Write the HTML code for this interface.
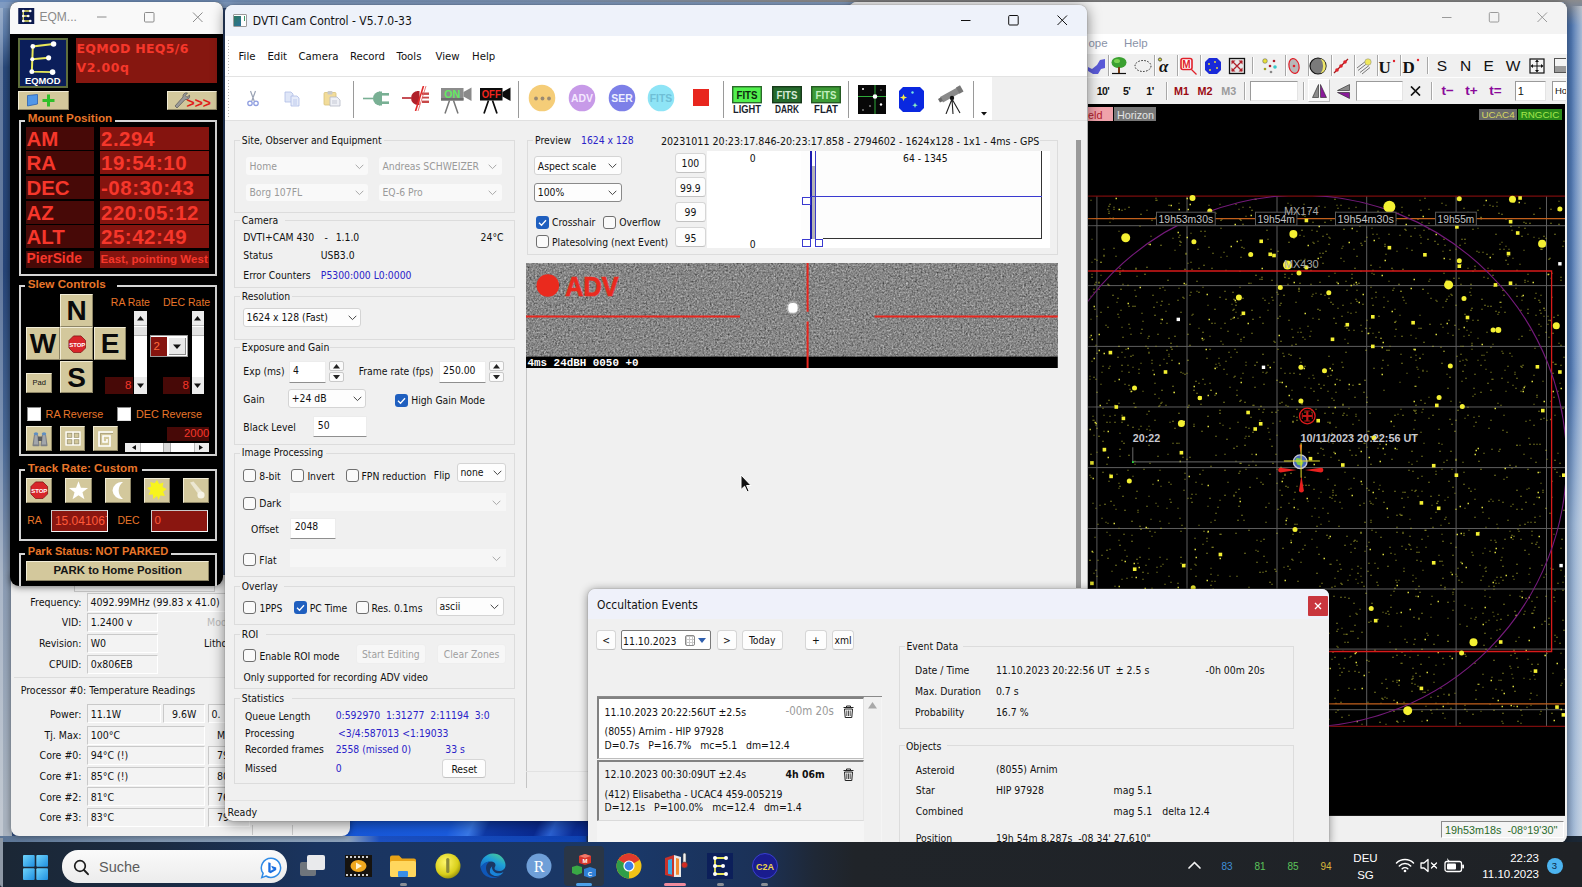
<!DOCTYPE html>
<html lang="de"><head><meta charset="utf-8"><title>Desktop</title>
<style>
html,body{margin:0;padding:0;background:#1b2735}
body{width:1582px;height:887px;overflow:hidden;position:relative;font-family:"Liberation Sans","DejaVu Sans",sans-serif}
#scr{position:absolute;left:0;top:0;width:1582px;height:887px;overflow:hidden}
#scr div,#scr svg{position:absolute}
.th{left:0;top:0;width:1582px;height:887px;font-family:"DejaVu Sans Condensed","Liberation Sans",sans-serif}
</style></head><body><div id="scr">
<div style="left:0;top:0;width:1582px;height:887px;background:#33507f"></div>
<div style="left:0px;top:0px;width:12px;height:845px;background:linear-gradient(180deg,#7d99bd 0%,#5a7aa8 4%,#2a4a7c 8%,#27467a 32%,#4a6a98 52%,#8a9bb3 68%,#a9b3bf 96%)"></div>
<div style="left:0px;top:0px;width:2.5px;height:845px;background:rgba(255,255,255,.28)"></div>
<div style="left:0px;top:0px;width:1582px;height:8px;background:linear-gradient(90deg,#7f9bc2 0%,#86a0c4 50%,#8fa3bd 100%)"></div>
<div style="left:0px;top:0px;width:1582px;height:1.6px;background:linear-gradient(90deg,#6d8ebd 0%,#7e95b3 35%,#8d8d8e 50%,#8a8a8a 100%)"></div>
<div style="left:1564px;top:0px;width:18px;height:845px;background:linear-gradient(180deg,#8c8c8e 0%,#4f78b4 3%,#547db8 45%,#8eabd0 62%,#9db6d6 100%)"></div>
<div style="left:1571px;top:6px;width:11px;height:839px;background:linear-gradient(90deg,rgba(255,255,255,0),rgba(226,230,234,.6))"></div>
<div style="left:340px;top:815px;width:260px;height:30px;background:linear-gradient(115deg,#1657d8 0%,#1a5ce0 42%,#3a7aea 50%,#0f3aa8 56%,#0a2a92 74%,#2b62d4 80%,#0c2f9a 88%,#0b2c94 100%)"></div>
<div style="left:0px;top:836px;width:1582px;height:6px;background:linear-gradient(90deg,#5b7596 0%,#8096b0 10%,#8ea3bb 22%,#1b4fc0 24%,#0f43b4 37%,#1b2735 37.2%)"></div>

<!-- Core Temp + EQMOD -->

<div class="th">
<div style="left:10.5px;top:575px;width:339.5px;height:260.5px;background:#f0f0f0;border-radius:0 0 8px 8px;box-shadow:0 0 6px rgba(0,0,0,.45)"></div>
<div style="left:74px;top:585px;width:141px;height:7px;background:#f3f3f3;border:1px solid #c9c9c9;box-sizing:border-box"></div>
<div style="right:1500.5px;top:595px;font-size:10.5px;line-height:14px;color:#111;white-space:nowrap;">Frequency:</div>
<div style="left:86.7px;top:592.7px;width:139.3px;height:19px;background:#f3f3f3;box-sizing:border-box;border:1px solid #c9c9c9;border-right-color:#fff;border-bottom-color:#fff"></div>
<div style="left:90.5px;top:595px;font-size:10.5px;line-height:14px;color:#111;white-space:nowrap;">4092.99MHz (99.83 x 41.0)</div>
<div style="right:1500.5px;top:615.4px;font-size:10.5px;line-height:14px;color:#111;white-space:nowrap;">VID:</div>
<div style="left:86.7px;top:613.1px;width:70.9px;height:19px;background:#f3f3f3;box-sizing:border-box;border:1px solid #c9c9c9;border-right-color:#fff;border-bottom-color:#fff"></div>
<div style="left:90.7px;top:615.4px;font-size:10.5px;line-height:14px;color:#111;white-space:nowrap;">1.2400 v</div>
<div style="right:1500.5px;top:636.1px;font-size:10.5px;line-height:14px;color:#111;white-space:nowrap;">Revision:</div>
<div style="left:86.7px;top:633.8px;width:70.9px;height:19px;background:#f3f3f3;box-sizing:border-box;border:1px solid #c9c9c9;border-right-color:#fff;border-bottom-color:#fff"></div>
<div style="left:90.7px;top:636.1px;font-size:10.5px;line-height:14px;color:#111;white-space:nowrap;">W0</div>
<div style="right:1500.5px;top:656.8px;font-size:10.5px;line-height:14px;color:#111;white-space:nowrap;">CPUID:</div>
<div style="left:86.7px;top:654.5px;width:70.9px;height:19px;background:#f3f3f3;box-sizing:border-box;border:1px solid #c9c9c9;border-right-color:#fff;border-bottom-color:#fff"></div>
<div style="left:90.7px;top:656.8px;font-size:10.5px;line-height:14px;color:#111;white-space:nowrap;">0x806EB</div>
<div style="left:207px;top:615.4px;font-size:10.5px;line-height:14px;color:#b8b8b8;white-space:nowrap;">Mod</div>
<div style="left:204px;top:636.1px;font-size:10.5px;line-height:14px;color:#111;white-space:nowrap;">Litho</div>
<div style="left:14px;top:677px;width:336px;height:1px;background:#dcdcdc"></div>
<div style="left:20.7px;top:683px;font-size:10.5px;line-height:14px;color:#111;white-space:nowrap;">Processor #0: Temperature Readings</div>
<div style="right:1500.5px;top:706.7px;font-size:10.5px;line-height:14px;color:#111;white-space:nowrap;">Power:</div>
<div style="left:86.7px;top:704.4px;width:74.6px;height:19px;background:#f3f3f3;box-sizing:border-box;border:1px solid #c9c9c9;border-right-color:#fff;border-bottom-color:#fff"></div>
<div style="left:90.7px;top:706.7px;font-size:10.5px;line-height:14px;color:#111;white-space:nowrap;">11.1W</div>
<div style="left:163.4px;top:704.4px;width:42px;height:19px;background:#f3f3f3;box-sizing:border-box;border:1px solid #c9c9c9;border-right-color:#fff;border-bottom-color:#fff"></div>
<div style="left:172px;top:706.7px;font-size:10.5px;line-height:14px;color:#111;white-space:nowrap;">9.6W</div>
<div style="left:207.5px;top:704.4px;width:42.5px;height:19px;background:#f3f3f3;box-sizing:border-box;border:1px solid #c9c9c9;border-right-color:#fff;border-bottom-color:#fff"></div>
<div style="left:211.5px;top:706.7px;font-size:10.5px;line-height:14px;color:#111;white-space:nowrap;">0.</div>
<div style="right:1500.5px;top:728px;font-size:10.5px;line-height:14px;color:#111;white-space:nowrap;">Tj. Max:</div>
<div style="left:86.7px;top:725.7px;width:118.7px;height:19px;background:#f3f3f3;box-sizing:border-box;border:1px solid #c9c9c9;border-right-color:#fff;border-bottom-color:#fff"></div>
<div style="left:90.7px;top:728px;font-size:10.5px;line-height:14px;color:#111;white-space:nowrap;">100°C</div>
<div style="left:217px;top:728px;font-size:10.5px;line-height:14px;color:#111;white-space:nowrap;">M</div>
<div style="right:1500.5px;top:748.4px;font-size:10.5px;line-height:14px;color:#111;white-space:nowrap;">Core #0:</div>
<div style="left:86.7px;top:746.1px;width:118.7px;height:19px;background:#f3f3f3;box-sizing:border-box;border:1px solid #c9c9c9;border-right-color:#fff;border-bottom-color:#fff"></div>
<div style="left:90.7px;top:748.4px;font-size:10.5px;line-height:14px;color:#111;white-space:nowrap;">94°C (!)</div>
<div style="left:207.5px;top:746.1px;width:42.5px;height:19px;background:#f3f3f3;box-sizing:border-box;border:1px solid #c9c9c9;border-right-color:#fff;border-bottom-color:#fff"></div>
<div style="left:217px;top:748.4px;font-size:10.5px;line-height:14px;color:#111;white-space:nowrap;">79</div>
<div style="right:1500.5px;top:769.1px;font-size:10.5px;line-height:14px;color:#111;white-space:nowrap;">Core #1:</div>
<div style="left:86.7px;top:766.8px;width:118.7px;height:19px;background:#f3f3f3;box-sizing:border-box;border:1px solid #c9c9c9;border-right-color:#fff;border-bottom-color:#fff"></div>
<div style="left:90.7px;top:769.1px;font-size:10.5px;line-height:14px;color:#111;white-space:nowrap;">85°C (!)</div>
<div style="left:207.5px;top:766.8px;width:42.5px;height:19px;background:#f3f3f3;box-sizing:border-box;border:1px solid #c9c9c9;border-right-color:#fff;border-bottom-color:#fff"></div>
<div style="left:217px;top:769.1px;font-size:10.5px;line-height:14px;color:#111;white-space:nowrap;">80</div>
<div style="right:1500.5px;top:789.5px;font-size:10.5px;line-height:14px;color:#111;white-space:nowrap;">Core #2:</div>
<div style="left:86.7px;top:787.2px;width:118.7px;height:19px;background:#f3f3f3;box-sizing:border-box;border:1px solid #c9c9c9;border-right-color:#fff;border-bottom-color:#fff"></div>
<div style="left:90.7px;top:789.5px;font-size:10.5px;line-height:14px;color:#111;white-space:nowrap;">81°C</div>
<div style="left:207.5px;top:787.2px;width:42.5px;height:19px;background:#f3f3f3;box-sizing:border-box;border:1px solid #c9c9c9;border-right-color:#fff;border-bottom-color:#fff"></div>
<div style="left:217px;top:789.5px;font-size:10.5px;line-height:14px;color:#111;white-space:nowrap;">76</div>
<div style="right:1500.5px;top:809.9px;font-size:10.5px;line-height:14px;color:#111;white-space:nowrap;">Core #3:</div>
<div style="left:86.7px;top:807.6px;width:118.7px;height:19px;background:#f3f3f3;box-sizing:border-box;border:1px solid #c9c9c9;border-right-color:#fff;border-bottom-color:#fff"></div>
<div style="left:90.7px;top:809.9px;font-size:10.5px;line-height:14px;color:#111;white-space:nowrap;">83°C</div>
<div style="left:207.5px;top:807.6px;width:42.5px;height:19px;background:#f3f3f3;box-sizing:border-box;border:1px solid #c9c9c9;border-right-color:#fff;border-bottom-color:#fff"></div>
<div style="left:217px;top:809.9px;font-size:10.5px;line-height:14px;color:#111;white-space:nowrap;">79</div>
<div style="left:252px;top:825px;width:41px;height:10px;border-left:1px solid #c9c9c9;border-right:1px solid #c9c9c9;box-sizing:border-box"></div>
</div>
<div style="left:10px;top:2px;width:212.5px;height:584px;background:#000;border-radius:8px 8px 9px 9px;box-shadow:0 1px 7px rgba(0,0,0,.55)"></div>
<div style="left:10px;top:2px;width:212.5px;height:32px;background:#f9f9f9;border-radius:8px 8px 0 0"></div>
<svg style="left:18.3px;top:8.4px" width="16.5" height="16" viewBox="0 0 16 16"><rect width="16" height="16" fill="#0c1a4e"/><path d="M12 3H5v10h7M5 8h5" fill="none" stroke="#e6e45e" stroke-width="1.3"/><g fill="#fff"><circle cx="5" cy="3" r="1.3"/><circle cx="12" cy="3" r="1.3"/><circle cx="5" cy="13" r="1.3"/><circle cx="12" cy="13" r="1.3"/><circle cx="10" cy="8" r="1.3"/><circle cx="5" cy="8" r="1.3"/></g></svg>
<div style="left:39.5px;top:9.2px;font-size:12px;line-height:16px;color:#8a8a8a;white-space:nowrap;">EQM...</div>
<svg style="left:96px;top:11px" width="110" height="13" viewBox="0 0 110 13"><g fill="none" stroke="#8c8c8c" stroke-width="1"><path d="M1 6h9.5"/><rect x="48.5" y="1.5" width="9.5" height="9.5" rx="1"/><path d="M97 1.5l9.5 9.5M106.5 1.5l-9.5 9.5"/></g></svg>
<div style="left:18.3px;top:38px;width:49.4px;height:49.5px;background:#0b1e5a;box-sizing:border-box;border:2px solid #5f6e3c"></div>
<svg style="left:18.3px;top:38px" width="49.4" height="49.5" viewBox="0 0 50 50"><path d="M36 6L15 8.5 14 34l21 .5M14.5 21.5l16.5-1.5" fill="none" stroke="#e9e85a" stroke-width="2"/><g fill="#fff"><circle cx="36" cy="6" r="2.8"/><circle cx="15" cy="8.5" r="2.4"/><circle cx="31" cy="20" r="2.6"/><circle cx="14.5" cy="21.5" r="2.1"/><circle cx="14" cy="34" r="2.5"/><circle cx="35" cy="34.5" r="2.8"/></g><text x="25" y="46.5" font-size="9.5" font-weight="bold" fill="#fff" text-anchor="middle" font-family="Liberation Sans,sans-serif">EQMOD</text></svg>
<div style="left:75.8px;top:38.4px;width:141.6px;height:45px;background:#861710"></div>
<div style="left:76.5px;top:41px;font-size:12.5px;line-height:16px;color:#f6372b;white-space:nowrap;font-weight:bold;letter-spacing:0.3px;font-family:'DejaVu Sans','Liberation Sans',sans-serif">EQMOD HEQ5/6</div>
<div style="left:76.5px;top:60px;font-size:12.5px;line-height:16px;color:#f6372b;white-space:nowrap;font-weight:bold;letter-spacing:0.6px;font-family:'DejaVu Sans','Liberation Sans',sans-serif">V2.00q</div>
<div style="left:18.3px;top:91px;width:50.5px;height:18.6px;background:#d3c89c;box-sizing:border-box;border-top:1.5px solid #f1ecd6;border-left:1.5px solid #f1ecd6;border-right:1.5px solid #8d8566;border-bottom:1.5px solid #8d8566;"></div>
<svg style="left:26px;top:93px" width="34" height="15" viewBox="0 0 34 15"><path d="M1.5 2.5l10-1v9.5l-10 2z" fill="#4f97e8" stroke="#2a5fb0" stroke-width="0.8"/><path d="M22.5 1.5v12M16.5 7.5h12" stroke="#2fc02a" stroke-width="3"/></svg>
<div style="left:167px;top:91px;width:50.4px;height:18.6px;background:#d3c89c;box-sizing:border-box;border-top:1.5px solid #f1ecd6;border-left:1.5px solid #f1ecd6;border-right:1.5px solid #8d8566;border-bottom:1.5px solid #8d8566;"></div>
<svg style="left:172px;top:92px" width="44" height="17" viewBox="0 0 44 17"><path d="M3 14L11 5a3.5 3.5 0 0 1 4.5-4l-2.2 2.5 1.7 1.8 2.5-2.2a3.5 3.5 0 0 1-4.3 4.4L5 16z" fill="#9a9a9a" stroke="#555" stroke-width="0.7"/><text x="14.5" y="16" font-size="14" font-weight="bold" fill="#e0201a" font-family="Liberation Sans,sans-serif">&gt;&gt;&gt;</text></svg>
<div style="left:19.3px;top:119.7px;width:197.6px;height:156px;border:2px solid #d6d6d6;box-sizing:border-box"></div>
<div style="left:25.3px;top:115.7px;width:90px;height:9px;background:#000"></div>
<div style="left:27.8px;top:110.2px;font-size:11.7px;line-height:15px;color:#e8762a;white-space:nowrap;font-weight:bold">Mount Position</div>
<div style="left:26.1px;top:126.8px;width:67.5px;height:23px;background:#470907"></div>
<div style="left:100.3px;top:126.8px;width:109.1px;height:23px;background:#85140f"></div>
<div style="left:26.6px;top:126.6px;font-size:20.5px;line-height:24px;color:#f6372b;white-space:nowrap;font-weight:bold;letter-spacing:-0.1px">AM</div>
<div style="left:101px;top:126.6px;font-size:20.5px;line-height:24px;color:#f6372b;white-space:nowrap;font-weight:bold;letter-spacing:0.5px">2.294</div>
<div style="left:26.1px;top:151.4px;width:67.5px;height:23px;background:#470907"></div>
<div style="left:100.3px;top:151.4px;width:109.1px;height:23px;background:#85140f"></div>
<div style="left:26.6px;top:151.2px;font-size:20.5px;line-height:24px;color:#f6372b;white-space:nowrap;font-weight:bold;letter-spacing:-0.1px">RA</div>
<div style="left:101px;top:151.2px;font-size:20.5px;line-height:24px;color:#f6372b;white-space:nowrap;font-weight:bold;letter-spacing:0.5px">19:54:10</div>
<div style="left:26.1px;top:176.1px;width:67.5px;height:23px;background:#470907"></div>
<div style="left:100.3px;top:176.1px;width:109.1px;height:23px;background:#85140f"></div>
<div style="left:26.6px;top:175.9px;font-size:20.5px;line-height:24px;color:#f6372b;white-space:nowrap;font-weight:bold;letter-spacing:-0.1px">DEC</div>
<div style="left:101px;top:175.9px;font-size:20.5px;line-height:24px;color:#f6372b;white-space:nowrap;font-weight:bold;letter-spacing:0.5px">-08:30:43</div>
<div style="left:26.1px;top:200.8px;width:67.5px;height:23px;background:#470907"></div>
<div style="left:100.3px;top:200.8px;width:109.1px;height:23px;background:#85140f"></div>
<div style="left:26.6px;top:200.6px;font-size:20.5px;line-height:24px;color:#f6372b;white-space:nowrap;font-weight:bold;letter-spacing:-0.1px">AZ</div>
<div style="left:101px;top:200.6px;font-size:20.5px;line-height:24px;color:#f6372b;white-space:nowrap;font-weight:bold;letter-spacing:0.5px">220:05:12</div>
<div style="left:26.1px;top:225.4px;width:67.5px;height:23px;background:#470907"></div>
<div style="left:100.3px;top:225.4px;width:109.1px;height:23px;background:#85140f"></div>
<div style="left:26.6px;top:225.2px;font-size:20.5px;line-height:24px;color:#f6372b;white-space:nowrap;font-weight:bold;letter-spacing:-0.1px">ALT</div>
<div style="left:101px;top:225.2px;font-size:20.5px;line-height:24px;color:#f6372b;white-space:nowrap;font-weight:bold;letter-spacing:0.5px">25:42:49</div>
<div style="left:26.1px;top:250.6px;width:67.5px;height:17.2px;background:#470907"></div>
<div style="left:100.3px;top:250.6px;width:109.1px;height:17.2px;background:#85140f"></div>
<div style="left:26.6px;top:250.3px;font-size:13.8px;line-height:18px;color:#f6372b;white-space:nowrap;font-weight:bold">PierSide</div>
<div style="left:100.5px;top:251px;font-size:11.6px;line-height:15px;color:#f6372b;white-space:nowrap;font-weight:bold">East, pointing West</div>
<div style="left:19.3px;top:285.4px;width:197.6px;height:170.6px;border:2px solid #d6d6d6;box-sizing:border-box"></div>
<div style="left:25.3px;top:281.4px;width:92px;height:9px;background:#000"></div>
<div style="left:27.8px;top:275.9px;font-size:11.7px;line-height:15px;color:#e8762a;white-space:nowrap;font-weight:bold">Slew Controls</div>
<div style="left:60px;top:294px;width:33.2px;height:32.8px;background:#d3c89c;box-sizing:border-box;border-top:1.5px solid #f1ecd6;border-left:1.5px solid #f1ecd6;border-right:1.5px solid #8d8566;border-bottom:1.5px solid #8d8566;font-size:28px;font-weight:bold;color:#0a0a0a;text-align:center;line-height:31px">N</div>
<div style="left:26.1px;top:327.4px;width:33.9px;height:32.6px;background:#d3c89c;box-sizing:border-box;border-top:1.5px solid #f1ecd6;border-left:1.5px solid #f1ecd6;border-right:1.5px solid #8d8566;border-bottom:1.5px solid #8d8566;font-size:28px;font-weight:bold;color:#0a0a0a;text-align:center;line-height:31px">W</div>
<div style="left:60.4px;top:327.4px;width:32.6px;height:32.6px;background:#d3c89c;box-sizing:border-box;border-top:1.5px solid #f1ecd6;border-left:1.5px solid #f1ecd6;border-right:1.5px solid #8d8566;border-bottom:1.5px solid #8d8566;"></div>
<div style="left:93.6px;top:327.4px;width:32.8px;height:32.6px;background:#d3c89c;box-sizing:border-box;border-top:1.5px solid #f1ecd6;border-left:1.5px solid #f1ecd6;border-right:1.5px solid #8d8566;border-bottom:1.5px solid #8d8566;font-size:28px;font-weight:bold;color:#0a0a0a;text-align:center;line-height:31px">E</div>
<div style="left:60.4px;top:361px;width:32.6px;height:31.6px;background:#d3c89c;box-sizing:border-box;border-top:1.5px solid #f1ecd6;border-left:1.5px solid #f1ecd6;border-right:1.5px solid #8d8566;border-bottom:1.5px solid #8d8566;font-size:28px;font-weight:bold;color:#0a0a0a;text-align:center;line-height:31px">S</div>
<svg style="left:67.5px;top:334.5px" width="18.5" height="18.5" viewBox="0 0 20 20"><path d="M6 1h8l5 5v8l-5 5H6l-5-5V6z" fill="#d8262a" stroke="#7a0f10" stroke-width="0.8"/><text x="10" y="12.6" font-size="6.5" font-weight="bold" fill="#fff" text-anchor="middle" font-family="Liberation Sans,sans-serif">STOP</text></svg>
<div style="left:26.1px;top:373.3px;width:26.4px;height:20.1px;background:#d3c89c;box-sizing:border-box;border-top:1.5px solid #f1ecd6;border-left:1.5px solid #f1ecd6;border-right:1.5px solid #8d8566;border-bottom:1.5px solid #8d8566;font-size:7.5px;color:#111;text-align:center;line-height:18px">Pad</div>
<div style="left:110.8px;top:294.5px;font-size:10.5px;line-height:14px;color:#e8762a;white-space:nowrap;">RA Rate</div>
<div style="left:162.9px;top:294.5px;font-size:10.5px;line-height:14px;color:#e8762a;white-space:nowrap;">DEC Rate</div>
<div style="left:133.9px;top:310.7px;width:12.9px;height:82.9px;background:#fff"></div>
<div style="left:133.9px;top:310.7px;width:12.9px;height:15.3px;background:#ececec;border-bottom:1px solid #bbb;box-sizing:border-box"></div>
<div style="left:133.9px;top:326.5px;width:12.9px;height:9.5px;background:#e2e2e2;border-bottom:1px solid #b5b5b5;box-sizing:border-box"></div>
<div style="left:133.9px;top:377px;width:12.9px;height:16.6px;background:#ececec"></div>
<svg style="left:136.85000000000002px;top:316px" width="7" height="5"><path d="M0 4.5L3.5 0 7 4.5z" fill="#111"/></svg>
<svg style="left:136.85000000000002px;top:382.5px" width="7" height="5"><path d="M0 0.5L3.5 5 7 0.5z" fill="#111"/></svg>
<div style="left:191.8px;top:310.7px;width:12.2px;height:82.9px;background:#fff"></div>
<div style="left:191.8px;top:310.7px;width:12.2px;height:15.3px;background:#ececec;border-bottom:1px solid #bbb;box-sizing:border-box"></div>
<div style="left:191.8px;top:326.5px;width:12.2px;height:9.5px;background:#e2e2e2;border-bottom:1px solid #b5b5b5;box-sizing:border-box"></div>
<div style="left:191.8px;top:377px;width:12.2px;height:16.6px;background:#ececec"></div>
<svg style="left:194.4px;top:316px" width="7" height="5"><path d="M0 4.5L3.5 0 7 4.5z" fill="#111"/></svg>
<svg style="left:194.4px;top:382.5px" width="7" height="5"><path d="M0 0.5L3.5 5 7 0.5z" fill="#111"/></svg>
<div style="left:149.6px;top:335.4px;width:38.5px;height:22px;background:#fff;box-sizing:border-box;border:1.5px solid #9a9a9a"></div>
<div style="left:151.4px;top:337px;width:16.1px;height:18.8px;background:#85140f"></div>
<div style="left:153.5px;top:339.1px;font-size:11.5px;line-height:15px;color:#ff6a3a;white-space:nowrap;">2</div>
<div style="left:168.5px;top:337.5px;width:17px;height:17.9px;background:#e8e8e8;border-right:1px solid #8a8a8a;border-bottom:1px solid #8a8a8a;box-sizing:border-box"></div>
<svg style="left:173px;top:344px" width="8" height="5"><path d="M0 0.5L4 5 8 0.5z" fill="#111"/></svg>
<div style="left:105.4px;top:376.5px;width:27.9px;height:17.4px;background:#470907"></div>
<div style="right:1450.5px;top:378px;font-size:11.5px;line-height:15px;color:#f6372b;white-space:nowrap;">8</div>
<div style="left:163.3px;top:376.5px;width:26.8px;height:17.4px;background:#470907"></div>
<div style="right:1393px;top:378px;font-size:11.5px;line-height:15px;color:#f6372b;white-space:nowrap;">8</div>
<div style="left:26.8px;top:407.1px;width:13.9px;height:13.5px;background:#fff;box-sizing:border-box;border:1.5px solid #8a8a8a;border-right-color:#e0e0e0;border-bottom-color:#e0e0e0"></div>
<div style="left:45.6px;top:406.6px;font-size:10.8px;line-height:14px;color:#e8762a;white-space:nowrap;">RA Reverse</div>
<div style="left:117.4px;top:407.1px;width:13.7px;height:13.5px;background:#fff;box-sizing:border-box;border:1.5px solid #8a8a8a;border-right-color:#e0e0e0;border-bottom-color:#e0e0e0"></div>
<div style="left:136px;top:406.6px;font-size:10.8px;line-height:14px;color:#e8762a;white-space:nowrap;">DEC Reverse</div>
<div style="left:26.1px;top:426px;width:26.4px;height:25px;background:#d3c89c;box-sizing:border-box;border-top:1.5px solid #f1ecd6;border-left:1.5px solid #f1ecd6;border-right:1.5px solid #8d8566;border-bottom:1.5px solid #8d8566;"></div>
<div style="left:59.6px;top:426px;width:25.7px;height:25px;background:#d3c89c;box-sizing:border-box;border-top:1.5px solid #f1ecd6;border-left:1.5px solid #f1ecd6;border-right:1.5px solid #8d8566;border-bottom:1.5px solid #8d8566;"></div>
<div style="left:92.6px;top:426px;width:25.7px;height:25px;background:#d3c89c;box-sizing:border-box;border-top:1.5px solid #f1ecd6;border-left:1.5px solid #f1ecd6;border-right:1.5px solid #8d8566;border-bottom:1.5px solid #8d8566;"></div>
<svg style="left:30.5px;top:429.5px" width="18" height="18" viewBox="0 0 18 18"><path d="M3 4.5h4l1.5 10.5a1 1 0 0 1-1 1.2H2.5a1 1 0 0 1-1-1.2z" fill="#7d7f84"/><path d="M11 4.5h4l1.5 10.5a1 1 0 0 1-1 1.2h-5a1 1 0 0 1-1-1.2z" fill="#7d7f84"/><path d="M4 4.5h2.2l1 10H2.8z" fill="#a3a6ab"/><path d="M12 4.5h2.2l1 10h-4.400z" fill="#a3a6ab"/><rect x="7" y="6.5" width="4" height="4.5" fill="#5a5c60"/><ellipse cx="5" cy="3.8" rx="2.2" ry="1.5" fill="#5f8ec2"/><ellipse cx="13" cy="3.8" rx="2.2" ry="1.5" fill="#5f8ec2"/></svg>
<svg style="left:64.5px;top:431px" width="16" height="15" viewBox="0 0 16 15"><g fill="none" stroke="#fff" stroke-width="1.3"><rect x="1" y="1" width="14" height="13"/><path d="M8 1v13M1 7.5h14"/></g><g fill="none" stroke="#9a9478" stroke-width="0.6"><rect x="2.3" y="2.3" width="4.5" height="4"/><rect x="9.3" y="2.3" width="4.5" height="4"/><rect x="2.3" y="8.8" width="4.5" height="4"/><rect x="9.3" y="8.8" width="4.5" height="4"/></g></svg>
<svg style="left:97.5px;top:430.5px" width="16" height="16" viewBox="0 0 16 16"><path d="M15 1H1v14h11V5H5v6h4V8" fill="none" stroke="#fff" stroke-width="1.6"/><path d="M15 2.5H2.5v11" fill="none" stroke="#8d8566" stroke-width="0.5"/></svg>
<div style="left:166.7px;top:427.1px;width:42.7px;height:14.3px;background:#470907"></div>
<div style="right:1372.8px;top:425.9px;font-size:11.3px;line-height:15px;color:#f6372b;white-space:nowrap;">2000</div>
<div style="left:125.4px;top:442.5px;width:83.5px;height:9.6px;background:#fff"></div>
<div style="left:125.4px;top:442.5px;width:15.6px;height:9.6px;background:#ececec;border-right:1px solid #bbb;box-sizing:border-box"></div>
<div style="left:193.5px;top:442.5px;width:15.4px;height:9.6px;background:#ececec;border-left:1px solid #bbb;box-sizing:border-box"></div>
<div style="left:163px;top:442.5px;width:7.5px;height:9.6px;background:#d9d9d9;border-left:1px solid #aaa;border-right:1px solid #aaa;box-sizing:border-box"></div>
<svg style="left:131.5px;top:445px" width="4" height="5"><path d="M4 0L0 2.5 4 5z" fill="#111"/></svg>
<svg style="left:198.5px;top:445px" width="4" height="5"><path d="M0 0L4 2.5 0 5z" fill="#111"/></svg>
<div style="left:19.3px;top:469.4px;width:197.6px;height:71.3px;border:2px solid #d6d6d6;box-sizing:border-box"></div>
<div style="left:25.3px;top:465.4px;width:117px;height:9px;background:#000"></div>
<div style="left:27.8px;top:459.9px;font-size:11.7px;line-height:15px;color:#e8762a;white-space:nowrap;font-weight:bold">Track Rate: Custom</div>
<div style="left:26.1px;top:477.5px;width:26.4px;height:25.1px;background:#d3c89c;box-sizing:border-box;border-top:1.5px solid #f1ecd6;border-left:1.5px solid #f1ecd6;border-right:1.5px solid #8d8566;border-bottom:1.5px solid #8d8566;"></div>
<div style="left:65.4px;top:477.5px;width:26.3px;height:25.1px;background:#d3c89c;box-sizing:border-box;border-top:1.5px solid #f1ecd6;border-left:1.5px solid #f1ecd6;border-right:1.5px solid #8d8566;border-bottom:1.5px solid #8d8566;"></div>
<div style="left:105px;top:477.5px;width:26.1px;height:25.1px;background:#d3c89c;box-sizing:border-box;border-top:1.5px solid #f1ecd6;border-left:1.5px solid #f1ecd6;border-right:1.5px solid #8d8566;border-bottom:1.5px solid #8d8566;"></div>
<div style="left:144px;top:477.5px;width:26.3px;height:25.1px;background:#d3c89c;box-sizing:border-box;border-top:1.5px solid #f1ecd6;border-left:1.5px solid #f1ecd6;border-right:1.5px solid #8d8566;border-bottom:1.5px solid #8d8566;"></div>
<div style="left:183.2px;top:477.5px;width:26.2px;height:25.1px;background:#d3c89c;box-sizing:border-box;border-top:1.5px solid #f1ecd6;border-left:1.5px solid #f1ecd6;border-right:1.5px solid #8d8566;border-bottom:1.5px solid #8d8566;"></div>
<svg style="left:30px;top:480.5px" width="18.5" height="18.5" viewBox="0 0 20 20"><path d="M6 1h8l5 5v8l-5 5H6l-5-5V6z" fill="#d8262a" stroke="#7a0f10" stroke-width="0.8"/><text x="10" y="12.6" font-size="6.5" font-weight="bold" fill="#fff" text-anchor="middle" font-family="Liberation Sans,sans-serif">STOP</text></svg>
<svg style="left:68px;top:479.5px" width="21" height="21" viewBox="0 0 18 18"><path d="M9 1l2.1 5.7 6.1.2-4.8 3.7 1.7 5.9L9 13.1l-5.1 3.4 1.7-5.9L.800 6.9l6.1-.2z" fill="#fff"/></svg>
<svg style="left:110px;top:480.5px" width="16" height="19" viewBox="0 0 16 19"><path d="M13 1a10.5 10.5 0 0 0 0 17A9.3 9.3 0 0 1 2.5 9.5 9.3 9.3 0 0 1 13 1z" fill="#fff"/></svg>
<svg style="left:147px;top:480px" width="20" height="20" viewBox="0 0 20 20"><path d="M10 0l2.2 4 4.3-1.5-1 4.4L19.7 9l-3.6 2.8 1.8 4.2-4.5-.5L11.5 20 10 16l-3.8 3 -.4-4.6-4.5.4 2.2-4L0 8l4.2-1.6-1-4.4 4.4 1.2z" fill="#f7f41e"/></svg>
<svg style="left:187px;top:480.5px" width="19" height="19" viewBox="0 0 19 19"><path d="M3 1.5l3.5-1L15 10.5l-3.5 3z" fill="#ece7d2"/><circle cx="14" cy="14" r="3.6" fill="#f6f3e6"/></svg>
<div style="left:27.2px;top:512.7px;font-size:10.5px;line-height:14px;color:#e8762a;white-space:nowrap;">RA</div>
<div style="left:117.4px;top:512.7px;font-size:10.5px;line-height:14px;color:#e8762a;white-space:nowrap;">DEC</div>
<div style="left:51.4px;top:510.3px;width:56.8px;height:21.8px;background:#8a1610;box-sizing:border-box;border:1.5px solid #c9c9c9;border-right-color:#f4f4f4;border-bottom-color:#f4f4f4;overflow:hidden"><span style="position:absolute;left:2.5px;top:1.5px;font-size:12px;line-height:16px;color:#ff5a3a;white-space:nowrap">15.041067</span></div>
<div style="left:150.6px;top:510.3px;width:57.2px;height:21.8px;background:#8a1610;box-sizing:border-box;border:1.5px solid #c9c9c9;border-right-color:#f4f4f4;border-bottom-color:#f4f4f4"></div>
<div style="left:154.5px;top:512.7px;font-size:11.5px;line-height:15px;color:#ff5a3a;white-space:nowrap;">0</div>
<div style="left:19.3px;top:552.5px;width:197.6px;height:37.5px;border:2px solid #d6d6d6;border-bottom:none;box-sizing:border-box;height:33px"></div>
<div style="left:25.3px;top:548.5px;width:146px;height:9px;background:#000"></div>
<div style="left:27.8px;top:543.5px;font-size:11.1px;line-height:14px;color:#e8762a;white-space:nowrap;font-weight:bold">Park Status: NOT PARKED</div>
<div style="left:26.1px;top:561px;width:183.3px;height:19.8px;background:#d3c89c;box-sizing:border-box;border-top:1.5px solid #f1ecd6;border-left:1.5px solid #f1ecd6;border-right:1.5px solid #8d8566;border-bottom:1.5px solid #8d8566;font-size:11.4px;font-weight:bold;color:#151515;text-align:center;line-height:17px">PARK to Home Position</div>

<!-- C2A planetarium -->

<div style="left:849px;top:2px;width:717.6px;height:841px;background:#f0f0f0;border-radius:8px;box-shadow:0 1px 8px rgba(0,0,0,.5)"></div>
<div style="left:849px;top:2px;width:717.6px;height:31.5px;background:#f3f3f3;border-radius:8px 8px 0 0"></div>
<svg style="left:1441px;top:11px" width="110" height="13" viewBox="0 0 110 13"><g fill="none" stroke="#9a9a9a" stroke-width="1"><path d="M1 6.5h9.5"/><rect x="48.3" y="1.5" width="9.5" height="9.5" rx="1"/><path d="M96.5 1.5l9.5 9.5M106 1.5l-9.5 9.5"/></g></svg>
<div style="left:849px;top:33.5px;width:717.6px;height:20.5px;background:#fff"></div>
<div style="left:1088.4px;top:36.1px;font-size:11.5px;line-height:15px;color:#8a93a8;white-space:nowrap;">ope</div>
<div style="left:1124px;top:36.1px;font-size:11.5px;line-height:15px;color:#8a93a8;white-space:nowrap;">Help</div>
<div style="left:849px;top:54px;width:717.6px;height:50.3px;background:#f0f0f0"></div>
<div style="left:849px;top:77px;width:717.6px;height:1px;background:#fdfdfd"></div>
<div style="left:1108px;top:55px;width:1px;height:21px;background:#a8a8a8"></div>
<div style="left:1109px;top:55px;width:1px;height:21px;background:#fff"></div>
<div style="left:1154px;top:55px;width:1px;height:21px;background:#a8a8a8"></div>
<div style="left:1155px;top:55px;width:1px;height:21px;background:#fff"></div>
<div style="left:1177px;top:55px;width:1px;height:21px;background:#a8a8a8"></div>
<div style="left:1178px;top:55px;width:1px;height:21px;background:#fff"></div>
<div style="left:1200px;top:55px;width:1px;height:21px;background:#a8a8a8"></div>
<div style="left:1201px;top:55px;width:1px;height:21px;background:#fff"></div>
<div style="left:1285px;top:55px;width:1px;height:21px;background:#a8a8a8"></div>
<div style="left:1286px;top:55px;width:1px;height:21px;background:#fff"></div>
<div style="left:1308px;top:55px;width:1px;height:21px;background:#a8a8a8"></div>
<div style="left:1309px;top:55px;width:1px;height:21px;background:#fff"></div>
<div style="left:1331px;top:55px;width:1px;height:21px;background:#a8a8a8"></div>
<div style="left:1332px;top:55px;width:1px;height:21px;background:#fff"></div>
<div style="left:1354px;top:55px;width:1px;height:21px;background:#a8a8a8"></div>
<div style="left:1355px;top:55px;width:1px;height:21px;background:#fff"></div>
<div style="left:1377px;top:55px;width:1px;height:21px;background:#a8a8a8"></div>
<div style="left:1378px;top:55px;width:1px;height:21px;background:#fff"></div>
<div style="left:1400px;top:55px;width:1px;height:21px;background:#a8a8a8"></div>
<div style="left:1401px;top:55px;width:1px;height:21px;background:#fff"></div>
<div style="left:1252px;top:57px;width:1px;height:17px;background:#a8a8a8"></div>
<div style="left:1253px;top:57px;width:1px;height:17px;background:#fff"></div>
<div style="left:1426.5px;top:57px;width:1px;height:17px;background:#a8a8a8"></div>
<div style="left:1427.5px;top:57px;width:1px;height:17px;background:#fff"></div>
<svg style="left:1086px;top:55.5px" width="20" height="20" viewBox="0 0 20 20"><path d="M2 11l4 2 5-4 3-5 5-1v9l-4 1-3 5-5 0-5-3z" fill="#5a5ad8"/></svg>
<svg style="left:1109px;top:55.5px" width="20" height="20" viewBox="0 0 20 20"><ellipse cx="10" cy="6.5" rx="7.5" ry="5.5" fill="#3aa030"/><ellipse cx="8" cy="5" rx="3" ry="2" fill="#7ad050"/><path d="M10 11v6" stroke="#7a3a10" stroke-width="2"/><path d="M3 17.5h14" stroke="#111" stroke-width="1.2"/></svg>
<svg style="left:1132.6px;top:55.5px" width="20" height="20" viewBox="0 0 20 20"><ellipse cx="10" cy="10" rx="8" ry="5.5" fill="none" stroke="#222" stroke-width="1" stroke-dasharray="1.5 1.5"/></svg>
<svg style="left:1156px;top:55.5px" width="20" height="20" viewBox="0 0 20 20"><text x="3" y="16" font-size="17" font-style="italic" font-weight="bold" fill="#111" font-family="Liberation Serif,serif">α</text><circle cx="4" cy="3.5" r="1.6" fill="#d8d83a" stroke="#222" stroke-width="0.7"/></svg>
<svg style="left:1179px;top:55.5px" width="20" height="20" viewBox="0 0 20 20"><rect x="2" y="2.5" width="11" height="11" rx="2" fill="#fff" stroke="#e0202a" stroke-width="1.6"/><text x="7.5" y="12" font-size="10" font-weight="bold" fill="#e0202a" text-anchor="middle" font-family="Liberation Sans,sans-serif">M</text><path d="M12.5 13.5l5 5" stroke="#e0202a" stroke-width="1.3"/></svg>
<svg style="left:1203px;top:55.5px" width="20" height="20" viewBox="0 0 20 20"><path d="M6 2h8l4 4v8l-4 4H6l-4-4V6z" fill="#1a2ad8"/><g fill="#e8d83a"><circle cx="6" cy="8" r="1"/><circle cx="12" cy="6" r="1"/><circle cx="14" cy="12" r="1"/><circle cx="7" cy="14" r="1"/></g></svg>
<svg style="left:1227.6px;top:56.5px" width="18" height="18" viewBox="0 0 18 18"><rect x="1.5" y="1.5" width="15" height="15" fill="#e8e8e8" stroke="#111" stroke-width="1.3"/><path d="M4 4l10 10M14 4L4 14" stroke="#b0202a" stroke-width="1.3"/><path d="M3.5 3.5h4l-4 4zM14.5 3.5h-4l4 4zM3.5 14.5h4l-4-4zM14.5 14.5h-4l4-4z" fill="#b0202a"/></svg>
<svg style="left:1260px;top:55.5px" width="20" height="20" viewBox="0 0 20 20"><circle cx="5" cy="5" r="2.3" fill="#e8e03a" stroke="#555" stroke-width="0.5"/><circle cx="14" cy="5" r="1.3" fill="#b0202a"/><circle cx="10" cy="10" r="1.3" fill="#b0202a"/><circle cx="15" cy="11" r="1.8" fill="#3ac8c8"/><circle cx="5" cy="13" r="1.3" fill="#a0a020"/><circle cx="11" cy="16" r="1.3" fill="#888"/></svg>
<svg style="left:1284px;top:55.5px" width="20" height="20" viewBox="0 0 20 20"><ellipse cx="10" cy="10" rx="5" ry="7.5" fill="#b8b8b8" stroke="#e0202a" stroke-width="1.2" transform="rotate(-12 10 10)"/><circle cx="10" cy="10" r="1.3" fill="#e0202a"/></svg>
<svg style="left:1307.5px;top:55.5px" width="20" height="20" viewBox="0 0 20 20"><circle cx="10" cy="10" r="8" fill="#7a7a7a" stroke="#111" stroke-width="1.2"/><path d="M12.5 2.5a8 8 0 0 1 0 15a12 12 0 0 0 0-15z" fill="#f0e86a"/></svg>
<svg style="left:1330.5px;top:55.5px" width="20" height="20" viewBox="0 0 20 20"><path d="M3 17L17 3" stroke="#a01818" stroke-width="1.2"/><circle cx="6" cy="14" r="1.8" fill="#e0202a"/><circle cx="10" cy="10" r="1.8" fill="#e0202a"/><circle cx="14" cy="6" r="1.8" fill="#e0202a"/></svg>
<svg style="left:1354px;top:55.5px" width="20" height="20" viewBox="0 0 20 20"><path d="M3 12l9-7M4 14.5l9-7M6 16.5l9-7M8 18l8-6.5" stroke="#777" stroke-width="1"/><circle cx="14" cy="6" r="3.2" fill="#f0e85a" stroke="#888" stroke-width="0.5"/></svg>
<svg style="left:1377px;top:55.5px" width="20" height="20" viewBox="0 0 20 20"><text x="1.5" y="16.5" font-size="17" font-weight="bold" fill="#111" font-family="Liberation Serif,serif">U</text><circle cx="17" cy="5" r="1.2" fill="#e0202a"/></svg>
<svg style="left:1401px;top:55.5px" width="20" height="20" viewBox="0 0 20 20"><text x="1.5" y="16.5" font-size="17" font-weight="bold" fill="#111" font-family="Liberation Serif,serif">D</text><circle cx="17" cy="4" r="1.2" fill="#e0202a"/></svg>
<div style="left:1292px;width:300px;text-align:center;top:56px;font-size:15.5px;line-height:20px;color:#111;white-space:nowrap;">S</div>
<div style="left:1315.6px;width:300px;text-align:center;top:56px;font-size:15.5px;line-height:20px;color:#111;white-space:nowrap;">N</div>
<div style="left:1338.6px;width:300px;text-align:center;top:56px;font-size:15.5px;line-height:20px;color:#111;white-space:nowrap;">E</div>
<div style="left:1363px;width:300px;text-align:center;top:56px;font-size:15.5px;line-height:20px;color:#111;white-space:nowrap;">W</div>
<svg style="left:1528.7px;top:57.5px" width="16" height="16" viewBox="0 0 16 16"><rect x="1" y="1" width="14" height="14" fill="#f4f4f4" stroke="#111" stroke-width="1.2"/><path d="M8 2.5v11M2.5 8h11" stroke="#111" stroke-width="1"/><path d="M8 1.5l2 2.5H6zM8 14.5l2-2.5H6zM1.5 8l2.5-2v4zM14.5 8l-2.5-2v4z" fill="#111"/></svg>
<div style="left:1553.5px;top:58px;width:12.5px;height:15px;box-sizing:border-box;border:1px solid #555;border-right:none;background:linear-gradient(180deg,#f4f4f4 0 55%,#9a9a9a 55% 100%)"></div>
<div style="left:953px;width:300px;text-align:center;top:84px;font-size:10.5px;line-height:14px;color:#111;white-space:nowrap;font-weight:bold;letter-spacing:-0.5px">10'</div>
<div style="left:976.7px;width:300px;text-align:center;top:84px;font-size:10.5px;line-height:14px;color:#111;white-space:nowrap;font-weight:bold;letter-spacing:-0.5px">5'</div>
<div style="left:1000px;width:300px;text-align:center;top:84px;font-size:10.5px;line-height:14px;color:#111;white-space:nowrap;font-weight:bold;letter-spacing:-0.5px">1'</div>
<div style="left:1165.5px;top:82px;width:1px;height:18px;background:#a8a8a8"></div>
<div style="left:1166.5px;top:82px;width:1px;height:18px;background:#fff"></div>
<div style="left:1031.5px;width:300px;text-align:center;top:84px;font-size:10.8px;line-height:14px;color:#9a0a12;white-space:nowrap;font-weight:bold">M1</div>
<div style="left:1055px;width:300px;text-align:center;top:84px;font-size:10.8px;line-height:14px;color:#9a0a12;white-space:nowrap;font-weight:bold">M2</div>
<div style="left:1078.8px;width:300px;text-align:center;top:84px;font-size:10.8px;line-height:14px;color:#9a9a9a;white-space:nowrap;font-weight:bold">M3</div>
<div style="left:1244px;top:82px;width:1px;height:18px;background:#a8a8a8"></div>
<div style="left:1245px;top:82px;width:1px;height:18px;background:#fff"></div>
<div style="left:1250px;top:81px;width:48px;height:19.5px;background:#fff;box-sizing:border-box;border:1.5px solid #9a9a9a;border-right-color:#e4e4e4;border-bottom-color:#e4e4e4"></div>
<div style="left:1303px;top:82px;width:1px;height:18px;background:#a8a8a8"></div>
<div style="left:1304px;top:82px;width:1px;height:18px;background:#fff"></div>
<div style="left:1308px;top:79px;width:22px;height:23px;background:#f8f8f8;border:1px solid #fff;border-right-color:#bbb;border-bottom-color:#bbb;box-sizing:border-box"></div>
<svg style="left:1312px;top:84px" width="15" height="14" viewBox="0 0 15 14"><path d="M6.5 0.5v13H0.5z" fill="#8a8a8a" stroke="#222" stroke-width="0.6"/><path d="M8.5 0.5v13h6z" fill="#8a1a9a" stroke="#222" stroke-width="0.6"/></svg>
<svg style="left:1336.5px;top:83.5px" width="13" height="15" viewBox="0 0 13 15"><path d="M12.5 0.5v6H0.5z" fill="#8a8a8a" stroke="#222" stroke-width="0.6"/><path d="M12.5 14.5v-6H0.5z" fill="#8a1a9a" stroke="#222" stroke-width="0.6"/></svg>
<div style="left:1355.7px;top:81px;width:47.3px;height:19.5px;background:#fff;box-sizing:border-box;border:1.5px solid #9a9a9a;border-right-color:#e4e4e4;border-bottom-color:#e4e4e4"></div>
<svg style="left:1410px;top:86px" width="11" height="10" viewBox="0 0 11 10"><path d="M1 0.5l9 9M10 0.5l-9 9" stroke="#111" stroke-width="1.7"/></svg>
<div style="left:1430.5px;top:82px;width:1px;height:18px;background:#a8a8a8"></div>
<div style="left:1431.5px;top:82px;width:1px;height:18px;background:#fff"></div>
<div style="left:1297.7px;width:300px;text-align:center;top:81.5px;font-size:13.5px;line-height:18px;color:#8a0a9a;white-space:nowrap;font-weight:bold">t−</div>
<div style="left:1321.4px;width:300px;text-align:center;top:81.5px;font-size:13.5px;line-height:18px;color:#8a0a9a;white-space:nowrap;font-weight:bold">t+</div>
<div style="left:1345.4px;width:300px;text-align:center;top:81.5px;font-size:13.5px;line-height:18px;color:#8a0a9a;white-space:nowrap;font-weight:bold">t=</div>
<div style="left:1514.7px;top:81px;width:31.3px;height:19.5px;background:#fff;box-sizing:border-box;border:1.5px solid #9a9a9a;border-right-color:#e4e4e4;border-bottom-color:#e4e4e4"></div>
<div style="left:1517.7px;top:84px;font-size:11px;line-height:14px;color:#111;white-space:nowrap;">1</div>
<div style="left:1552px;top:81px;width:14px;height:19.5px;background:#fff;box-sizing:border-box;border:1.5px solid #9a9a9a;border-right:none;border-bottom-color:#e4e4e4;overflow:hidden;font-size:9.5px;line-height:17px;padding-left:2px;color:#111">Ho</div>
<svg style="left:1087.5px;top:104.3px" width="477.5" height="711.9" viewBox="1087.5 104.3 477.5 711.9"><rect x="1087.5" y="104.3" width="477.5" height="711.9" fill="#000"/><path d="M1096.4 196.4V726.6 M1186.5 196.4V726.6 M1276.5 196.4V726.6 M1366.2 196.4V726.6 M1455.6 196.4V726.6 M1546 196.4V726.6 M1087.5 226H1565 M1087.5 285.9H1565 M1087.5 346.7H1565 M1087.5 407.3H1565 M1087.5 467.9H1565 M1087.5 528.8H1565 M1087.5 589.3H1565 M1087.5 649.4H1565 M1087.5 710H1565" stroke="#5e5e5e" stroke-width="1" fill="none"/><path d="M1287 203h1v1h-1zM1148 426h1v1h-1zM1554 415h1v1h-1zM1250 708h1v1h-1zM1174 250h1v1h-1zM1426 633h1v1h-1zM1177 508h1v1h-1zM1160 319h1v1h-1zM1561 683h1v1h-1zM1118 528h1v1h-1zM1421 491h1v1h-1zM1344 472h1v1h-1zM1134 464h1v1h-1zM1101 372h1v1h-1zM1417 369h1v1h-1zM1514 372h1v1h-1zM1291 390h1v1h-1zM1105 591h1v1h-1zM1215 213h1v1h-1zM1375 297h1v1h-1zM1124 357h1v1h-1zM1290 205h1v1h-1zM1136 276h1v1h-1zM1132 476h1v1h-1zM1341 508h1v1h-1zM1257 628h1v1h-1zM1148 496h1v1h-1zM1235 312h1v1h-1zM1166 508h1v1h-1zM1531 535h1v1h-1zM1454 493h1v1h-1zM1416 547h1v1h-1zM1523 678h1v1h-1zM1233 496h1v1h-1zM1468 530h1v1h-1zM1184 528h1v1h-1zM1466 330h1v1h-1zM1150 519h1v1h-1zM1396 582h1v1h-1zM1550 568h1v1h-1zM1215 364h1v1h-1zM1198 525h1v1h-1zM1273 362h1v1h-1zM1253 405h1v1h-1zM1467 268h1v1h-1zM1330 457h1v1h-1zM1111 571h1v1h-1zM1089 376h1v1h-1zM1238 209h1v1h-1zM1408 462h1v1h-1zM1534 679h1v1h-1zM1268 503h1v1h-1zM1444 589h1v1h-1zM1182 373h1v1h-1zM1100 275h1v1h-1zM1210 568h1v1h-1zM1393 288h1v1h-1zM1543 577h1v1h-1zM1441 534h1v1h-1zM1464 508h1v1h-1zM1380 436h1v1h-1zM1564 679h1v1h-1zM1151 536h1v1h-1zM1483 355h1v1h-1zM1396 251h1v1h-1zM1402 532h1v1h-1zM1533 404h1v1h-1zM1378 238h1v1h-1zM1203 339h1v1h-1zM1095 508h1v1h-1zM1427 690h1v1h-1zM1400 626h1v1h-1zM1536 497h1v1h-1zM1214 368h1v1h-1zM1216 367h1v1h-1zM1418 377h1v1h-1zM1292 560h1v1h-1zM1100 384h1v1h-1zM1157 506h1v1h-1zM1184 657h1v1h-1zM1090 319h1v1h-1zM1425 706h1v1h-1zM1135 269h1v1h-1zM1399 382h1v1h-1zM1142 712h1v1h-1zM1452 594h1v1h-1zM1401 212h1v1h-1zM1562 582h1v1h-1zM1132 367h1v1h-1zM1184 564h1v1h-1zM1519 445h1v1h-1zM1528 574h1v1h-1zM1293 683h1v1h-1zM1219 204h1v1h-1zM1421 721h1v1h-1zM1505 246h1v1h-1zM1358 420h1v1h-1zM1116 302h1v1h-1zM1400 409h1v1h-1zM1244 438h1v1h-1zM1092 420h1v1h-1zM1134 407h1v1h-1zM1121 371h1v1h-1zM1342 246h1v1h-1zM1472 224h1v1h-1zM1499 244h1v1h-1zM1447 641h1v1h-1zM1129 597h1v1h-1zM1124 209h1v1h-1zM1187 263h1v1h-1zM1470 332h1v1h-1zM1493 331h1v1h-1zM1394 336h1v1h-1zM1226 374h1v1h-1zM1207 506h1v1h-1zM1335 212h1v1h-1zM1488 586h1v1h-1zM1533 237h1v1h-1zM1441 469h1v1h-1zM1422 354h1v1h-1zM1482 553h1v1h-1zM1384 697h1v1h-1zM1109 535h1v1h-1zM1379 485h1v1h-1zM1493 616h1v1h-1zM1118 540h1v1h-1zM1430 617h1v1h-1zM1431 713h1v1h-1zM1351 224h1v1h-1zM1209 336h1v1h-1zM1524 611h1v1h-1zM1181 674h1v1h-1zM1317 241h1v1h-1zM1148 548h1v1h-1zM1464 418h1v1h-1zM1115 509h1v1h-1zM1448 296h1v1h-1zM1442 251h1v1h-1zM1159 405h1v1h-1zM1539 714h1v1h-1zM1543 316h1v1h-1zM1496 206h1v1h-1zM1494 540h1v1h-1zM1271 639h1v1h-1zM1547 324h1v1h-1zM1554 601h1v1h-1zM1195 494h1v1h-1zM1480 711h1v1h-1zM1236 390h1v1h-1zM1521 300h1v1h-1zM1109 222h1v1h-1zM1293 464h1v1h-1zM1357 583h1v1h-1zM1155 198h1v1h-1zM1176 346h1v1h-1zM1276 469h1v1h-1zM1229 576h1v1h-1zM1093 435h1v1h-1zM1505 391h1v1h-1zM1355 613h1v1h-1zM1299 328h1v1h-1zM1245 362h1v1h-1zM1312 242h1v1h-1zM1198 328h1v1h-1zM1124 550h1v1h-1zM1438 555h1v1h-1zM1348 408h1v1h-1zM1500 307h1v1h-1zM1144 601h1v1h-1zM1118 317h1v1h-1zM1140 674h1v1h-1zM1109 549h1v1h-1zM1217 575h1v1h-1zM1142 391h1v1h-1zM1099 505h1v1h-1zM1178 443h1v1h-1zM1501 351h1v1h-1zM1490 499h1v1h-1zM1239 683h1v1h-1zM1546 653h1v1h-1zM1539 516h1v1h-1zM1211 712h1v1h-1zM1295 698h1v1h-1zM1110 646h1v1h-1zM1421 222h1v1h-1zM1131 535h1v1h-1zM1210 522h1v1h-1zM1474 619h1v1h-1zM1311 410h1v1h-1zM1415 360h1v1h-1zM1266 372h1v1h-1zM1125 349h1v1h-1zM1279 421h1v1h-1zM1511 356h1v1h-1zM1460 346h1v1h-1zM1484 596h1v1h-1zM1152 649h1v1h-1zM1540 483h1v1h-1zM1453 601h1v1h-1zM1119 456h1v1h-1zM1226 256h1v1h-1zM1245 216h1v1h-1zM1121 327h1v1h-1zM1527 234h1v1h-1zM1436 503h1v1h-1zM1546 459h1v1h-1zM1422 371h1v1h-1zM1484 590h1v1h-1zM1360 576h1v1h-1zM1557 453h1v1h-1zM1412 575h1v1h-1zM1263 717h1v1h-1zM1492 612h1v1h-1zM1458 329h1v1h-1zM1310 331h1v1h-1zM1126 608h1v1h-1zM1324 437h1v1h-1zM1328 442h1v1h-1zM1473 426h1v1h-1zM1221 219h1v1h-1zM1184 479h1v1h-1zM1360 568h1v1h-1zM1332 364h1v1h-1zM1328 719h1v1h-1zM1190 233h1v1h-1zM1323 632h1v1h-1zM1316 547h1v1h-1zM1521 715h1v1h-1zM1182 673h1v1h-1zM1121 579h1v1h-1zM1447 333h1v1h-1zM1379 225h1v1h-1zM1466 360h1v1h-1zM1463 336h1v1h-1zM1202 470h1v1h-1zM1129 328h1v1h-1zM1282 478h1v1h-1zM1276 435h1v1h-1zM1301 696h1v1h-1zM1142 597h1v1h-1zM1513 579h1v1h-1zM1467 212h1v1h-1zM1442 327h1v1h-1zM1246 664h1v1h-1zM1347 435h1v1h-1zM1134 290h1v1h-1zM1091 262h1v1h-1zM1421 412h1v1h-1zM1250 283h1v1h-1zM1117 602h1v1h-1zM1311 539h1v1h-1zM1435 665h1v1h-1zM1403 568h1v1h-1zM1158 438h1v1h-1zM1397 414h1v1h-1zM1290 540h1v1h-1zM1109 422h1v1h-1zM1222 344h1v1h-1zM1486 352h1v1h-1zM1279 490h1v1h-1zM1389 711h1v1h-1zM1510 668h1v1h-1zM1118 488h1v1h-1zM1426 371h1v1h-1zM1529 330h1v1h-1zM1109 366h1v1h-1zM1186 373h1v1h-1zM1484 568h1v1h-1zM1118 721h1v1h-1zM1489 704h1v1h-1zM1400 663h1v1h-1zM1372 504h1v1h-1zM1207 305h1v1h-1zM1423 443h1v1h-1zM1256 540h1v1h-1zM1251 621h1v1h-1zM1547 316h1v1h-1zM1344 339h1v1h-1zM1455 574h1v1h-1zM1456 576h1v1h-1zM1470 288h1v1h-1zM1358 448h1v1h-1zM1359 384h1v1h-1zM1395 321h1v1h-1zM1554 641h1v1h-1zM1315 293h1v1h-1zM1218 363h1v1h-1zM1214 669h1v1h-1zM1140 363h1v1h-1zM1225 270h1v1h-1zM1155 503h1v1h-1zM1492 344h1v1h-1zM1276 680h1v1h-1zM1548 337h1v1h-1zM1334 273h1v1h-1zM1431 505h1v1h-1zM1162 564h1v1h-1zM1312 375h1v1h-1zM1216 708h1v1h-1zM1516 445h1v1h-1zM1415 338h1v1h-1zM1105 522h1v1h-1zM1474 489h1v1h-1zM1237 318h1v1h-1zM1231 304h1v1h-1zM1137 512h1v1h-1zM1332 443h1v1h-1zM1428 229h1v1h-1zM1419 235h1v1h-1zM1494 580h1v1h-1zM1396 721h1v1h-1zM1398 580h1v1h-1zM1328 237h1v1h-1zM1422 570h1v1h-1zM1276 596h1v1h-1zM1239 287h1v1h-1zM1293 699h1v1h-1zM1351 569h1v1h-1zM1114 614h1v1h-1zM1187 680h1v1h-1zM1291 621h1v1h-1zM1345 634h1v1h-1zM1422 692h1v1h-1zM1526 489h1v1h-1zM1191 315h1v1h-1zM1090 635h1v1h-1zM1389 642h1v1h-1zM1419 358h1v1h-1zM1146 414h1v1h-1zM1343 634h1v1h-1zM1445 205h1v1h-1zM1498 583h1v1h-1zM1519 264h1v1h-1zM1222 425h1v1h-1zM1443 694h1v1h-1zM1477 228h1v1h-1zM1558 201h1v1h-1zM1161 402h1v1h-1zM1416 461h1v1h-1zM1252 663h1v1h-1zM1165 311h1v1h-1zM1107 523h1v1h-1zM1336 646h1v1h-1zM1501 557h1v1h-1zM1242 207h1v1h-1zM1530 671h1v1h-1zM1477 360h1v1h-1zM1442 565h1v1h-1zM1318 498h1v1h-1zM1410 435h1v1h-1zM1536 695h1v1h-1zM1528 651h1v1h-1zM1210 390h1v1h-1zM1440 525h1v1h-1zM1488 620h1v1h-1zM1443 664h1v1h-1zM1485 622h1v1h-1zM1373 213h1v1h-1zM1511 674h1v1h-1zM1553 534h1v1h-1zM1465 359h1v1h-1zM1168 576h1v1h-1zM1368 672h1v1h-1zM1447 703h1v1h-1zM1195 611h1v1h-1zM1454 693h1v1h-1zM1300 463h1v1h-1zM1108 211h1v1h-1zM1098 283h1v1h-1zM1155 346h1v1h-1zM1399 315h1v1h-1zM1348 389h1v1h-1zM1167 454h1v1h-1zM1394 322h1v1h-1zM1429 279h1v1h-1zM1219 365h1v1h-1zM1114 405h1v1h-1zM1095 345h1v1h-1zM1407 497h1v1h-1zM1484 360h1v1h-1zM1544 655h1v1h-1zM1163 359h1v1h-1zM1283 567h1v1h-1zM1367 702h1v1h-1zM1304 339h1v1h-1zM1351 220h1v1h-1zM1512 678h1v1h-1zM1493 286h1v1h-1zM1419 315h1v1h-1zM1477 338h1v1h-1zM1194 564h1v1h-1zM1372 333h1v1h-1zM1255 550h1v1h-1zM1415 578h1v1h-1zM1474 269h1v1h-1zM1523 250h1v1h-1zM1233 690h1v1h-1zM1090 296h1v1h-1zM1542 381h1v1h-1zM1552 673h1v1h-1zM1533 610h1v1h-1zM1169 268h1v1h-1zM1168 523h1v1h-1zM1459 624h1v1h-1zM1545 574h1v1h-1zM1291 329h1v1h-1zM1383 297h1v1h-1zM1451 469h1v1h-1zM1146 210h1v1h-1zM1405 303h1v1h-1zM1096 452h1v1h-1zM1103 415h1v1h-1zM1153 648h1v1h-1zM1471 349h1v1h-1zM1301 404h1v1h-1zM1311 516h1v1h-1zM1493 589h1v1h-1zM1409 519h1v1h-1zM1290 620h1v1h-1zM1343 261h1v1h-1zM1206 541h1v1h-1zM1199 589h1v1h-1zM1116 474h1v1h-1zM1252 377h1v1h-1zM1427 536h1v1h-1zM1482 687h1v1h-1zM1265 373h1v1h-1zM1349 575h1v1h-1zM1498 680h1v1h-1zM1246 697h1v1h-1zM1422 289h1v1h-1zM1501 242h1v1h-1zM1262 592h1v1h-1zM1220 257h1v1h-1zM1382 612h1v1h-1zM1112 667h1v1h-1zM1277 410h1v1h-1zM1364 551h1v1h-1zM1527 659h1v1h-1zM1103 256h1v1h-1zM1392 270h1v1h-1zM1369 501h1v1h-1zM1341 628h1v1h-1zM1396 680h1v1h-1zM1509 531h1v1h-1zM1470 618h1v1h-1zM1551 497h1v1h-1zM1296 486h1v1h-1zM1156 572h1v1h-1zM1388 281h1v1h-1zM1428 397h1v1h-1zM1436 709h1v1h-1zM1169 422h1v1h-1zM1444 718h1v1h-1zM1307 501h1v1h-1zM1519 198h1v1h-1zM1379 267h1v1h-1zM1422 370h1v1h-1zM1308 378h1v1h-1zM1394 309h1v1h-1zM1351 216h1v1h-1zM1563 241h1v1h-1zM1168 354h1v1h-1zM1309 682h1v1h-1zM1417 496h1v1h-1zM1415 355h1v1h-1zM1091 239h1v1h-1zM1201 605h1v1h-1zM1359 609h1v1h-1zM1512 539h1v1h-1zM1131 577h1v1h-1zM1441 444h1v1h-1zM1306 707h1v1h-1zM1389 346h1v1h-1zM1496 630h1v1h-1zM1249 590h1v1h-1zM1538 335h1v1h-1zM1540 326h1v1h-1zM1240 341h1v1h-1zM1544 310h1v1h-1zM1400 291h1v1h-1zM1435 471h1v1h-1zM1559 383h1v1h-1zM1224 640h1v1h-1zM1443 351h1v1h-1zM1560 653h1v1h-1zM1311 230h1v1h-1zM1245 365h1v1h-1zM1350 488h1v1h-1zM1156 200h1v1h-1zM1279 673h1v1h-1zM1444 500h1v1h-1zM1135 407h1v1h-1zM1091 606h1v1h-1zM1304 259h1v1h-1zM1321 680h1v1h-1zM1220 328h1v1h-1zM1543 308h1v1h-1zM1320 524h1v1h-1zM1485 527h1v1h-1zM1202 287h1v1h-1zM1303 236h1v1h-1zM1360 271h1v1h-1zM1242 693h1v1h-1zM1446 374h1v1h-1zM1525 651h1v1h-1zM1262 298h1v1h-1zM1148 353h1v1h-1zM1245 436h1v1h-1zM1336 205h1v1h-1zM1196 291h1v1h-1zM1233 377h1v1h-1zM1095 425h1v1h-1zM1108 628h1v1h-1zM1466 711h1v1h-1zM1396 613h1v1h-1zM1101 635h1v1h-1zM1385 208h1v1h-1zM1484 548h1v1h-1zM1268 432h1v1h-1zM1172 238h1v1h-1zM1455 249h1v1h-1zM1274 658h1v1h-1zM1371 273h1v1h-1zM1366 447h1v1h-1zM1347 312h1v1h-1zM1318 517h1v1h-1zM1116 666h1v1h-1zM1158 398h1v1h-1zM1538 238h1v1h-1zM1119 433h1v1h-1zM1141 712h1v1h-1zM1406 373h1v1h-1zM1363 443h1v1h-1zM1211 547h1v1h-1zM1435 300h1v1h-1zM1479 565h1v1h-1zM1150 236h1v1h-1zM1328 521h1v1h-1zM1137 693h1v1h-1zM1515 288h1v1h-1zM1355 579h1v1h-1zM1148 559h1v1h-1zM1267 310h1v1h-1zM1159 470h1v1h-1zM1232 592h1v1h-1zM1139 226h1v1h-1zM1440 688h1v1h-1zM1371 228h1v1h-1zM1442 307h1v1h-1zM1355 414h1v1h-1zM1090 592h1v1h-1zM1118 231h1v1h-1zM1106 532h1v1h-1zM1483 205h1v1h-1zM1320 492h1v1h-1zM1350 303h1v1h-1zM1329 564h1v1h-1zM1252 461h1v1h-1zM1487 268h1v1h-1zM1164 290h1v1h-1zM1380 703h1v1h-1zM1178 288h1v1h-1zM1462 360h1v1h-1zM1533 675h1v1h-1zM1376 234h1v1h-1zM1385 724h1v1h-1zM1485 369h1v1h-1zM1524 203h1v1h-1zM1312 318h1v1h-1zM1193 424h1v1h-1zM1361 724h1v1h-1zM1211 581h1v1h-1zM1349 657h1v1h-1zM1256 720h1v1h-1zM1492 379h1v1h-1zM1161 609h1v1h-1zM1178 203h1v1h-1zM1550 278h1v1h-1zM1504 370h1v1h-1zM1142 690h1v1h-1zM1447 618h1v1h-1zM1089 379h1v1h-1zM1094 537h1v1h-1zM1511 468h1v1h-1zM1103 431h1v1h-1zM1197 221h1v1h-1zM1122 590h1v1h-1zM1512 258h1v1h-1zM1304 387h1v1h-1zM1530 705h1v1h-1zM1353 249h1v1h-1zM1496 524h1v1h-1zM1394 554h1v1h-1zM1297 332h1v1h-1zM1160 486h1v1h-1zM1181 628h1v1h-1zM1496 202h1v1h-1zM1410 335h1v1h-1zM1090 708h1v1h-1z" fill="#98982a"/><path d="M1481 355h1v1h-1zM1356 290h1v1h-1zM1328 276h1v1h-1zM1554 590h1v1h-1zM1286 665h1v1h-1zM1472 320h1v1h-1zM1335 703h1v1h-1zM1345 281h1v1h-1zM1464 605h1v1h-1zM1243 520h1v1h-1zM1127 285h1v1h-1zM1090 200h1v1h-1zM1282 615h1v1h-1zM1276 292h1v1h-1zM1121 441h1v1h-1zM1227 482h1v1h-1zM1334 501h1v1h-1zM1415 410h1v1h-1zM1253 683h1v1h-1zM1277 294h1v1h-1zM1461 219h1v1h-1zM1143 469h1v1h-1zM1187 498h1v1h-1zM1350 544h1v1h-1zM1460 284h1v1h-1zM1401 207h1v1h-1zM1115 256h1v1h-1zM1134 461h1v1h-1zM1203 722h1v1h-1zM1164 584h1v1h-1zM1147 338h1v1h-1zM1356 541h1v1h-1zM1263 409h1v1h-1zM1170 582h1v1h-1zM1334 578h1v1h-1zM1102 408h1v1h-1zM1355 207h1v1h-1zM1234 349h1v1h-1zM1474 499h1v1h-1zM1524 282h1v1h-1zM1285 405h1v1h-1zM1446 280h1v1h-1zM1387 365h1v1h-1zM1154 602h1v1h-1zM1303 204h1v1h-1zM1482 512h1v1h-1zM1415 596h1v1h-1zM1368 542h1v1h-1zM1146 429h1v1h-1zM1156 302h1v1h-1zM1466 321h1v1h-1zM1100 701h1v1h-1zM1099 623h1v1h-1zM1122 284h1v1h-1zM1516 270h1v1h-1zM1335 392h1v1h-1zM1470 295h1v1h-1zM1302 262h1v1h-1zM1291 345h1v1h-1zM1214 395h1v1h-1zM1319 253h1v1h-1zM1125 697h1v1h-1zM1482 252h1v1h-1zM1489 205h1v1h-1zM1299 235h1v1h-1zM1337 647h1v1h-1zM1095 379h1v1h-1zM1185 253h1v1h-1zM1100 262h1v1h-1zM1289 373h1v1h-1zM1520 391h1v1h-1zM1335 427h1v1h-1zM1102 366h1v1h-1zM1126 611h1v1h-1zM1461 381h1v1h-1zM1137 650h1v1h-1zM1204 384h1v1h-1zM1413 429h1v1h-1zM1387 301h1v1h-1zM1240 378h1v1h-1zM1366 320h1v1h-1zM1310 270h1v1h-1zM1147 573h1v1h-1zM1272 423h1v1h-1zM1558 343h1v1h-1zM1215 455h1v1h-1zM1262 572h1v1h-1zM1302 215h1v1h-1zM1370 621h1v1h-1zM1154 420h1v1h-1zM1167 670h1v1h-1zM1529 582h1v1h-1zM1285 704h1v1h-1zM1237 334h1v1h-1zM1093 573h1v1h-1zM1464 243h1v1h-1zM1410 651h1v1h-1zM1330 564h1v1h-1zM1404 639h1v1h-1zM1235 302h1v1h-1zM1431 596h1v1h-1zM1223 252h1v1h-1zM1419 200h1v1h-1zM1349 616h1v1h-1zM1502 723h1v1h-1zM1202 340h1v1h-1zM1490 347h1v1h-1zM1089 560h1v1h-1zM1270 676h1v1h-1zM1525 421h1v1h-1zM1433 682h1v1h-1zM1220 341h1v1h-1zM1130 334h1v1h-1zM1370 287h1v1h-1zM1532 613h1v1h-1zM1409 657h1v1h-1zM1230 357h1v1h-1zM1529 679h1v1h-1zM1252 661h1v1h-1zM1151 360h1v1h-1zM1348 671h1v1h-1zM1092 416h1v1h-1zM1237 422h1v1h-1zM1406 248h1v1h-1zM1462 462h1v1h-1zM1551 273h1v1h-1zM1536 542h1v1h-1zM1351 274h1v1h-1zM1557 210h1v1h-1zM1235 461h1v1h-1zM1483 277h1v1h-1zM1370 520h1v1h-1zM1371 298h1v1h-1zM1481 309h1v1h-1zM1541 624h1v1h-1zM1324 207h1v1h-1zM1428 223h1v1h-1zM1499 629h1v1h-1zM1154 532h1v1h-1zM1261 241h1v1h-1zM1355 416h1v1h-1zM1140 426h1v1h-1zM1151 588h1v1h-1zM1529 699h1v1h-1zM1302 485h1v1h-1zM1546 420h1v1h-1zM1529 420h1v1h-1zM1229 387h1v1h-1zM1520 723h1v1h-1zM1138 373h1v1h-1zM1472 396h1v1h-1zM1184 473h1v1h-1zM1129 389h1v1h-1zM1540 295h1v1h-1zM1155 200h1v1h-1zM1190 223h1v1h-1zM1159 521h1v1h-1zM1185 254h1v1h-1zM1339 668h1v1h-1zM1503 415h1v1h-1zM1337 308h1v1h-1zM1531 601h1v1h-1zM1219 704h1v1h-1zM1455 509h1v1h-1zM1124 384h1v1h-1zM1491 677h1v1h-1zM1308 452h1v1h-1zM1142 321h1v1h-1zM1145 565h1v1h-1zM1497 614h1v1h-1zM1126 578h1v1h-1zM1563 357h1v1h-1zM1119 268h1v1h-1zM1118 483h1v1h-1zM1427 293h1v1h-1zM1518 339h1v1h-1zM1284 373h1v1h-1zM1411 490h1v1h-1zM1546 708h1v1h-1zM1463 472h1v1h-1zM1488 518h1v1h-1zM1436 301h1v1h-1zM1201 484h1v1h-1zM1451 223h1v1h-1zM1520 539h1v1h-1zM1290 655h1v1h-1zM1224 454h1v1h-1zM1137 563h1v1h-1zM1366 546h1v1h-1zM1356 231h1v1h-1zM1420 237h1v1h-1zM1214 581h1v1h-1zM1103 255h1v1h-1zM1401 546h1v1h-1zM1490 372h1v1h-1zM1338 664h1v1h-1zM1416 367h1v1h-1zM1138 429h1v1h-1zM1126 556h1v1h-1zM1183 490h1v1h-1zM1490 540h1v1h-1zM1136 646h1v1h-1zM1492 501h1v1h-1zM1336 560h1v1h-1zM1559 476h1v1h-1zM1168 304h1v1h-1zM1297 590h1v1h-1zM1545 596h1v1h-1zM1172 443h1v1h-1zM1145 641h1v1h-1zM1106 464h1v1h-1zM1200 404h1v1h-1zM1145 346h1v1h-1zM1444 284h1v1h-1zM1242 373h1v1h-1zM1519 525h1v1h-1zM1541 565h1v1h-1zM1330 220h1v1h-1zM1360 325h1v1h-1zM1288 503h1v1h-1zM1192 314h1v1h-1zM1190 262h1v1h-1zM1160 566h1v1h-1zM1168 356h1v1h-1zM1097 524h1v1h-1zM1510 506h1v1h-1zM1200 591h1v1h-1zM1111 711h1v1h-1zM1220 228h1v1h-1zM1092 503h1v1h-1zM1500 405h1v1h-1zM1311 412h1v1h-1zM1371 530h1v1h-1zM1359 226h1v1h-1zM1446 214h1v1h-1zM1502 548h1v1h-1zM1401 663h1v1h-1zM1415 589h1v1h-1zM1232 318h1v1h-1zM1390 595h1v1h-1zM1148 352h1v1h-1zM1219 534h1v1h-1zM1428 281h1v1h-1zM1121 415h1v1h-1zM1413 349h1v1h-1zM1195 482h1v1h-1zM1402 492h1v1h-1zM1503 249h1v1h-1zM1512 385h1v1h-1zM1511 230h1v1h-1zM1368 431h1v1h-1zM1331 398h1v1h-1zM1372 234h1v1h-1zM1430 697h1v1h-1zM1528 554h1v1h-1zM1433 674h1v1h-1zM1172 216h1v1h-1zM1518 227h1v1h-1zM1531 531h1v1h-1zM1344 642h1v1h-1zM1191 269h1v1h-1zM1503 479h1v1h-1zM1355 312h1v1h-1zM1245 686h1v1h-1zM1560 570h1v1h-1zM1093 420h1v1h-1zM1210 574h1v1h-1zM1326 603h1v1h-1zM1560 548h1v1h-1zM1387 626h1v1h-1zM1301 667h1v1h-1zM1166 559h1v1h-1zM1514 374h1v1h-1zM1170 484h1v1h-1zM1287 284h1v1h-1zM1114 381h1v1h-1zM1329 238h1v1h-1zM1288 687h1v1h-1zM1214 640h1v1h-1zM1165 405h1v1h-1zM1103 451h1v1h-1zM1089 337h1v1h-1zM1496 620h1v1h-1zM1527 274h1v1h-1zM1562 620h1v1h-1zM1518 637h1v1h-1zM1423 230h1v1h-1zM1327 391h1v1h-1zM1100 655h1v1h-1zM1225 361h1v1h-1zM1519 596h1v1h-1zM1181 608h1v1h-1zM1501 721h1v1h-1zM1482 613h1v1h-1zM1318 701h1v1h-1zM1273 341h1v1h-1zM1093 292h1v1h-1zM1489 597h1v1h-1zM1119 664h1v1h-1zM1554 364h1v1h-1zM1265 522h1v1h-1zM1105 325h1v1h-1zM1370 522h1v1h-1zM1180 563h1v1h-1zM1411 464h1v1h-1zM1353 330h1v1h-1zM1377 448h1v1h-1zM1313 378h1v1h-1zM1497 528h1v1h-1zM1523 454h1v1h-1zM1326 644h1v1h-1zM1535 293h1v1h-1zM1393 591h1v1h-1zM1478 252h1v1h-1zM1452 592h1v1h-1zM1490 638h1v1h-1zM1341 248h1v1h-1zM1520 310h1v1h-1zM1204 236h1v1h-1zM1435 703h1v1h-1zM1310 689h1v1h-1zM1564 576h1v1h-1zM1219 500h1v1h-1zM1169 499h1v1h-1zM1127 646h1v1h-1zM1450 294h1v1h-1zM1491 379h1v1h-1zM1260 541h1v1h-1zM1304 412h1v1h-1zM1441 203h1v1h-1zM1443 273h1v1h-1zM1548 274h1v1h-1zM1113 207h1v1h-1zM1380 338h1v1h-1zM1459 402h1v1h-1zM1462 346h1v1h-1zM1296 524h1v1h-1zM1277 349h1v1h-1zM1527 522h1v1h-1zM1287 406h1v1h-1zM1219 423h1v1h-1zM1366 237h1v1h-1zM1420 243h1v1h-1zM1390 218h1v1h-1zM1114 415h1v1h-1zM1536 397h1v1h-1zM1090 477h1v1h-1zM1471 608h1v1h-1zM1524 386h1v1h-1zM1154 383h1v1h-1zM1218 358h1v1h-1zM1366 397h1v1h-1zM1482 576h1v1h-1zM1262 372h1v1h-1zM1436 503h1v1h-1zM1486 332h1v1h-1zM1516 445h1v1h-1zM1197 645h1v1h-1zM1271 607h1v1h-1zM1243 248h1v1h-1zM1182 457h1v1h-1zM1323 455h1v1h-1zM1395 580h1v1h-1zM1210 652h1v1h-1zM1331 659h1v1h-1zM1348 489h1v1h-1zM1310 284h1v1h-1zM1293 499h1v1h-1zM1297 509h1v1h-1zM1179 632h1v1h-1zM1342 219h1v1h-1zM1198 719h1v1h-1zM1422 289h1v1h-1zM1245 637h1v1h-1zM1295 652h1v1h-1zM1339 675h1v1h-1zM1473 417h1v1h-1zM1476 251h1v1h-1zM1253 623h1v1h-1zM1452 610h1v1h-1zM1254 199h1v1h-1zM1276 285h1v1h-1zM1422 409h1v1h-1zM1364 225h1v1h-1zM1412 676h1v1h-1zM1248 587h1v1h-1zM1239 271h1v1h-1zM1135 693h1v1h-1zM1149 463h1v1h-1zM1354 219h1v1h-1zM1122 684h1v1h-1zM1447 497h1v1h-1zM1393 426h1v1h-1zM1424 530h1v1h-1zM1222 590h1v1h-1zM1560 345h1v1h-1zM1351 455h1v1h-1zM1530 458h1v1h-1zM1310 388h1v1h-1zM1114 688h1v1h-1zM1251 454h1v1h-1zM1195 565h1v1h-1zM1551 297h1v1h-1zM1399 235h1v1h-1zM1175 679h1v1h-1zM1269 439h1v1h-1zM1121 352h1v1h-1zM1259 279h1v1h-1zM1307 326h1v1h-1zM1369 328h1v1h-1zM1492 254h1v1h-1zM1485 567h1v1h-1zM1483 453h1v1h-1zM1282 604h1v1h-1zM1262 609h1v1h-1zM1291 609h1v1h-1zM1192 706h1v1h-1zM1109 474h1v1h-1zM1295 302h1v1h-1zM1285 207h1v1h-1zM1332 492h1v1h-1zM1530 522h1v1h-1zM1137 510h1v1h-1zM1091 274h1v1h-1zM1456 356h1v1h-1zM1440 347h1v1h-1zM1443 462h1v1h-1zM1268 710h1v1h-1zM1542 492h1v1h-1zM1269 220h1v1h-1zM1252 405h1v1h-1zM1268 303h1v1h-1zM1428 657h1v1h-1zM1392 681h1v1h-1zM1235 204h1v1h-1zM1352 424h1v1h-1zM1527 281h1v1h-1zM1207 598h1v1h-1zM1464 705h1v1h-1zM1386 698h1v1h-1zM1236 576h1v1h-1zM1485 649h1v1h-1zM1259 420h1v1h-1zM1560 280h1v1h-1zM1118 403h1v1h-1zM1397 722h1v1h-1zM1457 568h1v1h-1zM1497 314h1v1h-1zM1321 702h1v1h-1zM1239 463h1v1h-1zM1127 365h1v1h-1zM1214 323h1v1h-1zM1275 454h1v1h-1zM1539 472h1v1h-1zM1533 375h1v1h-1zM1298 620h1v1h-1zM1089 475h1v1h-1zM1425 547h1v1h-1zM1120 310h1v1h-1zM1363 503h1v1h-1zM1324 434h1v1h-1zM1341 362h1v1h-1zM1374 563h1v1h-1zM1217 648h1v1h-1zM1122 270h1v1h-1zM1383 390h1v1h-1zM1316 669h1v1h-1zM1368 661h1v1h-1zM1421 476h1v1h-1zM1508 249h1v1h-1zM1311 296h1v1h-1zM1202 544h1v1h-1zM1142 579h1v1h-1zM1337 629h1v1h-1zM1273 669h1v1h-1zM1403 702h1v1h-1zM1208 205h1v1h-1zM1507 382h1v1h-1zM1453 589h1v1h-1zM1414 684h1v1h-1zM1156 617h1v1h-1zM1156 567h1v1h-1zM1194 538h1v1h-1zM1526 707h1v1h-1zM1505 219h1v1h-1zM1296 461h1v1h-1zM1260 482h1v1h-1zM1293 238h1v1h-1zM1113 209h1v1h-1zM1159 557h1v1h-1zM1350 313h1v1h-1zM1272 300h1v1h-1zM1160 656h1v1h-1zM1113 505h1v1h-1zM1227 640h1v1h-1zM1512 504h1v1h-1zM1106 403h1v1h-1zM1337 710h1v1h-1zM1557 391h1v1h-1zM1245 469h1v1h-1zM1375 532h1v1h-1zM1403 300h1v1h-1zM1335 712h1v1h-1zM1190 569h1v1h-1zM1528 488h1v1h-1zM1104 616h1v1h-1zM1399 514h1v1h-1zM1283 600h1v1h-1zM1509 595h1v1h-1zM1535 315h1v1h-1zM1183 298h1v1h-1zM1209 383h1v1h-1zM1300 562h1v1h-1zM1350 552h1v1h-1zM1340 205h1v1h-1zM1418 328h1v1h-1zM1396 449h1v1h-1zM1318 651h1v1h-1zM1444 245h1v1h-1zM1267 239h1v1h-1zM1554 635h1v1h-1zM1474 394h1v1h-1zM1482 674h1v1h-1zM1347 580h1v1h-1zM1364 443h1v1h-1zM1360 219h1v1h-1zM1396 682h1v1h-1zM1450 572h1v1h-1zM1276 483h1v1h-1zM1151 363h1v1h-1zM1179 518h1v1h-1zM1152 370h1v1h-1zM1114 586h1v1h-1zM1435 512h1v1h-1zM1264 221h1v1h-1zM1312 294h1v1h-1zM1378 438h1v1h-1zM1230 705h1v1h-1zM1103 249h1v1h-1zM1230 319h1v1h-1zM1109 416h1v1h-1zM1420 432h1v1h-1zM1096 316h1v1h-1zM1210 466h1v1h-1zM1471 343h1v1h-1zM1409 545h1v1h-1zM1323 681h1v1h-1zM1327 422h1v1h-1zM1396 527h1v1h-1zM1097 560h1v1h-1zM1542 490h1v1h-1zM1119 272h1v1h-1zM1132 355h1v1h-1zM1152 713h1v1h-1zM1107 209h1v1h-1zM1534 348h1v1h-1zM1253 716h1v1h-1zM1162 287h1v1h-1zM1175 707h1v1h-1zM1152 655h1v1h-1zM1425 530h1v1h-1zM1554 469h1v1h-1zM1346 415h1v1h-1zM1257 673h1v1h-1zM1331 498h1v1h-1zM1428 418h1v1h-1zM1096 576h1v1h-1zM1517 529h1v1h-1zM1141 313h1v1h-1zM1189 295h1v1h-1zM1096 260h1v1h-1zM1322 508h1v1h-1zM1445 517h1v1h-1zM1348 715h1v1h-1zM1497 403h1v1h-1zM1501 690h1v1h-1zM1385 254h1v1h-1zM1400 354h1v1h-1zM1199 613h1v1h-1zM1450 401h1v1h-1zM1464 365h1v1h-1zM1173 392h1v1h-1zM1522 389h1v1h-1zM1467 407h1v1h-1zM1282 353h1v1h-1zM1131 391h1v1h-1zM1101 518h1v1h-1zM1202 620h1v1h-1zM1329 422h1v1h-1zM1175 589h1v1h-1zM1304 216h1v1h-1zM1536 444h1v1h-1zM1348 208h1v1h-1zM1315 409h1v1h-1zM1127 470h1v1h-1zM1258 213h1v1h-1zM1395 560h1v1h-1zM1108 481h1v1h-1zM1545 238h1v1h-1zM1418 619h1v1h-1z" fill="#b0b030"/><path d="M1264 300h1v1h-1zM1352 385h1v1h-1zM1430 298h1v1h-1zM1090 694h1v1h-1zM1363 586h1v1h-1zM1504 312h1v1h-1zM1108 285h1v1h-1zM1242 224h1v1h-1zM1263 556h1v1h-1zM1289 700h1v1h-1zM1548 320h1v1h-1zM1324 295h1v1h-1zM1543 418h1v1h-1zM1412 471h1v1h-1zM1181 525h1v1h-1zM1418 552h1v1h-1zM1388 234h1v1h-1zM1302 337h1v1h-1zM1410 528h1v1h-1zM1255 673h1v1h-1zM1179 241h1v1h-1zM1465 378h1v1h-1zM1259 713h1v1h-1zM1284 474h1v1h-1zM1286 211h1v1h-1zM1312 222h1v1h-1zM1541 249h1v1h-1zM1117 314h1v1h-1zM1560 685h1v1h-1zM1492 206h1v1h-1zM1201 715h1v1h-1zM1500 680h1v1h-1zM1414 420h1v1h-1zM1550 401h1v1h-1zM1100 693h1v1h-1zM1191 494h1v1h-1zM1356 614h1v1h-1zM1188 405h1v1h-1zM1559 463h1v1h-1zM1289 569h1v1h-1zM1133 403h1v1h-1zM1095 282h1v1h-1zM1107 327h1v1h-1zM1266 562h1v1h-1zM1448 320h1v1h-1zM1507 366h1v1h-1zM1460 264h1v1h-1zM1381 698h1v1h-1zM1394 322h1v1h-1zM1216 647h1v1h-1zM1548 624h1v1h-1zM1408 470h1v1h-1zM1257 690h1v1h-1zM1313 489h1v1h-1zM1414 491h1v1h-1zM1279 305h1v1h-1zM1403 507h1v1h-1zM1211 268h1v1h-1zM1471 552h1v1h-1zM1236 352h1v1h-1zM1314 508h1v1h-1zM1466 626h1v1h-1zM1095 697h1v1h-1zM1378 316h1v1h-1zM1271 280h1v1h-1zM1284 274h1v1h-1zM1545 450h1v1h-1zM1280 368h1v1h-1zM1270 672h1v1h-1zM1274 342h1v1h-1zM1094 603h1v1h-1zM1151 220h1v1h-1zM1284 638h1v1h-1zM1321 583h1v1h-1zM1548 618h1v1h-1zM1307 703h1v1h-1zM1240 629h1v1h-1zM1450 708h1v1h-1zM1101 555h1v1h-1zM1475 617h1v1h-1zM1493 586h1v1h-1zM1334 698h1v1h-1zM1245 427h1v1h-1zM1300 260h1v1h-1zM1250 609h1v1h-1zM1474 663h1v1h-1zM1204 231h1v1h-1zM1412 668h1v1h-1zM1243 636h1v1h-1zM1510 655h1v1h-1zM1540 711h1v1h-1zM1557 583h1v1h-1zM1346 536h1v1h-1zM1140 333h1v1h-1zM1152 295h1v1h-1zM1259 725h1v1h-1zM1354 689h1v1h-1zM1495 583h1v1h-1zM1496 577h1v1h-1zM1267 637h1v1h-1zM1094 259h1v1h-1zM1267 428h1v1h-1zM1337 208h1v1h-1zM1523 614h1v1h-1zM1430 518h1v1h-1zM1415 405h1v1h-1zM1113 248h1v1h-1zM1206 538h1v1h-1zM1309 336h1v1h-1zM1300 362h1v1h-1zM1287 715h1v1h-1zM1153 625h1v1h-1zM1463 208h1v1h-1zM1164 646h1v1h-1zM1299 532h1v1h-1zM1319 282h1v1h-1zM1149 430h1v1h-1zM1474 266h1v1h-1zM1373 368h1v1h-1zM1308 644h1v1h-1zM1281 402h1v1h-1zM1296 417h1v1h-1zM1487 306h1v1h-1zM1389 547h1v1h-1zM1524 280h1v1h-1zM1354 671h1v1h-1zM1114 631h1v1h-1zM1332 490h1v1h-1zM1346 290h1v1h-1zM1543 308h1v1h-1zM1298 552h1v1h-1zM1367 431h1v1h-1zM1414 411h1v1h-1zM1106 656h1v1h-1zM1448 694h1v1h-1zM1238 630h1v1h-1zM1502 353h1v1h-1zM1332 495h1v1h-1zM1323 385h1v1h-1zM1166 651h1v1h-1zM1154 394h1v1h-1zM1394 415h1v1h-1zM1377 585h1v1h-1zM1233 309h1v1h-1zM1287 487h1v1h-1zM1160 305h1v1h-1zM1201 666h1v1h-1zM1180 312h1v1h-1zM1240 339h1v1h-1zM1483 645h1v1h-1zM1170 347h1v1h-1zM1209 693h1v1h-1zM1507 615h1v1h-1zM1469 292h1v1h-1zM1264 640h1v1h-1zM1246 714h1v1h-1zM1326 234h1v1h-1zM1415 490h1v1h-1zM1215 436h1v1h-1zM1223 603h1v1h-1zM1122 337h1v1h-1zM1213 675h1v1h-1zM1341 717h1v1h-1zM1498 451h1v1h-1zM1149 531h1v1h-1zM1427 635h1v1h-1zM1335 218h1v1h-1zM1506 432h1v1h-1zM1562 590h1v1h-1zM1362 304h1v1h-1zM1097 649h1v1h-1zM1487 278h1v1h-1zM1239 471h1v1h-1zM1102 472h1v1h-1zM1360 243h1v1h-1zM1461 239h1v1h-1zM1180 372h1v1h-1zM1189 457h1v1h-1zM1347 343h1v1h-1zM1319 586h1v1h-1zM1350 631h1v1h-1zM1414 350h1v1h-1zM1298 288h1v1h-1zM1304 366h1v1h-1zM1278 629h1v1h-1zM1160 636h1v1h-1zM1342 405h1v1h-1zM1507 520h1v1h-1zM1560 277h1v1h-1zM1160 218h1v1h-1zM1093 289h1v1h-1zM1428 209h1v1h-1zM1441 561h1v1h-1zM1197 598h1v1h-1zM1233 495h1v1h-1zM1279 403h1v1h-1zM1472 555h1v1h-1zM1233 703h1v1h-1zM1533 504h1v1h-1zM1279 662h1v1h-1zM1256 478h1v1h-1zM1460 354h1v1h-1zM1297 610h1v1h-1zM1491 449h1v1h-1zM1180 616h1v1h-1zM1209 687h1v1h-1zM1228 352h1v1h-1zM1443 351h1v1h-1zM1340 583h1v1h-1zM1262 699h1v1h-1zM1328 356h1v1h-1zM1402 269h1v1h-1zM1404 229h1v1h-1zM1390 553h1v1h-1zM1521 296h1v1h-1zM1528 438h1v1h-1zM1328 407h1v1h-1zM1480 580h1v1h-1zM1353 541h1v1h-1zM1257 551h1v1h-1zM1292 534h1v1h-1zM1501 378h1v1h-1zM1411 691h1v1h-1zM1455 420h1v1h-1zM1538 324h1v1h-1zM1313 676h1v1h-1zM1266 230h1v1h-1zM1517 667h1v1h-1zM1368 563h1v1h-1zM1135 438h1v1h-1zM1415 436h1v1h-1zM1227 331h1v1h-1zM1432 527h1v1h-1zM1365 350h1v1h-1zM1330 375h1v1h-1zM1168 482h1v1h-1zM1219 719h1v1h-1zM1121 210h1v1h-1zM1293 373h1v1h-1zM1298 291h1v1h-1zM1417 219h1v1h-1zM1091 361h1v1h-1zM1388 614h1v1h-1zM1562 246h1v1h-1zM1313 655h1v1h-1zM1236 446h1v1h-1zM1308 211h1v1h-1zM1256 220h1v1h-1zM1148 445h1v1h-1zM1412 581h1v1h-1zM1152 484h1v1h-1zM1331 587h1v1h-1zM1396 655h1v1h-1zM1128 306h1v1h-1zM1419 676h1v1h-1zM1186 459h1v1h-1zM1276 533h1v1h-1zM1372 270h1v1h-1zM1455 305h1v1h-1zM1563 630h1v1h-1zM1179 245h1v1h-1zM1302 549h1v1h-1zM1174 428h1v1h-1zM1215 513h1v1h-1zM1339 502h1v1h-1zM1424 403h1v1h-1zM1459 361h1v1h-1zM1464 314h1v1h-1zM1109 204h1v1h-1zM1262 412h1v1h-1zM1452 335h1v1h-1zM1240 400h1v1h-1zM1472 229h1v1h-1zM1509 353h1v1h-1zM1316 231h1v1h-1zM1375 498h1v1h-1zM1452 487h1v1h-1zM1198 268h1v1h-1zM1200 231h1v1h-1zM1478 532h1v1h-1zM1396 532h1v1h-1zM1271 584h1v1h-1zM1545 332h1v1h-1zM1417 686h1v1h-1zM1540 313h1v1h-1zM1251 333h1v1h-1zM1354 625h1v1h-1zM1527 469h1v1h-1zM1515 641h1v1h-1zM1328 298h1v1h-1zM1346 328h1v1h-1zM1189 345h1v1h-1zM1354 397h1v1h-1zM1221 609h1v1h-1zM1520 366h1v1h-1zM1128 324h1v1h-1zM1224 291h1v1h-1zM1398 685h1v1h-1zM1524 228h1v1h-1zM1180 531h1v1h-1zM1455 459h1v1h-1zM1343 413h1v1h-1zM1327 479h1v1h-1zM1299 283h1v1h-1zM1095 570h1v1h-1zM1562 408h1v1h-1zM1294 221h1v1h-1zM1339 564h1v1h-1zM1216 669h1v1h-1zM1523 222h1v1h-1zM1413 644h1v1h-1zM1338 526h1v1h-1zM1421 456h1v1h-1zM1421 649h1v1h-1zM1333 452h1v1h-1zM1258 409h1v1h-1zM1263 384h1v1h-1zM1220 534h1v1h-1zM1549 258h1v1h-1zM1107 558h1v1h-1zM1534 517h1v1h-1zM1089 676h1v1h-1zM1387 517h1v1h-1zM1443 239h1v1h-1zM1478 416h1v1h-1zM1240 240h1v1h-1zM1288 278h1v1h-1zM1160 323h1v1h-1zM1121 560h1v1h-1zM1240 315h1v1h-1zM1176 443h1v1h-1zM1313 391h1v1h-1zM1465 656h1v1h-1zM1440 585h1v1h-1zM1100 312h1v1h-1zM1229 428h1v1h-1zM1301 403h1v1h-1zM1136 639h1v1h-1zM1509 666h1v1h-1zM1194 605h1v1h-1zM1365 593h1v1h-1zM1549 513h1v1h-1zM1238 683h1v1h-1zM1224 323h1v1h-1zM1294 492h1v1h-1zM1301 659h1v1h-1zM1182 297h1v1h-1zM1279 382h1v1h-1zM1355 299h1v1h-1zM1219 297h1v1h-1zM1324 413h1v1h-1zM1373 482h1v1h-1zM1184 374h1v1h-1zM1177 300h1v1h-1zM1201 431h1v1h-1zM1520 710h1v1h-1zM1502 430h1v1h-1zM1105 666h1v1h-1zM1187 407h1v1h-1zM1495 689h1v1h-1zM1234 688h1v1h-1zM1516 509h1v1h-1zM1340 258h1v1h-1zM1168 205h1v1h-1zM1261 277h1v1h-1zM1357 566h1v1h-1zM1124 631h1v1h-1zM1525 598h1v1h-1zM1411 683h1v1h-1zM1385 613h1v1h-1zM1396 515h1v1h-1zM1337 571h1v1h-1zM1157 456h1v1h-1zM1166 363h1v1h-1zM1401 652h1v1h-1zM1221 612h1v1h-1zM1384 244h1v1h-1zM1463 533h1v1h-1zM1348 688h1v1h-1zM1401 515h1v1h-1zM1564 669h1v1h-1zM1173 652h1v1h-1zM1138 369h1v1h-1zM1155 691h1v1h-1zM1367 571h1v1h-1zM1186 622h1v1h-1zM1419 592h1v1h-1zM1094 309h1v1h-1zM1190 498h1v1h-1zM1503 295h1v1h-1zM1403 571h1v1h-1zM1189 654h1v1h-1zM1405 230h1v1h-1zM1248 465h1v1h-1zM1499 249h1v1h-1zM1210 635h1v1h-1zM1356 256h1v1h-1zM1214 520h1v1h-1zM1473 388h1v1h-1zM1373 274h1v1h-1zM1455 509h1v1h-1zM1349 450h1v1h-1zM1342 305h1v1h-1zM1258 717h1v1h-1zM1440 324h1v1h-1zM1190 667h1v1h-1zM1350 656h1v1h-1zM1093 609h1v1h-1zM1495 234h1v1h-1zM1279 316h1v1h-1zM1489 551h1v1h-1zM1448 523h1v1h-1zM1370 575h1v1h-1zM1414 228h1v1h-1zM1315 531h1v1h-1zM1262 323h1v1h-1zM1511 535h1v1h-1zM1490 420h1v1h-1zM1384 246h1v1h-1zM1495 646h1v1h-1zM1498 500h1v1h-1zM1522 365h1v1h-1zM1539 208h1v1h-1zM1384 454h1v1h-1zM1322 236h1v1h-1zM1280 594h1v1h-1zM1488 428h1v1h-1zM1158 406h1v1h-1zM1109 218h1v1h-1zM1461 582h1v1h-1zM1147 528h1v1h-1zM1451 295h1v1h-1zM1254 621h1v1h-1zM1235 492h1v1h-1zM1250 417h1v1h-1zM1459 245h1v1h-1zM1391 459h1v1h-1zM1300 332h1v1h-1zM1551 481h1v1h-1zM1314 680h1v1h-1zM1340 569h1v1h-1zM1396 721h1v1h-1zM1412 678h1v1h-1zM1223 369h1v1h-1zM1417 655h1v1h-1zM1438 429h1v1h-1zM1100 262h1v1h-1zM1248 645h1v1h-1zM1291 399h1v1h-1zM1495 311h1v1h-1zM1178 237h1v1h-1zM1190 292h1v1h-1zM1447 641h1v1h-1zM1492 275h1v1h-1zM1281 635h1v1h-1zM1336 379h1v1h-1zM1353 603h1v1h-1zM1471 345h1v1h-1zM1288 320h1v1h-1zM1536 597h1v1h-1zM1121 422h1v1h-1zM1248 428h1v1h-1zM1375 337h1v1h-1zM1416 560h1v1h-1zM1420 210h1v1h-1zM1480 217h1v1h-1zM1255 199h1v1h-1zM1477 210h1v1h-1zM1500 560h1v1h-1zM1198 383h1v1h-1zM1550 209h1v1h-1zM1165 699h1v1h-1zM1157 334h1v1h-1zM1114 422h1v1h-1zM1448 481h1v1h-1zM1504 539h1v1h-1zM1130 639h1v1h-1zM1492 698h1v1h-1zM1533 444h1v1h-1zM1502 502h1v1h-1zM1346 634h1v1h-1zM1348 330h1v1h-1zM1416 552h1v1h-1zM1341 316h1v1h-1zM1533 425h1v1h-1zM1146 506h1v1h-1zM1480 365h1v1h-1zM1343 668h1v1h-1zM1227 658h1v1h-1zM1102 441h1v1h-1zM1181 637h1v1h-1zM1106 422h1v1h-1zM1280 467h1v1h-1zM1342 651h1v1h-1zM1265 610h1v1h-1zM1184 724h1v1h-1zM1277 665h1v1h-1zM1098 289h1v1h-1zM1539 302h1v1h-1zM1521 367h1v1h-1zM1361 331h1v1h-1zM1515 388h1v1h-1zM1313 243h1v1h-1zM1232 310h1v1h-1zM1316 526h1v1h-1zM1177 583h1v1h-1zM1382 699h1v1h-1zM1435 474h1v1h-1zM1317 400h1v1h-1zM1208 659h1v1h-1zM1273 652h1v1h-1zM1474 374h1v1h-1zM1206 358h1v1h-1zM1275 571h1v1h-1zM1196 281h1v1h-1zM1340 702h1v1h-1zM1475 690h1v1h-1zM1217 507h1v1h-1zM1203 664h1v1h-1zM1333 400h1v1h-1zM1196 661h1v1h-1zM1205 688h1v1h-1zM1357 638h1v1h-1zM1213 606h1v1h-1zM1350 436h1v1h-1zM1187 334h1v1h-1zM1277 509h1v1h-1zM1521 591h1v1h-1zM1455 547h1v1h-1zM1172 623h1v1h-1zM1539 444h1v1h-1zM1370 464h1v1h-1zM1132 306h1v1h-1zM1527 309h1v1h-1zM1322 263h1v1h-1zM1424 198h1v1h-1zM1357 465h1v1h-1zM1381 683h1v1h-1zM1096 428h1v1h-1zM1474 517h1v1h-1zM1420 561h1v1h-1zM1446 460h1v1h-1zM1559 643h1v1h-1zM1507 264h1v1h-1zM1385 679h1v1h-1zM1402 533h1v1h-1zM1295 676h1v1h-1zM1538 411h1v1h-1zM1514 653h1v1h-1zM1275 412h1v1h-1zM1234 376h1v1h-1zM1209 349h1v1h-1zM1123 534h1v1h-1zM1166 323h1v1h-1zM1337 690h1v1h-1zM1256 562h1v1h-1zM1134 306h1v1h-1zM1195 576h1v1h-1zM1421 539h1v1h-1zM1344 597h1v1h-1zM1502 580h1v1h-1zM1304 545h1v1h-1zM1334 586h1v1h-1zM1096 392h1v1h-1zM1376 582h1v1h-1zM1333 596h1v1h-1zM1136 491h1v1h-1zM1518 531h1v1h-1zM1513 706h1v1h-1zM1472 271h1v1h-1zM1294 524h1v1h-1zM1409 536h1v1h-1zM1254 387h1v1h-1zM1364 216h1v1h-1zM1179 235h1v1h-1zM1560 365h1v1h-1zM1288 354h1v1h-1zM1235 533h1v1h-1zM1284 277h1v1h-1zM1345 352h1v1h-1zM1293 416h1v1h-1zM1411 250h1v1h-1zM1240 257h1v1h-1zM1535 462h1v1h-1zM1327 513h1v1h-1zM1493 710h1v1h-1zM1361 632h1v1h-1zM1352 631h1v1h-1zM1534 298h1v1h-1zM1297 581h1v1h-1zM1212 253h1v1h-1zM1209 209h1v1h-1zM1276 719h1v1h-1zM1458 580h1v1h-1zM1274 721h1v1h-1zM1135 498h1v1h-1zM1344 326h1v1h-1zM1128 372h1v1h-1zM1383 307h1v1h-1zM1089 560h1v1h-1z" fill="#c8c838"/><path d="M1358 283h1v1h-1zM1544 246h1v1h-1zM1251 210h1v1h-1zM1503 604h1v1h-1zM1199 474h1v1h-1zM1470 491h1v1h-1zM1556 637h1v1h-1zM1427 239h1v1h-1zM1450 451h1v1h-1zM1184 603h1v1h-1zM1166 350h1v1h-1zM1377 619h1v1h-1zM1204 661h1v1h-1zM1207 416h1v1h-1zM1184 269h1v1h-1zM1468 335h1v1h-1zM1265 571h1v1h-1zM1439 451h1v1h-1zM1533 214h1v1h-1zM1433 644h1v1h-1zM1477 320h1v1h-1zM1240 220h1v1h-1zM1224 649h1v1h-1zM1458 278h1v1h-1zM1404 655h1v1h-1zM1237 620h1v1h-1zM1171 693h1v1h-1zM1194 591h1v1h-1zM1516 490h1v1h-1zM1181 611h1v1h-1zM1196 393h1v1h-1zM1140 214h1v1h-1zM1141 329h1v1h-1zM1360 533h1v1h-1zM1516 564h1v1h-1zM1208 247h1v1h-1zM1462 371h1v1h-1zM1413 410h1v1h-1zM1344 545h1v1h-1zM1437 635h1v1h-1zM1394 588h1v1h-1zM1411 679h1v1h-1zM1374 439h1v1h-1zM1358 672h1v1h-1zM1553 317h1v1h-1zM1135 296h1v1h-1zM1119 545h1v1h-1zM1552 362h1v1h-1zM1136 559h1v1h-1zM1529 223h1v1h-1zM1155 217h1v1h-1zM1322 253h1v1h-1zM1251 310h1v1h-1zM1354 268h1v1h-1zM1374 692h1v1h-1zM1136 684h1v1h-1zM1467 415h1v1h-1zM1336 623h1v1h-1zM1404 492h1v1h-1zM1516 573h1v1h-1zM1255 465h1v1h-1zM1471 308h1v1h-1zM1521 336h1v1h-1zM1391 211h1v1h-1zM1244 445h1v1h-1zM1414 386h1v1h-1zM1480 392h1v1h-1zM1354 540h1v1h-1zM1178 413h1v1h-1zM1283 295h1v1h-1zM1308 485h1v1h-1zM1167 280h1v1h-1zM1285 486h1v1h-1zM1361 245h1v1h-1zM1417 478h1v1h-1zM1437 501h1v1h-1zM1540 249h1v1h-1zM1405 549h1v1h-1zM1561 539h1v1h-1zM1531 664h1v1h-1zM1448 695h1v1h-1zM1381 368h1v1h-1zM1552 373h1v1h-1zM1394 491h1v1h-1zM1329 497h1v1h-1zM1500 619h1v1h-1zM1371 603h1v1h-1zM1335 495h1v1h-1zM1368 490h1v1h-1zM1538 300h1v1h-1zM1259 317h1v1h-1zM1478 684h1v1h-1zM1093 377h1v1h-1zM1498 312h1v1h-1zM1235 682h1v1h-1zM1507 256h1v1h-1zM1515 284h1v1h-1zM1400 515h1v1h-1zM1410 236h1v1h-1zM1216 691h1v1h-1zM1122 496h1v1h-1zM1364 380h1v1h-1zM1499 302h1v1h-1zM1513 202h1v1h-1zM1437 244h1v1h-1zM1272 463h1v1h-1zM1143 591h1v1h-1zM1450 543h1v1h-1zM1312 630h1v1h-1zM1205 652h1v1h-1zM1132 639h1v1h-1zM1421 613h1v1h-1zM1342 367h1v1h-1zM1447 388h1v1h-1zM1259 572h1v1h-1zM1233 299h1v1h-1zM1553 597h1v1h-1zM1502 713h1v1h-1zM1128 207h1v1h-1zM1314 266h1v1h-1zM1115 565h1v1h-1zM1109 627h1v1h-1zM1332 339h1v1h-1zM1121 709h1v1h-1zM1442 713h1v1h-1zM1214 309h1v1h-1zM1224 495h1v1h-1zM1446 299h1v1h-1zM1219 410h1v1h-1zM1171 221h1v1h-1zM1341 584h1v1h-1zM1094 284h1v1h-1zM1401 336h1v1h-1zM1447 602h1v1h-1zM1520 496h1v1h-1zM1386 688h1v1h-1zM1550 223h1v1h-1zM1193 390h1v1h-1zM1253 700h1v1h-1zM1255 275h1v1h-1zM1463 484h1v1h-1zM1220 627h1v1h-1zM1438 495h1v1h-1zM1180 557h1v1h-1zM1265 507h1v1h-1zM1199 604h1v1h-1zM1554 234h1v1h-1zM1454 431h1v1h-1zM1217 611h1v1h-1zM1540 419h1v1h-1zM1136 681h1v1h-1zM1500 577h1v1h-1zM1239 401h1v1h-1zM1305 485h1v1h-1zM1193 426h1v1h-1zM1364 436h1v1h-1zM1327 376h1v1h-1zM1274 569h1v1h-1zM1320 388h1v1h-1zM1423 342h1v1h-1zM1130 356h1v1h-1zM1318 206h1v1h-1zM1299 374h1v1h-1zM1502 673h1v1h-1zM1148 244h1v1h-1zM1226 439h1v1h-1zM1159 605h1v1h-1zM1554 460h1v1h-1zM1475 422h1v1h-1zM1316 630h1v1h-1zM1238 489h1v1h-1zM1106 550h1v1h-1zM1203 265h1v1h-1zM1239 219h1v1h-1zM1310 628h1v1h-1zM1219 607h1v1h-1zM1488 501h1v1h-1zM1252 319h1v1h-1zM1262 354h1v1h-1zM1512 576h1v1h-1zM1301 643h1v1h-1zM1135 268h1v1h-1zM1419 358h1v1h-1zM1401 363h1v1h-1zM1441 363h1v1h-1zM1490 306h1v1h-1zM1147 348h1v1h-1zM1545 508h1v1h-1zM1243 669h1v1h-1zM1491 270h1v1h-1zM1359 384h1v1h-1zM1486 254h1v1h-1zM1464 709h1v1h-1zM1521 509h1v1h-1zM1379 444h1v1h-1zM1555 364h1v1h-1zM1304 477h1v1h-1zM1296 409h1v1h-1zM1220 689h1v1h-1zM1123 443h1v1h-1zM1301 230h1v1h-1zM1097 663h1v1h-1zM1525 502h1v1h-1zM1388 350h1v1h-1zM1303 267h1v1h-1zM1475 216h1v1h-1zM1531 613h1v1h-1zM1424 692h1v1h-1zM1335 323h1v1h-1zM1103 599h1v1h-1zM1131 521h1v1h-1zM1160 245h1v1h-1zM1117 298h1v1h-1zM1392 290h1v1h-1zM1277 610h1v1h-1zM1459 723h1v1h-1zM1430 710h1v1h-1zM1387 566h1v1h-1zM1356 301h1v1h-1zM1271 446h1v1h-1zM1333 318h1v1h-1zM1355 455h1v1h-1zM1325 646h1v1h-1zM1356 665h1v1h-1zM1329 423h1v1h-1zM1299 358h1v1h-1zM1420 664h1v1h-1zM1092 552h1v1h-1zM1342 415h1v1h-1zM1365 328h1v1h-1zM1241 247h1v1h-1zM1320 662h1v1h-1zM1119 274h1v1h-1zM1108 206h1v1h-1zM1377 568h1v1h-1zM1261 279h1v1h-1zM1263 539h1v1h-1zM1254 365h1v1h-1zM1284 475h1v1h-1zM1442 658h1v1h-1zM1223 402h1v1h-1zM1438 443h1v1h-1zM1118 346h1v1h-1zM1543 236h1v1h-1zM1166 670h1v1h-1zM1117 357h1v1h-1zM1449 250h1v1h-1zM1534 522h1v1h-1zM1261 629h1v1h-1zM1449 656h1v1h-1zM1339 380h1v1h-1zM1232 633h1v1h-1zM1406 642h1v1h-1zM1202 332h1v1h-1zM1498 213h1v1h-1zM1516 296h1v1h-1zM1395 649h1v1h-1zM1449 259h1v1h-1zM1408 544h1v1h-1zM1325 251h1v1h-1zM1332 304h1v1h-1zM1281 495h1v1h-1zM1517 721h1v1h-1zM1432 346h1v1h-1zM1513 650h1v1h-1zM1356 284h1v1h-1zM1487 383h1v1h-1zM1516 378h1v1h-1zM1460 562h1v1h-1zM1382 360h1v1h-1zM1121 365h1v1h-1zM1142 572h1v1h-1zM1328 538h1v1h-1zM1282 548h1v1h-1zM1127 425h1v1h-1zM1383 502h1v1h-1zM1548 259h1v1h-1zM1280 341h1v1h-1zM1170 502h1v1h-1zM1453 278h1v1h-1zM1320 294h1v1h-1zM1551 713h1v1h-1zM1563 510h1v1h-1zM1470 310h1v1h-1zM1189 324h1v1h-1zM1153 307h1v1h-1zM1203 531h1v1h-1zM1271 297h1v1h-1zM1318 384h1v1h-1zM1338 460h1v1h-1zM1429 324h1v1h-1zM1420 400h1v1h-1zM1369 413h1v1h-1zM1418 618h1v1h-1zM1397 213h1v1h-1zM1292 422h1v1h-1zM1475 699h1v1h-1zM1124 510h1v1h-1zM1509 465h1v1h-1zM1552 333h1v1h-1zM1531 543h1v1h-1zM1415 413h1v1h-1zM1091 277h1v1h-1zM1400 291h1v1h-1zM1174 336h1v1h-1zM1152 620h1v1h-1zM1468 488h1v1h-1zM1210 585h1v1h-1zM1110 501h1v1h-1zM1481 299h1v1h-1zM1090 454h1v1h-1zM1278 682h1v1h-1zM1311 648h1v1h-1zM1437 696h1v1h-1zM1527 313h1v1h-1zM1463 535h1v1h-1zM1160 528h1v1h-1zM1439 561h1v1h-1zM1539 310h1v1h-1zM1295 344h1v1h-1zM1146 267h1v1h-1zM1370 265h1v1h-1zM1249 487h1v1h-1zM1499 449h1v1h-1zM1557 315h1v1h-1zM1353 478h1v1h-1zM1366 402h1v1h-1zM1354 548h1v1h-1zM1420 328h1v1h-1zM1502 566h1v1h-1zM1378 332h1v1h-1zM1277 251h1v1h-1zM1242 298h1v1h-1zM1530 693h1v1h-1zM1538 547h1v1h-1zM1485 571h1v1h-1zM1515 466h1v1h-1zM1421 711h1v1h-1zM1319 310h1v1h-1zM1089 655h1v1h-1zM1318 554h1v1h-1zM1317 309h1v1h-1zM1140 529h1v1h-1zM1212 547h1v1h-1zM1239 620h1v1h-1zM1168 672h1v1h-1zM1271 412h1v1h-1zM1269 474h1v1h-1zM1359 505h1v1h-1zM1529 568h1v1h-1zM1288 242h1v1h-1zM1269 582h1v1h-1zM1336 282h1v1h-1zM1361 484h1v1h-1zM1514 611h1v1h-1zM1370 503h1v1h-1zM1300 459h1v1h-1zM1529 444h1v1h-1zM1171 360h1v1h-1zM1558 224h1v1h-1zM1161 390h1v1h-1zM1332 652h1v1h-1zM1366 660h1v1h-1zM1107 307h1v1h-1zM1225 299h1v1h-1zM1484 633h1v1h-1zM1298 289h1v1h-1zM1280 507h1v1h-1zM1260 406h1v1h-1zM1119 449h1v1h-1zM1395 220h1v1h-1zM1323 668h1v1h-1zM1344 658h1v1h-1zM1241 515h1v1h-1zM1494 475h1v1h-1zM1211 323h1v1h-1zM1238 473h1v1h-1zM1198 292h1v1h-1zM1252 432h1v1h-1zM1502 290h1v1h-1zM1393 711h1v1h-1zM1332 413h1v1h-1zM1232 292h1v1h-1zM1553 397h1v1h-1zM1094 652h1v1h-1zM1380 537h1v1h-1zM1219 413h1v1h-1zM1098 436h1v1h-1zM1292 337h1v1h-1zM1403 721h1v1h-1zM1108 400h1v1h-1zM1395 329h1v1h-1zM1197 249h1v1h-1zM1291 274h1v1h-1zM1454 325h1v1h-1zM1248 283h1v1h-1zM1357 573h1v1h-1zM1276 225h1v1h-1zM1248 436h1v1h-1zM1244 553h1v1h-1zM1343 229h1v1h-1zM1353 284h1v1h-1zM1117 714h1v1h-1zM1316 573h1v1h-1zM1108 368h1v1h-1zM1393 700h1v1h-1zM1477 684h1v1h-1zM1380 338h1v1h-1zM1320 442h1v1h-1zM1480 469h1v1h-1zM1444 587h1v1h-1zM1269 638h1v1h-1zM1098 282h1v1h-1zM1277 318h1v1h-1zM1187 360h1v1h-1zM1233 448h1v1h-1zM1334 657h1v1h-1zM1536 395h1v1h-1zM1139 526h1v1h-1zM1128 385h1v1h-1zM1361 582h1v1h-1zM1239 498h1v1h-1zM1249 207h1v1h-1zM1415 386h1v1h-1zM1240 463h1v1h-1zM1514 691h1v1h-1zM1160 403h1v1h-1zM1185 284h1v1h-1zM1203 700h1v1h-1zM1366 488h1v1h-1zM1351 278h1v1h-1zM1120 628h1v1h-1zM1336 631h1v1h-1zM1364 241h1v1h-1zM1375 292h1v1h-1zM1414 639h1v1h-1zM1326 535h1v1h-1zM1165 595h1v1h-1zM1434 241h1v1h-1zM1182 565h1v1h-1zM1328 633h1v1h-1zM1392 657h1v1h-1zM1493 660h1v1h-1zM1314 634h1v1h-1zM1157 655h1v1h-1zM1556 472h1v1h-1zM1510 226h1v1h-1zM1294 590h1v1h-1zM1235 305h1v1h-1zM1163 684h1v1h-1zM1244 402h1v1h-1zM1430 496h1v1h-1zM1478 461h1v1h-1zM1322 449h1v1h-1zM1334 485h1v1h-1zM1139 557h1v1h-1zM1374 215h1v1h-1zM1296 420h1v1h-1zM1358 384h1v1h-1zM1506 477h1v1h-1zM1320 448h1v1h-1zM1516 658h1v1h-1zM1411 451h1v1h-1zM1256 362h1v1h-1zM1320 257h1v1h-1zM1552 569h1v1h-1zM1470 284h1v1h-1zM1387 611h1v1h-1zM1209 498h1v1h-1zM1372 305h1v1h-1zM1415 673h1v1h-1zM1342 404h1v1h-1zM1206 553h1v1h-1zM1257 601h1v1h-1zM1521 236h1v1h-1zM1292 421h1v1h-1zM1236 395h1v1h-1zM1341 672h1v1h-1zM1525 223h1v1h-1zM1451 424h1v1h-1zM1120 289h1v1h-1zM1207 532h1v1h-1zM1290 628h1v1h-1zM1408 215h1v1h-1zM1238 506h1v1h-1zM1180 242h1v1h-1zM1410 357h1v1h-1zM1286 518h1v1h-1zM1104 504h1v1h-1zM1442 541h1v1h-1zM1195 381h1v1h-1zM1390 607h1v1h-1zM1444 519h1v1h-1zM1495 542h1v1h-1zM1280 303h1v1h-1zM1276 380h1v1h-1zM1428 482h1v1h-1zM1159 288h1v1h-1zM1131 541h1v1h-1zM1524 524h1v1h-1zM1287 566h1v1h-1zM1340 597h1v1h-1zM1513 536h1v1h-1zM1191 502h1v1h-1zM1348 598h1v1h-1zM1112 295h1v1h-1zM1119 486h1v1h-1zM1457 410h1v1h-1zM1290 355h1v1h-1zM1128 455h1v1h-1zM1535 544h1v1h-1zM1455 460h1v1h-1zM1179 606h1v1h-1zM1410 549h1v1h-1zM1330 302h1v1h-1zM1402 415h1v1h-1zM1172 421h1v1h-1zM1413 617h1v1h-1zM1368 333h1v1h-1zM1116 635h1v1h-1zM1500 302h1v1h-1zM1285 524h1v1h-1zM1308 724h1v1h-1zM1418 586h1v1h-1zM1202 379h1v1h-1zM1108 213h1v1h-1zM1148 336h1v1h-1zM1544 621h1v1h-1zM1291 559h1v1h-1zM1484 305h1v1h-1zM1360 532h1v1h-1zM1096 353h1v1h-1zM1171 723h1v1h-1zM1224 470h1v1h-1zM1442 578h1v1h-1zM1472 714h1v1h-1zM1262 484h1v1h-1zM1430 604h1v1h-1zM1107 284h1v1h-1zM1243 337h1v1h-1zM1132 427h1v1h-1zM1144 274h1v1h-1zM1328 244h1v1h-1zM1391 268h1v1h-1zM1363 392h1v1h-1zM1323 709h1v1h-1zM1290 473h1v1h-1zM1382 491h1v1h-1zM1401 498h1v1h-1zM1161 301h1v1h-1zM1098 619h1v1h-1zM1148 411h1v1h-1zM1347 642h1v1h-1zM1537 664h1v1h-1zM1159 365h1v1h-1zM1267 365h1v1h-1zM1386 350h1v1h-1zM1379 722h1v1h-1zM1178 625h1v1h-1zM1534 607h1v1h-1zM1237 520h1v1h-1zM1331 433h1v1h-1zM1168 338h1v1h-1zM1172 715h1v1h-1zM1464 654h1v1h-1zM1524 550h1v1h-1zM1210 390h1v1h-1zM1378 489h1v1h-1zM1171 349h1v1h-1zM1374 650h1v1h-1zM1186 682h1v1h-1zM1364 522h1v1h-1zM1220 220h1v1h-1zM1377 211h1v1h-1zM1154 315h1v1h-1zM1452 555h1v1h-1zM1318 319h1v1h-1zM1432 415h1v1h-1zM1464 239h1v1h-1zM1490 390h1v1h-1zM1173 616h1v1h-1zM1449 377h1v1h-1zM1270 249h1v1h-1zM1317 453h1v1h-1zM1298 673h1v1h-1zM1248 530h1v1h-1zM1445 301h1v1h-1zM1172 386h1v1h-1zM1398 284h1v1h-1zM1505 260h1v1h-1zM1170 343h1v1h-1zM1368 622h1v1h-1zM1173 634h1v1h-1zM1334 199h1v1h-1zM1228 654h1v1h-1zM1501 214h1v1h-1zM1324 222h1v1h-1zM1449 419h1v1h-1zM1283 356h1v1h-1zM1402 297h1v1h-1z" fill="#dcdc40"/><path d="M1124 561h1.5v1.5h-1.5zM1285 386h1.5v1.5h-1.5zM1525 650h1.5v1.5h-1.5zM1184 592h1.5v1.5h-1.5zM1098 350h1.5v1.5h-1.5zM1091 551h1.5v1.5h-1.5zM1179 461h1.5v1.5h-1.5zM1233 317h1.5v1.5h-1.5zM1446 323h1.5v1.5h-1.5zM1386 508h1.5v1.5h-1.5zM1522 295h1.5v1.5h-1.5zM1144 588h1.5v1.5h-1.5zM1260 612h1.5v1.5h-1.5zM1230 246h1.5v1.5h-1.5zM1521 597h1.5v1.5h-1.5zM1553 720h1.5v1.5h-1.5zM1177 232h1.5v1.5h-1.5zM1201 338h1.5v1.5h-1.5zM1461 563h1.5v1.5h-1.5zM1195 557h1.5v1.5h-1.5zM1266 696h1.5v1.5h-1.5zM1489 257h1.5v1.5h-1.5zM1350 285h1.5v1.5h-1.5zM1501 706h1.5v1.5h-1.5zM1437 601h1.5v1.5h-1.5zM1173 392h1.5v1.5h-1.5zM1560 388h1.5v1.5h-1.5zM1474 454h1.5v1.5h-1.5zM1497 700h1.5v1.5h-1.5zM1490 680h1.5v1.5h-1.5zM1261 268h1.5v1.5h-1.5zM1451 658h1.5v1.5h-1.5zM1288 395h1.5v1.5h-1.5zM1396 703h1.5v1.5h-1.5zM1148 625h1.5v1.5h-1.5zM1465 567h1.5v1.5h-1.5zM1467 503h1.5v1.5h-1.5zM1481 507h1.5v1.5h-1.5zM1503 693h1.5v1.5h-1.5zM1113 523h1.5v1.5h-1.5zM1552 391h1.5v1.5h-1.5zM1099 405h1.5v1.5h-1.5zM1367 333h1.5v1.5h-1.5zM1518 202h1.5v1.5h-1.5zM1229 625h1.5v1.5h-1.5zM1206 294h1.5v1.5h-1.5zM1234 300h1.5v1.5h-1.5zM1437 652h1.5v1.5h-1.5zM1197 648h1.5v1.5h-1.5zM1494 408h1.5v1.5h-1.5zM1277 661h1.5v1.5h-1.5zM1219 558h1.5v1.5h-1.5zM1538 497h1.5v1.5h-1.5zM1207 485h1.5v1.5h-1.5zM1360 451h1.5v1.5h-1.5zM1187 209h1.5v1.5h-1.5zM1485 200h1.5v1.5h-1.5zM1413 349h1.5v1.5h-1.5zM1234 224h1.5v1.5h-1.5zM1358 302h1.5v1.5h-1.5zM1157 480h1.5v1.5h-1.5zM1269 367h1.5v1.5h-1.5zM1207 426h1.5v1.5h-1.5zM1442 706h1.5v1.5h-1.5zM1331 370h1.5v1.5h-1.5zM1177 587h1.5v1.5h-1.5zM1183 283h1.5v1.5h-1.5zM1368 457h1.5v1.5h-1.5zM1115 198h1.5v1.5h-1.5zM1091 339h1.5v1.5h-1.5zM1482 624h1.5v1.5h-1.5zM1228 691h1.5v1.5h-1.5zM1293 507h1.5v1.5h-1.5zM1443 258h1.5v1.5h-1.5zM1176 646h1.5v1.5h-1.5zM1212 589h1.5v1.5h-1.5zM1303 368h1.5v1.5h-1.5zM1538 536h1.5v1.5h-1.5zM1127 348h1.5v1.5h-1.5zM1200 695h1.5v1.5h-1.5zM1391 311h1.5v1.5h-1.5zM1284 263h1.5v1.5h-1.5zM1092 478h1.5v1.5h-1.5zM1281 382h1.5v1.5h-1.5zM1484 607h1.5v1.5h-1.5zM1494 552h1.5v1.5h-1.5zM1528 640h1.5v1.5h-1.5zM1284 580h1.5v1.5h-1.5zM1186 237h1.5v1.5h-1.5zM1089 429h1.5v1.5h-1.5zM1215 393h1.5v1.5h-1.5zM1422 216h1.5v1.5h-1.5zM1413 401h1.5v1.5h-1.5zM1107 457h1.5v1.5h-1.5zM1445 281h1.5v1.5h-1.5zM1426 672h1.5v1.5h-1.5zM1194 683h1.5v1.5h-1.5zM1207 395h1.5v1.5h-1.5zM1410 288h1.5v1.5h-1.5zM1290 542h1.5v1.5h-1.5zM1236 241h1.5v1.5h-1.5zM1451 574h1.5v1.5h-1.5zM1193 386h1.5v1.5h-1.5zM1188 476h1.5v1.5h-1.5zM1495 548h1.5v1.5h-1.5zM1456 534h1.5v1.5h-1.5zM1278 335h1.5v1.5h-1.5zM1133 563h1.5v1.5h-1.5zM1250 215h1.5v1.5h-1.5zM1258 668h1.5v1.5h-1.5zM1390 421h1.5v1.5h-1.5zM1115 592h1.5v1.5h-1.5zM1355 282h1.5v1.5h-1.5zM1400 612h1.5v1.5h-1.5zM1184 692h1.5v1.5h-1.5zM1356 721h1.5v1.5h-1.5zM1207 531h1.5v1.5h-1.5zM1337 283h1.5v1.5h-1.5zM1149 244h1.5v1.5h-1.5zM1510 705h1.5v1.5h-1.5zM1107 431h1.5v1.5h-1.5zM1372 492h1.5v1.5h-1.5zM1369 549h1.5v1.5h-1.5zM1189 204h1.5v1.5h-1.5zM1426 720h1.5v1.5h-1.5zM1516 706h1.5v1.5h-1.5zM1224 599h1.5v1.5h-1.5zM1405 224h1.5v1.5h-1.5zM1304 313h1.5v1.5h-1.5zM1435 334h1.5v1.5h-1.5zM1351 495h1.5v1.5h-1.5zM1363 675h1.5v1.5h-1.5zM1138 567h1.5v1.5h-1.5zM1317 258h1.5v1.5h-1.5zM1531 381h1.5v1.5h-1.5zM1382 342h1.5v1.5h-1.5zM1145 636h1.5v1.5h-1.5zM1135 577h1.5v1.5h-1.5zM1550 320h1.5v1.5h-1.5zM1118 379h1.5v1.5h-1.5zM1138 722h1.5v1.5h-1.5zM1139 287h1.5v1.5h-1.5zM1108 724h1.5v1.5h-1.5zM1373 240h1.5v1.5h-1.5zM1094 422h1.5v1.5h-1.5zM1216 638h1.5v1.5h-1.5zM1463 327h1.5v1.5h-1.5zM1090 335h1.5v1.5h-1.5zM1161 319h1.5v1.5h-1.5zM1194 549h1.5v1.5h-1.5zM1294 673h1.5v1.5h-1.5zM1475 450h1.5v1.5h-1.5zM1313 464h1.5v1.5h-1.5zM1550 419h1.5v1.5h-1.5zM1293 282h1.5v1.5h-1.5zM1515 615h1.5v1.5h-1.5zM1409 609h1.5v1.5h-1.5zM1269 633h1.5v1.5h-1.5zM1186 198h1.5v1.5h-1.5zM1407 592h1.5v1.5h-1.5zM1360 481h1.5v1.5h-1.5zM1348 218h1.5v1.5h-1.5zM1355 652h1.5v1.5h-1.5zM1098 334h1.5v1.5h-1.5zM1334 407h1.5v1.5h-1.5zM1413 279h1.5v1.5h-1.5zM1379 461h1.5v1.5h-1.5zM1460 533h1.5v1.5h-1.5zM1414 349h1.5v1.5h-1.5zM1523 387h1.5v1.5h-1.5zM1381 374h1.5v1.5h-1.5zM1492 582h1.5v1.5h-1.5zM1361 688h1.5v1.5h-1.5zM1522 391h1.5v1.5h-1.5zM1214 368h1.5v1.5h-1.5zM1205 349h1.5v1.5h-1.5zM1139 600h1.5v1.5h-1.5zM1265 649h1.5v1.5h-1.5zM1093 358h1.5v1.5h-1.5zM1544 655h1.5v1.5h-1.5zM1560 709h1.5v1.5h-1.5zM1510 537h1.5v1.5h-1.5zM1547 274h1.5v1.5h-1.5zM1306 498h1.5v1.5h-1.5zM1459 506h1.5v1.5h-1.5zM1183 656h1.5v1.5h-1.5zM1329 536h1.5v1.5h-1.5zM1093 716h1.5v1.5h-1.5zM1101 717h1.5v1.5h-1.5zM1385 444h1.5v1.5h-1.5zM1394 448h1.5v1.5h-1.5zM1533 627h1.5v1.5h-1.5zM1095 423h1.5v1.5h-1.5zM1241 608h1.5v1.5h-1.5zM1240 382h1.5v1.5h-1.5zM1537 492h1.5v1.5h-1.5zM1247 323h1.5v1.5h-1.5zM1093 306h1.5v1.5h-1.5zM1184 590h1.5v1.5h-1.5zM1543 401h1.5v1.5h-1.5zM1118 209h1.5v1.5h-1.5zM1556 663h1.5v1.5h-1.5zM1505 575h1.5v1.5h-1.5zM1329 368h1.5v1.5h-1.5zM1255 454h1.5v1.5h-1.5zM1183 421h1.5v1.5h-1.5zM1537 472h1.5v1.5h-1.5zM1334 453h1.5v1.5h-1.5zM1329 668h1.5v1.5h-1.5zM1396 585h1.5v1.5h-1.5zM1528 597h1.5v1.5h-1.5zM1424 639h1.5v1.5h-1.5zM1285 520h1.5v1.5h-1.5zM1213 657h1.5v1.5h-1.5zM1477 448h1.5v1.5h-1.5zM1396 702h1.5v1.5h-1.5zM1239 501h1.5v1.5h-1.5zM1504 468h1.5v1.5h-1.5zM1127 303h1.5v1.5h-1.5zM1130 391h1.5v1.5h-1.5zM1118 586h1.5v1.5h-1.5zM1170 205h1.5v1.5h-1.5zM1112 218h1.5v1.5h-1.5zM1480 218h1.5v1.5h-1.5zM1265 641h1.5v1.5h-1.5zM1481 344h1.5v1.5h-1.5zM1095 645h1.5v1.5h-1.5zM1398 680h1.5v1.5h-1.5zM1417 596h1.5v1.5h-1.5zM1382 554h1.5v1.5h-1.5zM1384 260h1.5v1.5h-1.5zM1206 580h1.5v1.5h-1.5zM1532 282h1.5v1.5h-1.5zM1178 363h1.5v1.5h-1.5zM1355 662h1.5v1.5h-1.5zM1164 699h1.5v1.5h-1.5zM1318 226h1.5v1.5h-1.5zM1334 384h1.5v1.5h-1.5zM1278 671h1.5v1.5h-1.5zM1103 353h1.5v1.5h-1.5zM1348 384h1.5v1.5h-1.5zM1323 558h1.5v1.5h-1.5zM1307 245h1.5v1.5h-1.5zM1351 228h1.5v1.5h-1.5zM1253 594h1.5v1.5h-1.5zM1208 319h1.5v1.5h-1.5zM1178 209h1.5v1.5h-1.5zM1362 294h1.5v1.5h-1.5zM1435 234h1.5v1.5h-1.5zM1145 527h1.5v1.5h-1.5zM1381 347h1.5v1.5h-1.5zM1160 643h1.5v1.5h-1.5zM1382 448h1.5v1.5h-1.5zM1153 374h1.5v1.5h-1.5zM1381 275h1.5v1.5h-1.5zM1354 653h1.5v1.5h-1.5zM1281 481h1.5v1.5h-1.5zM1284 262h1.5v1.5h-1.5zM1348 242h1.5v1.5h-1.5zM1512 686h1.5v1.5h-1.5z" fill="#d8d840"/><path d="M1087.5 196.4H1565M1087.5 726.6H1565" stroke="#7a0c0c" stroke-width="1.2"/><path d="M1087.5 218.9H1565M1087.5 704.1H1565" stroke="#c2601c" stroke-width="1.2"/><path d="M1087.5 271.3H1551.1V651.8H1087.5" stroke="#d81a1a" stroke-width="1.3" fill="none"/><clipPath id="mc"><rect x="1087.5" y="196.4" width="477.5" height="530.2"/></clipPath><circle cx="1300" cy="461.5" r="266" fill="none" stroke="#741a7a" stroke-width="1.1" clip-path="url(#mc)"/><g fill="#f4f032"><circle cx="1125.2" cy="238" r="4.5"/><circle cx="1292.9" cy="234.3" r="4"/><circle cx="1287" cy="265.3" r="4.5"/><circle cx="1193.4" cy="242.1" r="2.5"/><circle cx="1250.2" cy="254.9" r="2.5"/><circle cx="1298.5" cy="273.3" r="2.5"/><circle cx="1279.8" cy="287.8" r="2.5"/><circle cx="1238.4" cy="297.7" r="3"/><circle cx="1328.3" cy="293" r="2.5"/><circle cx="1134" cy="388.4" r="2.5"/><circle cx="1300.4" cy="367.6" r="2.5"/><circle cx="1324" cy="371.1" r="2.5"/><circle cx="1192" cy="198.3" r="3"/><circle cx="1209.3" cy="211.3" r="2.5"/><circle cx="1199.3" cy="398.3" r="2.3"/><circle cx="1388.9" cy="207" r="6"/><circle cx="1458.8" cy="199" r="2.5"/><circle cx="1512" cy="199.5" r="3.5"/><circle cx="1559.4" cy="209.4" r="2.5"/><circle cx="1541.6" cy="244" r="4"/><circle cx="1448.1" cy="285.2" r="4.5"/><circle cx="1463.5" cy="298.9" r="2.5"/><circle cx="1458.8" cy="261" r="2.5"/><circle cx="1555.8" cy="326.1" r="3.5"/><circle cx="1497.8" cy="330.2" r="3"/><circle cx="1492.6" cy="330.2" r="2.5"/><circle cx="1449.8" cy="366.4" r="2.5"/><circle cx="1438.6" cy="397.9" r="2.5"/><circle cx="1180.9" cy="423.9" r="3.5"/><circle cx="1300.4" cy="401.4" r="2.5"/><circle cx="1294.5" cy="529.9" r="2.5"/><circle cx="1128.8" cy="481.4" r="2.5"/><circle cx="1192.7" cy="588" r="2.5"/><circle cx="1461.8" cy="406.8" r="2.5"/><circle cx="1373.5" cy="438.1" r="2.5"/><circle cx="1473" cy="642.5" r="4"/><circle cx="1407.2" cy="711" r="4.5"/><circle cx="1370.7" cy="608.7" r="2.5"/><circle cx="1461.1" cy="653.2" r="2.5"/><circle cx="1305.9" cy="267.7" r="2.2"/><rect x="1258.9" y="239.8" width="3.6" height="3.6"/><rect x="1267.9" y="252.8" width="3.6" height="3.6"/><rect x="1271.7" y="254.0" width="3.6" height="3.6"/><rect x="1304.1" y="219.0" width="3.6" height="3.6"/><rect x="1241.1" y="311.8" width="3.6" height="3.6"/><rect x="1108.1" y="351.1" width="3.6" height="3.6"/><rect x="1163.2" y="370.5" width="3.6" height="3.6"/><rect x="1517.8" y="196.5" width="3.6" height="3.6"/><rect x="1387.1" y="246.2" width="3.6" height="3.6"/><rect x="1422.6" y="253.3" width="3.6" height="3.6"/><rect x="1515.4" y="231.5" width="3.6" height="3.6"/><rect x="1506.2" y="252.1" width="3.6" height="3.6"/><rect x="1508.3" y="220.2" width="3.6" height="3.6"/><rect x="1454.6" y="225.4" width="3.6" height="3.6"/><rect x="1493.2" y="283.4" width="3.6" height="3.6"/><rect x="1508.2" y="281.7" width="3.6" height="3.6"/><rect x="1465.2" y="316.0" width="3.6" height="3.6"/><rect x="1410.8" y="321.2" width="3.6" height="3.6"/><rect x="1370.5" y="315.3" width="3.6" height="3.6"/><rect x="1345.0" y="323.2" width="3.6" height="3.6"/><rect x="1330.2" y="337.8" width="3.6" height="3.6"/><rect x="1370.5" y="344.9" width="3.6" height="3.6"/><rect x="1535.1" y="365.3" width="3.6" height="3.6"/><rect x="1557.6" y="370.5" width="3.6" height="3.6"/><rect x="1457.0" y="264.7" width="3.6" height="3.6"/><rect x="1114.0" y="405.5" width="3.6" height="3.6"/><rect x="1121.1" y="416.9" width="3.6" height="3.6"/><rect x="1197.5" y="396.3" width="3.6" height="3.6"/><rect x="1245.8" y="411.0" width="3.6" height="3.6"/><rect x="1258.4" y="422.3" width="3.6" height="3.6"/><rect x="1252.9" y="427.5" width="3.6" height="3.6"/><rect x="1179.1" y="451.2" width="3.6" height="3.6"/><rect x="1102.1" y="448.1" width="3.6" height="3.6"/><rect x="1089.6" y="461.4" width="3.6" height="3.6"/><rect x="1108.8" y="474.9" width="3.6" height="3.6"/><rect x="1315.9" y="419.2" width="3.6" height="3.6"/><rect x="1218.1" y="553.0" width="3.6" height="3.6"/><rect x="1181.4" y="564.1" width="3.6" height="3.6"/><rect x="1132.4" y="567.7" width="3.6" height="3.6"/><rect x="1089.6" y="581.9" width="3.6" height="3.6"/><rect x="1308.2" y="457.2" width="3.6" height="3.6"/><rect x="1434.5" y="403.9" width="3.6" height="3.6"/><rect x="1540.5" y="409.1" width="3.6" height="3.6"/><rect x="1340.5" y="463.5" width="3.6" height="3.6"/><rect x="1431.4" y="464.2" width="3.6" height="3.6"/><rect x="1454.1" y="473.7" width="3.6" height="3.6"/><rect x="1561.5" y="473.7" width="3.6" height="3.6"/><rect x="1419.1" y="501.4" width="3.6" height="3.6"/><rect x="1436.4" y="506.8" width="3.6" height="3.6"/><rect x="1475.4" y="532.4" width="3.6" height="3.6"/><rect x="1431.4" y="561.3" width="3.6" height="3.6"/><rect x="1373.4" y="619.2" width="3.6" height="3.6"/><rect x="1498.4" y="640.5" width="3.6" height="3.6"/><rect x="1533.2" y="669.6" width="3.6" height="3.6"/><rect x="1419.1" y="686.9" width="3.6" height="3.6"/><rect x="1554.7" y="705.6" width="3.6" height="3.6"/><rect x="1561.1" y="713.4" width="3.6" height="3.6"/></g><g fill="#fff"><rect x="1176.1" y="318.0" width="3.4" height="3.4"/><rect x="1261.3" y="365.9" width="3.4" height="3.4"/><rect x="1557.7" y="262.4" width="3.4" height="3.4"/><rect x="1558.9" y="564.2" width="3.4" height="3.4"/></g><rect x="1156" y="212.5" width="58.700000000000045" height="13" fill="#000" stroke="#5a5a5a" stroke-width="1"/><text x="1185.35" y="223.3" font-size="10.8" fill="#c4c4c4" text-anchor="middle" font-family="Liberation Sans,sans-serif" textLength="54.700000000000045" lengthAdjust="spacingAndGlyphs">19h53m30s</text><rect x="1255" y="212.5" width="41.40000000000009" height="13" fill="#000" stroke="#5a5a5a" stroke-width="1"/><text x="1275.7" y="223.3" font-size="10.8" fill="#c4c4c4" text-anchor="middle" font-family="Liberation Sans,sans-serif" textLength="37.40000000000009" lengthAdjust="spacingAndGlyphs">19h54m</text><rect x="1335" y="212.5" width="60.5" height="13" fill="#000" stroke="#5a5a5a" stroke-width="1"/><text x="1365.25" y="223.3" font-size="10.8" fill="#c4c4c4" text-anchor="middle" font-family="Liberation Sans,sans-serif" textLength="56.5" lengthAdjust="spacingAndGlyphs">19h54m30s</text><rect x="1435.1" y="212.5" width="40.700000000000045" height="13" fill="#000" stroke="#5a5a5a" stroke-width="1"/><text x="1455.4499999999998" y="223.3" font-size="10.8" fill="#c4c4c4" text-anchor="middle" font-family="Liberation Sans,sans-serif" textLength="36.700000000000045" lengthAdjust="spacingAndGlyphs">19h55m</text><text x="1283.4" y="215" font-size="10.5" fill="#a8a8a8" font-family="Liberation Sans,sans-serif" textLength="34.8" lengthAdjust="spacingAndGlyphs">MX174</text><text x="1283.4" y="268" font-size="10.5" fill="#a8a8a8" font-family="Liberation Sans,sans-serif" textLength="34.8" lengthAdjust="spacingAndGlyphs">MX430</text><text x="1132.3" y="442" font-size="10.3" font-weight="bold" fill="#c8c8d0" font-family="Liberation Sans,sans-serif" textLength="27.3" lengthAdjust="spacingAndGlyphs">20:22</text><text x="1300" y="442" font-size="10.3" font-weight="bold" fill="#c8c8d0" font-family="Liberation Sans,sans-serif" textLength="117.4" lengthAdjust="spacingAndGlyphs">10/11/2023 20:22:56 UT</text><path d="M1132.3 447.6V462.2H1291" stroke="#6a6a6a" stroke-width="1" fill="none"/><rect x="1131.5" y="461.5" width="1.8" height="1.8" fill="#2ad83a"/><circle cx="1306.8" cy="416.3" r="7.8" fill="none" stroke="#e01a1a" stroke-width="1.3"/><path d="M1306.8 411.5v9.6M1302 416.3h9.6" stroke="#c01616" stroke-width="2.2"/><path d="M1303.8 411.3h6M1303.8 421.3h6M1301.8 413.3v6M1311.8 413.3v6" stroke="#c01616" stroke-width="1"/><g fill="#e8201e"><path d="M1296 470.3L1280 468a2.4 2.4 0 0 0 0 4.8z"/><path d="M1304.5 470.3L1320.5 468a2.4 2.4 0 0 1 0 4.8z"/><path d="M1300.9 476L1298.5 490.5a2.4 2.4 0 0 0 4.8 0z"/><path d="M1300.2 453.5l-1.2-7.5a1.2 1.2 0 0 1 2.4 0z"/></g><circle cx="1299.7" cy="462" r="6.8" fill="#4a6ab8" stroke="#c8c8d8" stroke-width="1.3"/><path d="M1296 458l4 1 3 4-2 3-4-1-2-4z" fill="#7ac84a"/><path d="M1283.4 461.3H1319.4M1300.6 443.5V478" stroke="#e8e02a" stroke-width="1"/></svg>
<div style="left:1087.5px;top:107.4px;width:25.1px;height:14px;background:#f0a2aa"></div>
<div style="left:1088px;top:107.6px;font-size:10.8px;line-height:14px;color:#b01a2a;white-space:nowrap;">eld</div>
<div style="left:1114.4px;top:107.4px;width:42.1px;height:14px;background:#777"></div>
<div style="left:985.5px;width:300px;text-align:center;top:107.6px;font-size:10.8px;line-height:14px;color:#e4e4e4;white-space:nowrap;">Horizon</div>
<div style="left:1479.1px;top:108.7px;width:37.6px;height:11.6px;background:#6a6a6a"></div>
<div style="left:1348px;width:300px;text-align:center;top:108.2px;font-size:9.8px;line-height:13px;color:#d8d860;white-space:nowrap;">UCAC4</div>
<div style="left:1517.8px;top:108.7px;width:44.2px;height:11.6px;background:#2a8a1a"></div>
<div style="left:1390px;width:300px;text-align:center;top:108.2px;font-size:9.8px;line-height:13px;color:#a4e84a;white-space:nowrap;">RNGCIC</div>
<div style="left:1441.2px;top:821px;width:123.1px;height:17.3px;background:#f4f4f4;box-sizing:border-box;border:1.5px solid #8a8a8a;border-right-color:#fff;border-bottom-color:#fff"></div>
<div style="left:1445px;top:822.7px;font-size:10.8px;line-height:14px;color:#2a6a2a;white-space:nowrap;">19h53m18s&nbsp; -08°19'30''</div>

<!-- DVTI Cam Control -->

<div class="th">
<div style="left:224.5px;top:5px;width:862.5px;height:815.5px;background:#f0f0f0;border-radius:8px;box-shadow:0 2px 14px rgba(0,0,0,.5),0 0 1px rgba(0,0,0,.6)"></div>
<div style="left:224.5px;top:5px;width:862.5px;height:31px;background:#eef2fa;border-radius:8px 8px 0 0"></div>
<div style="left:232.5px;top:14px;width:14.5px;height:13px;background:#fdfdfd;box-sizing:border-box;border:1px solid #9a9a9a;border-radius:1px"></div>
<div style="left:234px;top:15.5px;width:6.5px;height:10px;background:linear-gradient(135deg,#2f7a62,#2a6f9a)"></div>
<div style="left:244px;top:16px;width:1px;height:5px;background:#3a9a6a"></div>
<div style="left:252.8px;top:13.1px;font-size:12px;line-height:16px;color:#111;white-space:nowrap;">DVTI Cam Control - V5.7.0-33</div>
<svg style="left:960px;top:14px" width="110" height="13" viewBox="0 0 110 13"><g fill="none" stroke="#111" stroke-width="1"><path d="M1 6.5h9.5"/><rect x="48.7" y="1.5" width="9.5" height="9.5" rx="1"/><path d="M97.5 1.5l9.5 9.5M107 1.5l-9.5 9.5"/></g></svg>
<div style="left:224.5px;top:36px;width:862.5px;height:40px;background:#fff"></div>
<div style="left:238.6px;top:48.8px;font-size:11.3px;line-height:15px;color:#111;white-space:nowrap;">File</div>
<div style="left:267.4px;top:48.8px;font-size:11.3px;line-height:15px;color:#111;white-space:nowrap;">Edit</div>
<div style="left:298.5px;top:48.8px;font-size:11.3px;line-height:15px;color:#111;white-space:nowrap;">Camera</div>
<div style="left:349.9px;top:48.8px;font-size:11.3px;line-height:15px;color:#111;white-space:nowrap;">Record</div>
<div style="left:396.6px;top:48.8px;font-size:11.3px;line-height:15px;color:#111;white-space:nowrap;">Tools</div>
<div style="left:435.5px;top:48.8px;font-size:11.3px;line-height:15px;color:#111;white-space:nowrap;">View</div>
<div style="left:472px;top:48.8px;font-size:11.3px;line-height:15px;color:#111;white-space:nowrap;">Help</div>
<div style="left:224.5px;top:76px;width:862.5px;height:1px;background:#e3e3e3"></div>
<div style="left:224.5px;top:77px;width:767px;height:43px;background:#fff"></div>
<div style="left:224.5px;top:120px;width:862.5px;height:1px;background:#e0e0e0"></div>
<div style="left:228px;top:40px;width:1px;height:34px;background:repeating-linear-gradient(180deg,#b5b5b5 0 1px,transparent 1px 3px)"></div>
<div style="left:228px;top:80px;width:1px;height:38px;background:repeating-linear-gradient(180deg,#b5b5b5 0 1px,transparent 1px 3px)"></div>
<div style="left:353.2px;top:81px;width:1px;height:36.5px;background:#9a9a9a"></div>
<div style="left:518px;top:81px;width:1px;height:36.5px;background:#9a9a9a"></div>
<div style="left:722.5px;top:81px;width:1px;height:36.5px;background:#9a9a9a"></div>
<div style="left:847.6px;top:81px;width:1px;height:36.5px;background:#9a9a9a"></div>
<div style="left:973px;top:81px;width:1px;height:36.5px;background:#9a9a9a"></div>
<svg style="left:246px;top:90px" width="14" height="17" viewBox="0 0 14 17"><path d="M4.5 1l3.7 10M9.5 1L5.8 11" stroke="#9aa3b5" stroke-width="1.2" fill="none"/><circle cx="4" cy="13.3" r="2.2" fill="none" stroke="#8f9ee0" stroke-width="1.3"/><circle cx="10" cy="13.3" r="2.2" fill="none" stroke="#8f9ee0" stroke-width="1.3"/></svg>
<svg style="left:284px;top:90.5px" width="17" height="16" viewBox="0 0 17 16"><path d="M1 1h6l2 2v8H1z" fill="#dfe6f7" stroke="#aebde6" stroke-width="0.8"/><path d="M7 5h6l2 2v8H7z" fill="#e6ecfa" stroke="#aebde6" stroke-width="0.8"/><path d="M9 9h4M9 11h4M9 13h4" stroke="#aebde6" stroke-width="0.7"/></svg>
<svg style="left:323px;top:90px" width="18" height="17" viewBox="0 0 18 17"><rect x="1" y="2.5" width="12" height="12.5" rx="1" fill="#f2dc9a" stroke="#d8c27a" stroke-width="0.8"/><rect x="4.5" y="1" width="5" height="3.5" rx="1" fill="#c9c9c9"/><path d="M7 7h7l3 3v6H7z" fill="#eef0f6" stroke="#b5b9c6" stroke-width="0.8"/><path d="M9 11h5M9 13h5" stroke="#b5b9c6" stroke-width="0.7"/></svg>
<svg style="left:363px;top:89.5px" width="26" height="17" viewBox="0 0 26 17"><path d="M0 8.5h10" stroke="#79b094" stroke-width="1.6"/><path d="M17 1.5a7 7 0 0 0 0 14z" fill="#79b094"/><rect x="16" y="1.5" width="3" height="14" fill="#79b094"/><rect x="19" y="3" width="7" height="2.6" fill="#79b094"/><rect x="19" y="11.4" width="7" height="2.6" fill="#79b094"/></svg>
<svg style="left:402px;top:86px" width="28" height="25" viewBox="0 0 28 25"><path d="M0 12h9" stroke="#b8242c" stroke-width="1.6"/><path d="M16 5a7 7 0 0 0 0 14z" fill="#b0202a"/><rect x="15" y="5" width="2.5" height="14" fill="#b0202a"/><rect x="20" y="6.5" width="7" height="2.4" fill="#c84848"/><rect x="20" y="14.6" width="7" height="2.4" fill="#c84848"/><rect x="20" y="10.7" width="7" height="1.8" fill="#c84848"/><path d="M21.5 0L13.5 25" stroke="#e02a2a" stroke-width="1.6"/><path d="M24 0L16 25" stroke="#e05a5a" stroke-width="0.8"/></svg>
<svg style="left:440.5px;top:86.5px" width="31" height="27" viewBox="0 0 31 27"><rect x="0" y="1" width="22.5" height="12.5" fill="#8c8c8c"/><rect x="0" y="11" width="22.5" height="2.5" fill="#6e6e6e"/><path d="M22.5 5L30.5 0.5v13.5L22.5 9.5z" fill="#8a8a8a"/><path d="M8.5 13.5L4 26.5M12.5 13.5l4.5 13" stroke="#777" stroke-width="1.5"/><text x="11.2" y="10.8" font-size="10.5" font-weight="bold" fill="#63ea62" text-anchor="middle" font-family="Liberation Sans,sans-serif" textLength="16" lengthAdjust="spacingAndGlyphs">ON</text></svg>
<svg style="left:480px;top:86.5px" width="31" height="27" viewBox="0 0 31 27"><rect x="0" y="1" width="22.5" height="12.5" fill="#0c0c0c"/><path d="M22.5 5L30.5 0.5v13.5L22.5 9.5z" fill="#0c0c0c"/><path d="M8.5 13.5L4 26.5M12.5 13.5l4.5 13" stroke="#0c0c0c" stroke-width="1.700"/><text x="11.2" y="10.8" font-size="10.5" font-weight="bold" fill="#f2261e" text-anchor="middle" font-family="Liberation Sans,sans-serif" textLength="19" lengthAdjust="spacingAndGlyphs">OFF</text></svg>
<svg style="left:528.4px;top:84px" width="28" height="28" viewBox="0 0 28 28"><circle cx="14" cy="14" r="13.3" fill="#f5cd78"/><text x="14" y="17.24" font-size="9" font-weight="bold" fill="#c08a3a" text-anchor="middle" font-family="Liberation Sans,sans-serif"></text></svg>
<svg style="left:533px;top:95.5px" width="19" height="5"><circle cx="3" cy="2.5" r="1.9" fill="#9a8a72"/><circle cx="9.5" cy="2.5" r="1.9" fill="#9a8a72"/><circle cx="16" cy="2.5" r="1.9" fill="#9a8a72"/></svg>
<svg style="left:568px;top:84px" width="28" height="28" viewBox="0 0 28 28"><circle cx="14" cy="14" r="13.3" fill="#c79ae8"/><text x="14" y="17.744" font-size="10.4" font-weight="bold" fill="#f4e8ff" text-anchor="middle" font-family="Liberation Sans,sans-serif">ADV</text></svg>
<svg style="left:607.6px;top:84px" width="28" height="28" viewBox="0 0 28 28"><circle cx="14" cy="14" r="13.3" fill="#7d80e8"/><text x="14" y="17.744" font-size="10.4" font-weight="bold" fill="#eef0ff" text-anchor="middle" font-family="Liberation Sans,sans-serif">SER</text></svg>
<svg style="left:646.5px;top:84px" width="28" height="28" viewBox="0 0 28 28"><circle cx="14" cy="14" r="13.3" fill="#8ee4f6"/><text x="14" y="17.744" font-size="10.4" font-weight="bold" fill="#6fbfd6" text-anchor="middle" font-family="Liberation Sans,sans-serif">FITS</text></svg>
<div style="left:692.6px;top:89.4px;width:16.7px;height:16.7px;background:#e8261e"></div>
<svg style="left:732px;top:85.5px" width="30" height="28" viewBox="0 0 30 28"><rect x="0.7" y="0.7" width="28.6" height="16" fill="#52f04e" stroke="#2a6a2a" stroke-width="1.4"/><text x="15" y="13" font-size="10.5" font-weight="bold" fill="#0d2a0d" text-anchor="middle" font-family="Liberation Sans,sans-serif" textLength="21" lengthAdjust="spacingAndGlyphs">FITS</text><text x="15" y="27" font-size="10.5" font-weight="bold" fill="#1a1f2e" text-anchor="middle" font-family="Liberation Sans,sans-serif" textLength="28" lengthAdjust="spacingAndGlyphs">LIGHT</text></svg>
<svg style="left:771.5px;top:85.5px" width="30" height="28" viewBox="0 0 30 28"><rect x="0.7" y="0.7" width="28.6" height="16" fill="#256a2c" stroke="#173a1a" stroke-width="1.4"/><text x="15" y="13" font-size="10.5" font-weight="bold" fill="#d8ead8" text-anchor="middle" font-family="Liberation Sans,sans-serif" textLength="21" lengthAdjust="spacingAndGlyphs">FITS</text><text x="15" y="27" font-size="10.5" font-weight="bold" fill="#1a1f2e" text-anchor="middle" font-family="Liberation Sans,sans-serif" textLength="24" lengthAdjust="spacingAndGlyphs">DARK</text></svg>
<svg style="left:811px;top:85.5px" width="30" height="28" viewBox="0 0 30 28"><rect x="0.7" y="0.7" width="28.6" height="16" fill="#3d9a36" stroke="#245a22" stroke-width="1.4"/><text x="15" y="13" font-size="10.5" font-weight="bold" fill="#c5f0c0" text-anchor="middle" font-family="Liberation Sans,sans-serif" textLength="21" lengthAdjust="spacingAndGlyphs">FITS</text><text x="15" y="27" font-size="10.5" font-weight="bold" fill="#1a1f2e" text-anchor="middle" font-family="Liberation Sans,sans-serif" textLength="24" lengthAdjust="spacingAndGlyphs">FLAT</text></svg>
<svg style="left:858px;top:84.5px" width="28" height="29" viewBox="0 0 28 29"><rect width="28" height="29" fill="#070707"/><path d="M0 11.5h28M17 0v29" stroke="#2faa3a" stroke-width="1"/><circle cx="17" cy="11.5" r="2.3" fill="#fff"/><g fill="#fff"><circle cx="5" cy="4" r="1"/><circle cx="23" cy="19.5" r="1.2"/><circle cx="12" cy="21" r="0.7"/><circle cx="5" cy="25" r="0.7"/><circle cx="23" cy="5" r="0.6"/></g></svg>
<svg style="left:899px;top:86.5px" width="25" height="25" viewBox="0 0 25 25"><path d="M4 0h17l4 4v17l-4 4H4l-4-4V4z" fill="#0a28e0"/><path d="M4.5 7l1 2.6 2.6 1-2.6 1-1 2.6-1-2.6-2.6-1 2.6-1z" fill="#f4e84a"/><path d="M16 15.5l.8 2 2 .8-2 .8-.8 2-.8-2-2-.8 2-.8z" fill="#8af0c0"/><circle cx="13.5" cy="5.5" r="1.2" fill="#7ae8e0"/></svg>
<svg style="left:937px;top:84px" width="27" height="30" viewBox="0 0 27 30"><path d="M3 13l18-10 3 5.5-18 10z" fill="#8a8a8a"/><path d="M1 15l3-1.7 2 3.6-3 1.7z" fill="#6a6a6a"/><path d="M19 3.5l4-2.2 3.5 6.2-4 2.2z" fill="#777"/><circle cx="15" cy="14" r="2.2" fill="#111"/><path d="M15 15L9 30M15 15l1 15M15 15l8 14" stroke="#222" stroke-width="1.1"/></svg>
<svg style="left:981px;top:111.5px" width="6" height="4"><path d="M0 0h6L3 3.5z" fill="#111"/></svg>
<div style="left:233.8px;top:139.6px;width:281.1px;height:73.2px;border:1px solid #dcdcdc;box-sizing:border-box"></div>
<div style="left:239.8px;top:134.6px;width:144px;height:10px;background:#f0f0f0"></div>
<div style="left:241.8px;top:133.5px;font-size:10.3px;line-height:13px;color:#111;white-space:nowrap;">Site, Observer and Equipment</div>
<div style="left:246px;top:157.3px;width:122.2px;height:17.9px;background:#f9f9f9;border-radius:3px"></div>
<div style="left:249.5px;top:160.1px;font-size:10.3px;line-height:13px;color:#9a9a9a;white-space:nowrap;">Home</div>
<svg style="left:354.7px;top:163.8px" width="9" height="6" viewBox="0 0 9 6"><path d="M0.7 0.8L4.5 4.6 8.3 0.8" fill="none" stroke="#a8a8a8" stroke-width="1"/></svg>
<div style="left:379px;top:157.3px;width:122.8px;height:17.9px;background:#f9f9f9;border-radius:3px"></div>
<div style="left:382.5px;top:160.1px;font-size:10.3px;line-height:13px;color:#9a9a9a;white-space:nowrap;">Andreas SCHWEIZER</div>
<svg style="left:488.3px;top:163.8px" width="9" height="6" viewBox="0 0 9 6"><path d="M0.7 0.8L4.5 4.6 8.3 0.8" fill="none" stroke="#a8a8a8" stroke-width="1"/></svg>
<div style="left:246px;top:183.7px;width:122.2px;height:17.6px;background:#f9f9f9;border-radius:3px"></div>
<div style="left:249.5px;top:186.3px;font-size:10.3px;line-height:13px;color:#9a9a9a;white-space:nowrap;">Borg 107FL</div>
<svg style="left:354.7px;top:190px" width="9" height="6" viewBox="0 0 9 6"><path d="M0.7 0.8L4.5 4.6 8.3 0.8" fill="none" stroke="#a8a8a8" stroke-width="1"/></svg>
<div style="left:379px;top:183.7px;width:122.8px;height:17.6px;background:#f9f9f9;border-radius:3px"></div>
<div style="left:382.5px;top:186.3px;font-size:10.3px;line-height:13px;color:#9a9a9a;white-space:nowrap;">EQ-6 Pro</div>
<svg style="left:488.3px;top:190px" width="9" height="6" viewBox="0 0 9 6"><path d="M0.7 0.8L4.5 4.6 8.3 0.8" fill="none" stroke="#a8a8a8" stroke-width="1"/></svg>
<div style="left:233.8px;top:220.1px;width:281.1px;height:68.2px;border:1px solid #dcdcdc;box-sizing:border-box"></div>
<div style="left:239.8px;top:215.1px;width:45px;height:10px;background:#f0f0f0"></div>
<div style="left:241.8px;top:214px;font-size:10.3px;line-height:13px;color:#111;white-space:nowrap;">Camera</div>
<div style="left:243.3px;top:231.1px;font-size:10.3px;line-height:13px;color:#111;white-space:nowrap;">DVTI+CAM 430</div>
<div style="left:324.5px;top:231.1px;font-size:10.3px;line-height:13px;color:#111;white-space:nowrap;">-</div>
<div style="left:335.7px;top:231.1px;font-size:10.3px;line-height:13px;color:#111;white-space:nowrap;">1.1.0</div>
<div style="right:1078.5px;top:231.1px;font-size:10.3px;line-height:13px;color:#111;white-space:nowrap;">24°C</div>
<div style="left:243.3px;top:249px;font-size:10.3px;line-height:13px;color:#111;white-space:nowrap;">Status</div>
<div style="left:320.8px;top:249px;font-size:10.3px;line-height:13px;color:#111;white-space:nowrap;">USB3.0</div>
<div style="left:243.3px;top:269px;font-size:10.3px;line-height:13px;color:#111;white-space:nowrap;">Error Counters</div>
<div style="left:320.8px;top:269px;font-size:10.3px;line-height:13px;color:#2a22c8;white-space:nowrap;">P5300:000 L0:0000</div>
<div style="left:233.8px;top:295.8px;width:281.1px;height:44.2px;border:1px solid #dcdcdc;box-sizing:border-box"></div>
<div style="left:239.8px;top:290.8px;width:52px;height:10px;background:#f0f0f0"></div>
<div style="left:241.8px;top:289.7px;font-size:10.3px;line-height:13px;color:#111;white-space:nowrap;">Resolution</div>
<div style="left:243px;top:308px;width:118.4px;height:18.7px;background:#fdfdfd;box-sizing:border-box;border:1px solid #d4d4d4;border-radius:3px"></div>
<div style="left:246.5px;top:311.2px;font-size:10.3px;line-height:13px;color:#111;white-space:nowrap;">1624 x 128 (Fast)</div>
<svg style="left:347.9px;top:314.9px" width="9" height="6" viewBox="0 0 9 6"><path d="M0.7 0.8L4.5 4.6 8.3 0.8" fill="none" stroke="#444" stroke-width="1"/></svg>
<div style="left:233.8px;top:346.9px;width:281.1px;height:98.6px;border:1px solid #dcdcdc;box-sizing:border-box"></div>
<div style="left:239.8px;top:341.9px;width:90px;height:10px;background:#f0f0f0"></div>
<div style="left:241.8px;top:340.8px;font-size:10.3px;line-height:13px;color:#111;white-space:nowrap;">Exposure and Gain</div>
<div style="left:243.3px;top:365px;font-size:10.3px;line-height:13px;color:#111;white-space:nowrap;">Exp (ms)</div>
<div style="left:288.6px;top:361px;width:37.3px;height:21.9px;background:#fff;box-sizing:border-box;border:1px solid #ececec;border-bottom:1px solid #8f8f8f;border-radius:1px"></div>
<div style="left:293.1px;top:363.9px;font-size:10.3px;line-height:13px;color:#111;white-space:nowrap;">4</div>
<div style="left:329.1px;top:361.4px;width:15.4px;height:10px;background:#fafafa;box-sizing:border-box;border:1px solid #c9c9c9;border-radius:2px"></div>
<div style="left:329.1px;top:372.4px;width:15.4px;height:9.9px;background:#fafafa;box-sizing:border-box;border:1px solid #c9c9c9;border-radius:2px"></div>
<svg style="left:333.3px;top:364.3px" width="7" height="4.5"><path d="M0 4.5L3.5 0 7 4.5z" fill="#222"/></svg>
<svg style="left:333.3px;top:374.9px" width="7" height="4.5"><path d="M0 0L3.5 4.5 7 0z" fill="#222"/></svg>
<div style="left:358.7px;top:365px;font-size:10.3px;line-height:13px;color:#111;white-space:nowrap;">Frame rate (fps)</div>
<div style="left:438.6px;top:361px;width:47.7px;height:21.9px;background:#fff;box-sizing:border-box;border:1px solid #ececec;border-bottom:1px solid #8f8f8f;border-radius:1px"></div>
<div style="left:443.1px;top:363.9px;font-size:10.3px;line-height:13px;color:#111;white-space:nowrap;">250.00</div>
<div style="left:489.3px;top:361.4px;width:15.1px;height:10px;background:#fafafa;box-sizing:border-box;border:1px solid #c9c9c9;border-radius:2px"></div>
<div style="left:489.3px;top:372.4px;width:15.1px;height:9.9px;background:#fafafa;box-sizing:border-box;border:1px solid #c9c9c9;border-radius:2px"></div>
<svg style="left:493.4px;top:364.3px" width="7" height="4.5"><path d="M0 4.5L3.5 0 7 4.5z" fill="#222"/></svg>
<svg style="left:493.4px;top:374.9px" width="7" height="4.5"><path d="M0 0L3.5 4.5 7 0z" fill="#222"/></svg>
<div style="left:243.3px;top:392.7px;font-size:10.3px;line-height:13px;color:#111;white-space:nowrap;">Gain</div>
<div style="left:288.3px;top:389px;width:77.8px;height:18.5px;background:#fdfdfd;box-sizing:border-box;border:1px solid #d4d4d4;border-radius:3px"></div>
<div style="left:291.8px;top:392.1px;font-size:10.3px;line-height:13px;color:#111;white-space:nowrap;">+24 dB</div>
<svg style="left:352.6px;top:395.8px" width="9" height="6" viewBox="0 0 9 6"><path d="M0.7 0.8L4.5 4.6 8.3 0.8" fill="none" stroke="#444" stroke-width="1"/></svg>
<div style="left:395.2px;top:393.9px;width:13px;height:13px;background:#1f5fbf;border-radius:3px"></div>
<svg style="left:395.2px;top:393.9px" width="13" height="13" viewBox="0 0 13 13"><path d="M3 6.7L5.5 9.2 10 4.2" fill="none" stroke="#fff" stroke-width="1.3"/></svg>
<div style="left:411.2px;top:394.4px;font-size:10.3px;line-height:13px;color:#111;white-space:nowrap;">High Gain Mode</div>
<div style="left:243.3px;top:420.8px;font-size:10.3px;line-height:13px;color:#111;white-space:nowrap;">Black Level</div>
<div style="left:313.3px;top:415.8px;width:53.7px;height:21.2px;background:#fff;box-sizing:border-box;border:1px solid #ececec;border-bottom:1px solid #8f8f8f;border-radius:1px"></div>
<div style="left:317.8px;top:418.7px;font-size:10.3px;line-height:13px;color:#111;white-space:nowrap;">50</div>
<div style="left:233.8px;top:452.5px;width:281.1px;height:124.3px;border:1px solid #dcdcdc;box-sizing:border-box"></div>
<div style="left:239.8px;top:447.5px;width:86px;height:10px;background:#f0f0f0"></div>
<div style="left:241.8px;top:446.4px;font-size:10.3px;line-height:13px;color:#111;white-space:nowrap;">Image Processing</div>
<div style="left:243.3px;top:469px;width:13px;height:13px;background:#fafafa;box-sizing:border-box;border:1px solid #6f6f6f;border-radius:3px"></div>
<div style="left:259.3px;top:469.5px;font-size:10.3px;line-height:13px;color:#111;white-space:nowrap;">8-bit</div>
<div style="left:291.4px;top:469px;width:13px;height:13px;background:#fafafa;box-sizing:border-box;border:1px solid #6f6f6f;border-radius:3px"></div>
<div style="left:307.4px;top:469.5px;font-size:10.3px;line-height:13px;color:#111;white-space:nowrap;">Invert</div>
<div style="left:345.5px;top:469px;width:13px;height:13px;background:#fafafa;box-sizing:border-box;border:1px solid #6f6f6f;border-radius:3px"></div>
<div style="left:361.5px;top:469.5px;font-size:10.3px;line-height:13px;color:#111;white-space:nowrap;">FPN reduction</div>
<div style="left:433.8px;top:468.8px;font-size:10.3px;line-height:13px;color:#111;white-space:nowrap;">Flip</div>
<div style="left:456.9px;top:462.6px;width:49.1px;height:19.4px;background:#fdfdfd;box-sizing:border-box;border:1px solid #d4d4d4;border-radius:3px"></div>
<div style="left:460.4px;top:466.1px;font-size:10.3px;line-height:13px;color:#111;white-space:nowrap;">none</div>
<svg style="left:492.5px;top:469.8px" width="9" height="6" viewBox="0 0 9 6"><path d="M0.7 0.8L4.5 4.6 8.3 0.8" fill="none" stroke="#444" stroke-width="1"/></svg>
<div style="left:243.3px;top:496.8px;width:13px;height:13px;background:#fafafa;box-sizing:border-box;border:1px solid #6f6f6f;border-radius:3px"></div>
<div style="left:259.3px;top:497.3px;font-size:10.3px;line-height:13px;color:#111;white-space:nowrap;">Dark</div>
<div style="left:290.2px;top:493px;width:215.4px;height:18px;background:#f6f6f6"></div>
<svg style="left:492.1px;top:499.5px" width="9" height="6" viewBox="0 0 9 6"><path d="M0.7 0.8L4.5 4.6 8.3 0.8" fill="none" stroke="#a8a8a8" stroke-width="1"/></svg>
<div style="left:251.1px;top:522.9px;font-size:10.3px;line-height:13px;color:#111;white-space:nowrap;">Offset</div>
<div style="left:290.2px;top:517.5px;width:46.2px;height:21.8px;background:#fff;box-sizing:border-box;border:1px solid #ececec;border-bottom:1px solid #8f8f8f;border-radius:1px"></div>
<div style="left:294.7px;top:520.4px;font-size:10.3px;line-height:13px;color:#111;white-space:nowrap;">2048</div>
<div style="left:243.3px;top:553.3px;width:13px;height:13px;background:#fafafa;box-sizing:border-box;border:1px solid #6f6f6f;border-radius:3px"></div>
<div style="left:259.3px;top:553.8px;font-size:10.3px;line-height:13px;color:#111;white-space:nowrap;">Flat</div>
<div style="left:290.2px;top:549px;width:215.4px;height:18.2px;background:#f6f6f6"></div>
<svg style="left:492.1px;top:555.6px" width="9" height="6" viewBox="0 0 9 6"><path d="M0.7 0.8L4.5 4.6 8.3 0.8" fill="none" stroke="#a8a8a8" stroke-width="1"/></svg>
<div style="left:233.8px;top:586px;width:281.1px;height:39px;border:1px solid #dcdcdc;box-sizing:border-box"></div>
<div style="left:239.8px;top:581px;width:44px;height:10px;background:#f0f0f0"></div>
<div style="left:241.8px;top:579.9px;font-size:10.3px;line-height:13px;color:#111;white-space:nowrap;">Overlay</div>
<div style="left:243.4px;top:601.2px;width:13px;height:13px;background:#fafafa;box-sizing:border-box;border:1px solid #6f6f6f;border-radius:3px"></div>
<div style="left:259.4px;top:601.7px;font-size:10.3px;line-height:13px;color:#111;white-space:nowrap;">1PPS</div>
<div style="left:293.7px;top:601.2px;width:13px;height:13px;background:#1f5fbf;border-radius:3px"></div>
<svg style="left:293.7px;top:601.2px" width="13" height="13" viewBox="0 0 13 13"><path d="M3 6.7L5.5 9.2 10 4.2" fill="none" stroke="#fff" stroke-width="1.3"/></svg>
<div style="left:309.7px;top:601.7px;font-size:10.3px;line-height:13px;color:#111;white-space:nowrap;">PC Time</div>
<div style="left:355.5px;top:601.2px;width:13px;height:13px;background:#fafafa;box-sizing:border-box;border:1px solid #6f6f6f;border-radius:3px"></div>
<div style="left:371.5px;top:601.7px;font-size:10.3px;line-height:13px;color:#111;white-space:nowrap;">Res. 0.1ms</div>
<div style="left:436.1px;top:596.8px;width:67.6px;height:18.9px;background:#fdfdfd;box-sizing:border-box;border:1px solid #d4d4d4;border-radius:3px"></div>
<div style="left:439.6px;top:600px;font-size:10.3px;line-height:13px;color:#111;white-space:nowrap;">ascii</div>
<svg style="left:490.2px;top:603.8px" width="9" height="6" viewBox="0 0 9 6"><path d="M0.7 0.8L4.5 4.6 8.3 0.8" fill="none" stroke="#444" stroke-width="1"/></svg>
<div style="left:233.8px;top:633.8px;width:281.1px;height:55.1px;border:1px solid #dcdcdc;box-sizing:border-box"></div>
<div style="left:239.8px;top:628.8px;width:26px;height:10px;background:#f0f0f0"></div>
<div style="left:241.8px;top:627.7px;font-size:10.3px;line-height:13px;color:#111;white-space:nowrap;">ROI</div>
<div style="left:243.4px;top:649px;width:13px;height:13px;background:#fafafa;box-sizing:border-box;border:1px solid #6f6f6f;border-radius:3px"></div>
<div style="left:259.4px;top:649.5px;font-size:10.3px;line-height:13px;color:#111;white-space:nowrap;">Enable ROI mode</div>
<div style="left:356px;top:644px;width:69.5px;height:19.5px;background:#f7f7f7;box-sizing:border-box;border:1px solid #eeeeee;border-radius:3px"></div>
<div style="left:240.8px;width:300px;text-align:center;top:648px;font-size:10.3px;line-height:13px;color:#9f9f9f;white-space:nowrap;">Start Editing</div>
<div style="left:437px;top:644px;width:69.2px;height:19.5px;background:#f7f7f7;box-sizing:border-box;border:1px solid #eeeeee;border-radius:3px"></div>
<div style="left:321.6px;width:300px;text-align:center;top:648px;font-size:10.3px;line-height:13px;color:#9f9f9f;white-space:nowrap;">Clear Zones</div>
<div style="left:243.4px;top:670.6px;font-size:10.3px;line-height:13px;color:#111;white-space:nowrap;">Only supported for recording ADV video</div>
<div style="left:233.8px;top:697.7px;width:281.1px;height:86.4px;border:1px solid #dcdcdc;box-sizing:border-box"></div>
<div style="left:239.8px;top:692.7px;width:52px;height:10px;background:#f0f0f0"></div>
<div style="left:241.8px;top:691.6px;font-size:10.3px;line-height:13px;color:#111;white-space:nowrap;">Statistics</div>
<div style="left:245px;top:710.1px;font-size:10.3px;line-height:13px;color:#111;white-space:nowrap;">Queue Length</div>
<div style="left:335.7px;top:708.9px;font-size:10.3px;line-height:13px;color:#2a22c8;white-space:nowrap;">0:592970&nbsp; 1:31277&nbsp; 2:11194&nbsp; 3:0</div>
<div style="left:245px;top:726.6px;font-size:10.3px;line-height:13px;color:#111;white-space:nowrap;">Processing</div>
<div style="left:338.1px;top:726.6px;font-size:10.3px;line-height:13px;color:#2a22c8;white-space:nowrap;">&lt;3/4:587013 &lt;1:19033</div>
<div style="left:245px;top:743.3px;font-size:10.3px;line-height:13px;color:#111;white-space:nowrap;">Recorded frames</div>
<div style="left:335.7px;top:743.3px;font-size:10.3px;line-height:13px;color:#2a22c8;white-space:nowrap;">2558 (missed 0)</div>
<div style="left:445.3px;top:743.3px;font-size:10.3px;line-height:13px;color:#2a22c8;white-space:nowrap;">33 s</div>
<div style="left:245px;top:761.6px;font-size:10.3px;line-height:13px;color:#111;white-space:nowrap;">Missed</div>
<div style="left:335.7px;top:761.6px;font-size:10.3px;line-height:13px;color:#2a22c8;white-space:nowrap;">0</div>
<div style="left:442.2px;top:758.7px;width:44.2px;height:19.2px;background:#fdfdfd;box-sizing:border-box;border:1px solid #d6d6d6;border-bottom-color:#c2c2c2;border-radius:3.5px"></div>
<div style="left:314.3px;width:300px;text-align:center;top:762.6px;font-size:10.3px;line-height:13px;color:#111;white-space:nowrap;">Reset</div>
<div style="left:526.2px;top:368px;width:1px;height:420px;background:#c4c4c4"></div>
<div style="left:526.2px;top:770.5px;width:548.8px;height:1px;background:#e2e2e2"></div>
<div style="left:224.5px;top:800px;width:862.5px;height:1px;background:#e2e2e2"></div>
<div style="left:227.6px;top:805.4px;font-size:10.6px;line-height:14px;color:#111;white-space:nowrap;">Ready</div>
<div style="left:527.2px;top:140px;width:530.8px;height:115.4px;border:1px solid #dcdcdc;box-sizing:border-box"></div>
<div style="left:533px;top:135px;width:123px;height:10px;background:#f0f0f0"></div>
<div style="left:655px;top:135px;width:385px;height:10px;background:#f0f0f0"></div>
<div style="left:535px;top:134px;font-size:10.3px;line-height:13px;color:#111;white-space:nowrap;">Preview</div>
<div style="left:581px;top:134px;font-size:10.3px;line-height:13px;color:#2a22c8;white-space:nowrap;">1624 x 128</div>
<div style="left:661px;top:133.5px;font-size:10.6px;line-height:14px;color:#111;white-space:nowrap;">20231011 20:23:17.846-20:23:17.858 - 2794602 - 1624x128 - 1x1 - 4ms - GPS</div>
<div style="left:534.3px;top:156.3px;width:87.6px;height:18.9px;background:#fdfdfd;box-sizing:border-box;border:1px solid #d4d4d4;border-radius:3px"></div>
<div style="left:537.8px;top:159.6px;font-size:10.3px;line-height:13px;color:#111;white-space:nowrap;">Aspect scale</div>
<svg style="left:608.4px;top:163.2px" width="9" height="6" viewBox="0 0 9 6"><path d="M0.7 0.8L4.5 4.6 8.3 0.8" fill="none" stroke="#444" stroke-width="1"/></svg>
<div style="left:534.3px;top:182.7px;width:87.6px;height:19.3px;background:#fdfdfd;box-sizing:border-box;border:1px solid #8a8a8a;border-radius:3px"></div>
<div style="left:537.8px;top:186.2px;font-size:10.3px;line-height:13px;color:#111;white-space:nowrap;">100%</div>
<svg style="left:608.4px;top:189.8px" width="9" height="6" viewBox="0 0 9 6"><path d="M0.7 0.8L4.5 4.6 8.3 0.8" fill="none" stroke="#444" stroke-width="1"/></svg>
<div style="left:536px;top:215.8px;width:13px;height:13px;background:#1f5fbf;border-radius:3px"></div>
<svg style="left:536px;top:215.8px" width="13" height="13" viewBox="0 0 13 13"><path d="M3 6.7L5.5 9.2 10 4.2" fill="none" stroke="#fff" stroke-width="1.3"/></svg>
<div style="left:552px;top:216.3px;font-size:10.3px;line-height:13px;color:#111;white-space:nowrap;">Crosshair</div>
<div style="left:603.3px;top:215.8px;width:13px;height:13px;background:#fafafa;box-sizing:border-box;border:1px solid #6f6f6f;border-radius:3px"></div>
<div style="left:619.3px;top:216.3px;font-size:10.3px;line-height:13px;color:#111;white-space:nowrap;">Overflow</div>
<div style="left:536px;top:235.4px;width:13px;height:13px;background:#fafafa;box-sizing:border-box;border:1px solid #6f6f6f;border-radius:3px"></div>
<div style="left:552px;top:235.9px;font-size:10.3px;line-height:13px;color:#111;white-space:nowrap;">Platesolving (next Event)</div>
<div style="left:675.2px;top:152.5px;width:30.4px;height:20.2px;background:#fdfdfd;box-sizing:border-box;border:1px solid #d6d6d6;border-bottom-color:#c2c2c2;border-radius:3.5px"></div>
<div style="left:540.4px;width:300px;text-align:center;top:156.9px;font-size:10.3px;line-height:13px;color:#111;white-space:nowrap;">100</div>
<div style="left:675.2px;top:177.4px;width:30.4px;height:20.1px;background:#fdfdfd;box-sizing:border-box;border:1px solid #d6d6d6;border-bottom-color:#c2c2c2;border-radius:3.5px"></div>
<div style="left:540.4px;width:300px;text-align:center;top:181.8px;font-size:10.3px;line-height:13px;color:#111;white-space:nowrap;">99.9</div>
<div style="left:675.2px;top:202.2px;width:30.4px;height:19.8px;background:#fdfdfd;box-sizing:border-box;border:1px solid #d6d6d6;border-bottom-color:#c2c2c2;border-radius:3.5px"></div>
<div style="left:540.4px;width:300px;text-align:center;top:206.4px;font-size:10.3px;line-height:13px;color:#111;white-space:nowrap;">99</div>
<div style="left:675.2px;top:226.9px;width:30.4px;height:20.5px;background:#fdfdfd;box-sizing:border-box;border:1px solid #d6d6d6;border-bottom-color:#c2c2c2;border-radius:3.5px"></div>
<div style="left:540.4px;width:300px;text-align:center;top:231.5px;font-size:10.3px;line-height:13px;color:#111;white-space:nowrap;">95</div>
<div style="left:707.3px;top:151px;width:342.7px;height:96.7px;background:#fff"></div>
<div style="left:801px;top:151px;width:241px;height:88.4px;background:#fdfdfd;box-sizing:border-box;border-right:1px solid #333"></div>
<div style="left:823px;top:238.4px;width:219px;height:1px;background:#333"></div>
<div style="left:602.7px;width:300px;text-align:center;top:152px;font-size:10.3px;line-height:13px;color:#111;white-space:nowrap;">0</div>
<div style="left:602.7px;width:300px;text-align:center;top:238.1px;font-size:10.3px;line-height:13px;color:#111;white-space:nowrap;">0</div>
<div style="left:775.3px;width:300px;text-align:center;top:152px;font-size:10.3px;line-height:13px;color:#111;white-space:nowrap;">64 - 1345</div>
<div style="left:811.8px;top:166px;width:2.8px;height:73px;background:#b4b4b4"></div>
<div style="left:810.4px;top:151px;width:1.5px;height:88px;background:#1c1cae"></div>
<div style="left:814.8px;top:151px;width:0.9px;height:88px;background:#3a3ac8"></div>
<div style="left:811px;top:196px;width:230.5px;height:0.9px;background:#3a3ad0"></div>
<div style="left:802.2px;top:197px;width:8.8px;height:8.3px;box-sizing:border-box;border:1px solid #3a3ad0;background:#fff"></div>
<div style="left:802.2px;top:239px;width:8.8px;height:8.3px;box-sizing:border-box;border:1px solid #3a3ad0;background:#fff"></div>
<div style="left:814.5px;top:239px;width:8.8px;height:8.3px;box-sizing:border-box;border:1px solid #3a3ad0;background:#fff"></div>
<div style="left:1076.3px;top:139.5px;width:4.7px;height:448.5px;background:#9a9a9a"></div>
<svg style="left:526.2px;top:263px" width="531.8" height="105.4" viewBox="-0.5 0 531.8 105.4" overflow="hidden"><defs><filter id="nz" x="0" y="0" width="100%" height="100%" color-interpolation-filters="sRGB"><feTurbulence type="fractalNoise" baseFrequency="0.55" numOctaves="2" seed="7" result="t"/><feColorMatrix type="matrix" values="0.42 0.42 0.42 0 -0.105  0.42 0.42 0.42 0 -0.105  0.42 0.42 0.42 0 -0.105  0 0 0 0 1"/></filter></defs><rect x="-0.5" width="531.8" height="93.6" fill="#848484"/><rect x="-0.5" width="531.8" height="93.6" filter="url(#nz)" opacity="0.8"/><rect x="-0.5" y="93.6" width="531.8" height="11.8" fill="#000"/><g stroke="#e8261e" stroke-width="2"><path d="M-0.5 53.6H213.5M348 53.6H531.3M281.1 0V48.8M281.1 58.5V105.4"/></g><rect x="261.700" y="40" width="9.400" height="9.800" rx="4" fill="#fff"/><circle cx="266.400" cy="44.800" r="6.800" fill="#fff" opacity="0.28"/><circle cx="21.3" cy="22.5" r="11.3" fill="#ea2a1e"/><text x="38.5" y="32.6" font-size="27.5" font-weight="bold" fill="#ea2a1e" stroke="#ea2a1e" stroke-width="0.7" font-family="Liberation Sans,sans-serif" textLength="53.5" lengthAdjust="spacingAndGlyphs">ADV</text><text x="1" y="103.2" font-size="11" font-weight="bold" fill="#fff" font-family="Liberation Mono,monospace" textLength="111" lengthAdjust="spacingAndGlyphs">4ms 24dBH 0050 +0</text></svg>
<svg style="left:739.5px;top:474px" width="12" height="19" viewBox="0 0 12 19"><path d="M1 1v14.5l3.6-3.3 2.5 5.6 2-.9-2.5-5.4H11z" fill="#111" stroke="#fff" stroke-width="1"/></svg>
</div>

<!-- Occultation Events -->

<div class="th">
<div style="left:588.4px;top:589px;width:740.6px;height:256px;background:#f0f0f0;border-radius:7px 7px 0 0;box-shadow:0 1px 10px rgba(0,0,0,.45),0 0 1px rgba(0,0,0,.5)"></div>
<div style="left:588.4px;top:589px;width:740.6px;height:30.4px;background:#eff1fa;border-radius:7px 7px 0 0"></div>
<div style="left:597px;top:597.7px;font-size:11.9px;line-height:15px;color:#111;white-space:nowrap;">Occultation Events</div>
<div style="left:1308px;top:595.8px;width:20px;height:20.6px;background:#c9363e;border-radius:1px"></div>
<svg style="left:1314px;top:602px" width="8" height="8" viewBox="0 0 8 8"><path d="M1 1l6 6M7 1L1 7" stroke="#fff" stroke-width="1.3"/></svg>
<div style="left:595.8px;top:629.9px;width:20.6px;height:20.3px;background:#fdfdfd;box-sizing:border-box;border:1px solid #d6d6d6;border-bottom-color:#c2c2c2;border-radius:3.5px"></div>
<div style="left:456.1px;width:300px;text-align:center;top:633.5px;font-size:10.3px;line-height:13px;color:#111;white-space:nowrap;">&lt;</div>
<div style="left:620.9px;top:629.9px;width:90.5px;height:20.3px;background:#fff;box-sizing:border-box;border:1px solid #7a7a7a;border-radius:2px"></div>
<div style="left:623px;top:633.5px;font-size:10.4px;line-height:14px;color:#111;white-space:nowrap;">11.10.2023</div>
<div style="left:684.5px;top:634.5px;width:10px;height:11.5px;background:#fff;box-sizing:border-box;border:1px solid #8a8a8a;border-radius:2px;background-image:repeating-linear-gradient(90deg,#c9c9c9 0 1px,transparent 1px 3px),repeating-linear-gradient(180deg,#c9c9c9 0 1px,transparent 1px 3px)"></div>
<svg style="left:697.5px;top:638px" width="8" height="5"><path d="M0 0h8L4 5z" fill="#2f5fae"/></svg>
<div style="left:716.8px;top:629.9px;width:20.3px;height:20.3px;background:#fdfdfd;box-sizing:border-box;border:1px solid #d6d6d6;border-bottom-color:#c2c2c2;border-radius:3.5px"></div>
<div style="left:577px;width:300px;text-align:center;top:633.5px;font-size:10.3px;line-height:13px;color:#111;white-space:nowrap;">&gt;</div>
<div style="left:741.6px;top:629.9px;width:41.2px;height:20.3px;background:#fdfdfd;box-sizing:border-box;border:1px solid #d6d6d6;border-bottom-color:#c2c2c2;border-radius:3.5px"></div>
<div style="left:612.2px;width:300px;text-align:center;top:633.5px;font-size:10.3px;line-height:13px;color:#111;white-space:nowrap;">Today</div>
<div style="left:804.9px;top:629.9px;width:22.1px;height:20.3px;background:#fdfdfd;box-sizing:border-box;border:1px solid #d6d6d6;border-bottom-color:#c2c2c2;border-radius:3.5px"></div>
<div style="left:666px;width:300px;text-align:center;top:633.5px;font-size:10.3px;line-height:13px;color:#111;white-space:nowrap;">+</div>
<div style="left:831.8px;top:629.9px;width:22.4px;height:20.3px;background:#fdfdfd;box-sizing:border-box;border:1px solid #d6d6d6;border-bottom-color:#c2c2c2;border-radius:3.5px"></div>
<div style="left:693px;width:300px;text-align:center;top:633.5px;font-size:10.3px;line-height:13px;color:#111;white-space:nowrap;">xml</div>
<div style="left:596.5px;top:695.5px;width:285px;height:149.5px;background:#f5f5f5;border-top:1.5px solid #8a8a8a;box-sizing:border-box"></div>
<div style="left:863.8px;top:697px;width:17.3px;height:148px;background:#f0f0f0"></div>
<svg style="left:868px;top:701.5px" width="9" height="7"><path d="M0 6.5L4.5 0 9 6.5z" fill="#a8a8a8"/></svg>
<div style="left:596.5px;top:696.5px;width:267.3px;height:62.5px;background:#fff;box-sizing:border-box;border:2px solid #828282;border-right:1px solid #e0e0e0;border-bottom:1px solid #bdbdbd"></div>
<div style="left:604.5px;top:704.7px;font-size:10.4px;line-height:14px;color:#111;white-space:nowrap;">11.10.2023 20:22:56UT ±2.5s</div>
<div style="left:785.5px;top:704.2px;font-size:11.4px;line-height:15px;color:#9a9a9a;white-space:nowrap;">-00m 20s</div>
<svg style="left:842.5px;top:705px" width="11" height="13" viewBox="0 0 11 13"><path d="M0.5 2.5h10M3.5 2.5V1h4v1.5" fill="none" stroke="#222" stroke-width="1"/><path d="M1.5 4l.7 8.5h6.6L9.5 4z" fill="none" stroke="#222" stroke-width="1"/><path d="M3.8 5.5v5.5M5.5 5.5v5.5M7.2 5.5v5.5" stroke="#222" stroke-width="0.8"/></svg>
<div style="left:604.5px;top:724.4px;font-size:10.4px;line-height:14px;color:#111;white-space:nowrap;">(8055) Arnim - HIP 97928</div>
<div style="left:604.5px;top:737.6px;font-size:10.4px;line-height:14px;color:#111;white-space:nowrap;">D=0.7s&nbsp;&nbsp; P=16.7%&nbsp;&nbsp; mc=5.1&nbsp;&nbsp; dm=12.4</div>
<div style="left:596.5px;top:760px;width:267.3px;height:60.5px;background:#f0f0f0;box-sizing:border-box;border:2px solid #828282;border-right:1px solid #e6e6e6;border-bottom:1px solid #dadada"></div>
<div style="left:604.5px;top:767.4px;font-size:10.4px;line-height:14px;color:#111;white-space:nowrap;">12.10.2023 00:30:09UT ±2.4s</div>
<div style="left:785.5px;top:767.4px;font-size:10.4px;line-height:14px;color:#111;white-space:nowrap;font-weight:bold">4h 06m</div>
<svg style="left:842.5px;top:768px" width="11" height="13" viewBox="0 0 11 13"><path d="M0.5 2.5h10M3.5 2.5V1h4v1.5" fill="none" stroke="#222" stroke-width="1"/><path d="M1.5 4l.7 8.5h6.6L9.5 4z" fill="none" stroke="#222" stroke-width="1"/><path d="M3.8 5.5v5.5M5.5 5.5v5.5M7.2 5.5v5.5" stroke="#222" stroke-width="0.8"/></svg>
<div style="left:604.5px;top:786.9px;font-size:10.4px;line-height:14px;color:#111;white-space:nowrap;">(412) Elisabetha - UCAC4 459-005219</div>
<div style="left:604.5px;top:800.3px;font-size:10.4px;line-height:14px;color:#111;white-space:nowrap;">D=12.1s&nbsp;&nbsp; P=100.0%&nbsp;&nbsp; mc=12.4&nbsp;&nbsp; dm=1.4</div>
<div style="left:898.5px;top:645.9px;width:395.8px;height:82.7px;border:1px solid #dcdcdc;box-sizing:border-box"></div>
<div style="left:904.5px;top:640.9px;width:58px;height:10px;background:#f0f0f0"></div>
<div style="left:906.5px;top:639.8px;font-size:10.3px;line-height:13px;color:#111;white-space:nowrap;">Event Data</div>
<div style="left:915px;top:662.6px;font-size:10.4px;line-height:14px;color:#111;white-space:nowrap;">Date / Time</div>
<div style="left:995.9px;top:662.6px;font-size:10.4px;line-height:14px;color:#111;white-space:nowrap;">11.10.2023 20:22:56 UT&nbsp; ± 2.5 s</div>
<div style="left:1205.6px;top:662.6px;font-size:10.4px;line-height:14px;color:#111;white-space:nowrap;">-0h 00m 20s</div>
<div style="left:915px;top:684.1px;font-size:10.4px;line-height:14px;color:#111;white-space:nowrap;">Max. Duration</div>
<div style="left:995.9px;top:684.1px;font-size:10.4px;line-height:14px;color:#111;white-space:nowrap;">0.7 s</div>
<div style="left:915px;top:705.3px;font-size:10.4px;line-height:14px;color:#111;white-space:nowrap;">Probability</div>
<div style="left:995.9px;top:705.3px;font-size:10.4px;line-height:14px;color:#111;white-space:nowrap;">16.7 %</div>
<div style="left:898.5px;top:745.2px;width:395.8px;height:104.8px;border:1px solid #dcdcdc;box-sizing:border-box"></div>
<div style="left:904.5px;top:740px;width:42px;height:10px;background:#f0f0f0"></div>
<div style="left:906px;top:738.6px;font-size:10.4px;line-height:14px;color:#111;white-space:nowrap;">Objects</div>
<div style="left:915.8px;top:763px;font-size:10.4px;line-height:14px;color:#111;white-space:nowrap;">Asteroid</div>
<div style="left:995.9px;top:761.5px;font-size:10.4px;line-height:14px;color:#111;white-space:nowrap;">(8055) Arnim</div>
<div style="left:915.8px;top:783px;font-size:10.4px;line-height:14px;color:#111;white-space:nowrap;">Star</div>
<div style="left:995.9px;top:783px;font-size:10.4px;line-height:14px;color:#111;white-space:nowrap;">HIP 97928</div>
<div style="left:1113.6px;top:783px;font-size:10.4px;line-height:14px;color:#111;white-space:nowrap;">mag 5.1</div>
<div style="left:915.8px;top:804.2px;font-size:10.4px;line-height:14px;color:#111;white-space:nowrap;">Combined</div>
<div style="left:1113.6px;top:804.2px;font-size:10.4px;line-height:14px;color:#111;white-space:nowrap;">mag 5.1</div>
<div style="left:1162.3px;top:804.2px;font-size:10.4px;line-height:14px;color:#111;white-space:nowrap;">delta 12.4</div>
<div style="left:915.8px;top:831.4px;font-size:10.4px;line-height:14px;color:#111;white-space:nowrap;">Position</div>
<div style="left:995.9px;top:831.4px;font-size:10.4px;line-height:14px;color:#111;white-space:nowrap;">19h 54m 8.287s&nbsp; -08 34' 27.610&quot;</div>
</div>

<!-- Taskbar -->

<div style="left:0px;top:841.5px;width:1582px;height:46px;background:linear-gradient(90deg,#1b2735 0%,#1b2b42 10%,#1a345f 20%,#1a3868 40%,#1b3157 48%,#1f2836 51.5%,#202429 54%,#1f2226 100%)"></div>
<div style="left:0px;top:838px;width:3px;height:49px;background:#8d98a5;border-radius:0 0 0 6px"></div>
<svg style="left:22.5px;top:854.5px" width="25" height="25" viewBox="0 0 25 25"><defs><linearGradient id="wg" x1="0" y1="0" x2="1" y2="1"><stop offset="0" stop-color="#6fd4fb"/><stop offset="1" stop-color="#1f8fe0"/></linearGradient></defs><rect x="0" y="0" width="11.7" height="11.7" rx="1" fill="url(#wg)"/><rect x="13.3" y="0" width="11.7" height="11.7" rx="1" fill="url(#wg)"/><rect x="0" y="13.3" width="11.7" height="11.7" rx="1" fill="url(#wg)"/><rect x="13.3" y="13.3" width="11.7" height="11.7" rx="1" fill="url(#wg)"/></svg>
<div style="left:61.7px;top:850.3px;width:225.7px;height:32.3px;background:linear-gradient(180deg,#fafafa,#ececec);border-radius:16px"></div>
<svg style="left:73px;top:858.6px" width="17" height="17" viewBox="0 0 17 17"><circle cx="7" cy="7" r="5.3" fill="none" stroke="#1c1c1c" stroke-width="1.7"/><path d="M11 11 L15 15.2" stroke="#1c1c1c" stroke-width="1.9" stroke-linecap="round"/></svg>
<div style="left:99px;top:857.7px;font-size:14.5px;line-height:19px;color:#5c5c5c;white-space:nowrap;">Suche</div>
<svg style="left:259px;top:855.6px" width="24" height="24" viewBox="0 0 24 24"><path d="M12 2.2a9.6 9.6 0 1 1-5 17.8l-4.2 1.6 1.3-4.3A9.6 9.6 0 0 1 12 2.2z" fill="#fff" stroke="#2f8be6" stroke-width="1.5"/><path d="M9.3 6.2l2.3.8v7.8l3.2-1.8-1.6-.8-1-2.4 5 1.8v2.5l-5.6 3.2-2.3-1.3z" fill="#1b6fe0"/></svg>
<svg style="left:300px;top:854.2px" width="26" height="24" viewBox="0 0 26 24"><rect x="0" y="8" width="16" height="14" rx="2" fill="#6f757c"/><rect x="7" y="1" width="18" height="15" rx="2" fill="#e9eaec"/></svg>
<svg style="left:345px;top:853.2px" width="27" height="26" viewBox="0 0 27 26"><rect x="0" y="2" width="27" height="22" fill="#16130f"/><g fill="#cfcfcf"><rect x="1" y="3" width="2" height="2"/><rect x="5" y="3" width="2" height="2"/><rect x="9" y="3" width="2" height="2"/><rect x="13" y="3" width="2" height="2"/><rect x="17" y="3" width="2" height="2"/><rect x="21" y="3" width="2" height="2"/><rect x="1" y="21" width="2" height="2"/><rect x="5" y="21" width="2" height="2"/><rect x="9" y="21" width="2" height="2"/><rect x="13" y="21" width="2" height="2"/><rect x="17" y="21" width="2" height="2"/><rect x="21" y="21" width="2" height="2"/></g><ellipse cx="13.5" cy="13" rx="8" ry="6" fill="#f0a81e"/><path d="M11 9.5v7l6-3.5z" fill="#fff4cf"/></svg>
<svg style="left:389px;top:854.2px" width="28" height="25" viewBox="0 0 28 25"><path d="M1 3.5a2 2 0 0 1 2-2h7l3 3h12a2 2 0 0 1 2 2V21a2 2 0 0 1-2 2H3a2 2 0 0 1-2-2z" fill="#e8a317"/><path d="M1 9a2 2 0 0 1 2-2h22a2 2 0 0 1 2 2v12a2 2 0 0 1-2 2H3a2 2 0 0 1-2-2z" fill="#ffd75e"/><rect x="9" y="17" width="10" height="6" rx="1" fill="#3a8ee6"/></svg>
<svg style="left:435px;top:853.2px" width="26" height="26" viewBox="0 0 26 26"><defs><radialGradient id="yb" cx="0.4" cy="0.35" r="0.7"><stop offset="0" stop-color="#fff76a"/><stop offset="0.7" stop-color="#d9cf1a"/><stop offset="1" stop-color="#8f8a0c"/></radialGradient></defs><circle cx="13" cy="13" r="12.5" fill="url(#yb)"/><rect x="11.2" y="5" width="3.2" height="15" rx="1.5" fill="#8b8a3a"/></svg>
<svg style="left:480px;top:853.2px" width="26" height="26" viewBox="0 0 26 26"><defs><linearGradient id="eg" x1="0.2" y1="1" x2="0.9" y2="0"><stop offset="0" stop-color="#1566c8"/><stop offset="0.55" stop-color="#1fa0d8"/><stop offset="1" stop-color="#4fd08a"/></linearGradient></defs><path d="M13 0.5A12.5 12.5 0 0 1 25.5 12c0 4-3 6-6.500 6-2.500 0-4.500-1-4.500-2.800 0-1.200 1-1.700 1-3.200 0-2-2-3.500-4.500-3.500C6 8.500 2 12 0.600 15A12.500 12.500 0 0 1 13 0.500z" fill="url(#eg)"/><path d="M0.600 15C2 11 6 8.500 10 8.500c-2.500 1-4 3.500-4 6.500 0 5 4 9 9 9 2.500 0 5-1 7-3A12.500 12.500 0 0 1 0.600 15z" fill="#0f57b8"/><path d="M10.500 20.500c2 2.500 6.500 3.500 10 1.500 1.500-1 2.500-2 3-3-3 1.800-8 2.200-10.500-1.500-1-1.500-1.200-3-.8-4.200-2 1.500-3 4.700-1.700 7.200z" fill="#1a84d8"/></svg>
<svg style="left:525.5px;top:853.2px" width="26" height="26" viewBox="0 0 26 26"><circle cx="13" cy="13" r="12.5" fill="#6f9fd8"/><text x="13" y="18.5" font-size="16" fill="#fff" text-anchor="middle" font-family="Liberation Serif,serif">R</text></svg>
<div style="left:564px;top:846px;width:40px;height:40px;background:#2a3646;border-radius:4px"></div>
<svg style="left:571px;top:853.2px" width="27" height="26" viewBox="0 0 27 26"><path d="M8 3l6-2 6 2v7l-6 2-6-2z" fill="#d8352a"/><path d="M8 3l6 2 6-2-6-2z" fill="#f07a6a"/><path d="M1 14l5-1.5 5 1.5v6l-5 2-5-2z" fill="#39a845"/><path d="M13 16l6-2 6 2v7l-6 2-6-2z" fill="#2f7fd6"/><text x="14" y="9.5" font-size="6" fill="#fff" text-anchor="middle" font-weight="bold" font-family="Liberation Sans,sans-serif">M</text><text x="19" y="23" font-size="6" fill="#fff" text-anchor="middle" font-weight="bold" font-family="Liberation Sans,sans-serif">C</text></svg>
<svg style="left:616px;top:853.2px" width="26" height="26" viewBox="0 0 26 26"><circle cx="13" cy="13" r="12.5" fill="#f2c318"/><path d="M13 13L2.2 6.8A12.5 12.5 0 0 1 23.8 6.8z" fill="#e03a2c"/><path d="M13 13L2.2 6.8A12.5 12.5 0 0 0 13 25.5z" fill="#2f9e49"/><path d="M13 13h10.8" stroke="#e03a2c" stroke-width="0"/><circle cx="13" cy="13" r="5.6" fill="#fff"/><circle cx="13" cy="13" r="4.4" fill="#3a7fe8"/></svg>
<svg style="left:662px;top:852.2px" width="28" height="28" viewBox="0 0 28 28"><path d="M3 6l9-3v22l-9-2z" fill="#c8322a"/><path d="M12 3l7 2v20l-7 0z" fill="#e9e9e9"/><path d="M6 8l4-1.3v16l-4-1z" fill="#3aa7e0"/><path d="M14 6l3 .8v16h-3z" fill="#f28b30"/><rect x="21" y="1" width="3" height="11" rx="1.5" fill="#f2f2f2" stroke="#444" stroke-width="0.6"/><circle cx="22.5" cy="13" r="3" fill="#d62b22" stroke="#444" stroke-width="0.6"/></svg>
<svg style="left:707px;top:853.2px" width="26" height="26" viewBox="0 0 26 26"><rect width="26" height="26" fill="#0c1f5a"/><path d="M19 5H8v16h11M8 13h8" fill="none" stroke="#e8e65a" stroke-width="1.8"/><g fill="#fff"><circle cx="8" cy="5" r="2"/><circle cx="19" cy="5" r="2"/><circle cx="8" cy="21" r="2"/><circle cx="19" cy="21" r="2"/><circle cx="16" cy="13" r="2"/><circle cx="8" cy="13" r="2"/></g></svg>
<svg style="left:752px;top:853.2px" width="26" height="26" viewBox="0 0 26 26"><circle cx="13" cy="13" r="12.5" fill="#1a1c8e"/><circle cx="13" cy="13" r="12.5" fill="none" stroke="#3a3fd0" stroke-width="1"/><text x="13" y="16.5" font-size="9" fill="#f0d84a" text-anchor="middle" font-weight="bold" font-family="Liberation Sans,sans-serif">C2A</text></svg>
<div style="left:399.5px;top:883px;width:7px;height:2.5px;background:#8a8f96;border-radius:1.5px"></div>
<div style="left:576px;top:883px;width:16px;height:2.5px;background:#4ca0e8;border-radius:1.5px"></div>
<div style="left:664px;top:883px;width:22px;height:2.5px;background:#f08a9c;border-radius:1.5px"></div>
<div style="left:716.5px;top:883px;width:7px;height:2.5px;background:#8a8f96;border-radius:1.5px"></div>
<div style="left:761px;top:883px;width:7px;height:2.5px;background:#8a8f96;border-radius:1.5px"></div>
<svg style="left:1187px;top:859px" width="15" height="12" viewBox="0 0 15 12"><path d="M2 9l5.5-5.5L13 9" fill="none" stroke="#f2f2f2" stroke-width="1.7" stroke-linecap="round" stroke-linejoin="round"/></svg>
<div style="left:1077px;width:300px;text-align:center;top:859.5px;font-size:10px;line-height:13px;color:#3f8fd8;white-space:nowrap;">83</div>
<div style="left:1110px;width:300px;text-align:center;top:859.5px;font-size:10px;line-height:13px;color:#5cc45a;white-space:nowrap;">81</div>
<div style="left:1143px;width:300px;text-align:center;top:859.5px;font-size:10px;line-height:13px;color:#5cc45a;white-space:nowrap;">85</div>
<div style="left:1176px;width:300px;text-align:center;top:859.5px;font-size:10px;line-height:13px;color:#d8b83a;white-space:nowrap;">94</div>
<div style="left:1215.5px;width:300px;text-align:center;top:850.5px;font-size:11.5px;line-height:15px;color:#fff;white-space:nowrap;">DEU</div>
<div style="left:1215.5px;width:300px;text-align:center;top:867.5px;font-size:11.5px;line-height:15px;color:#fff;white-space:nowrap;">SG</div>
<svg style="left:1395px;top:857px" width="20" height="16" viewBox="0 0 20 16"><g fill="none" stroke="#fff" stroke-width="1.5" stroke-linecap="round"><path d="M1.5 6a12 12 0 0 1 17 0"/><path d="M4.3 9a8 8 0 0 1 11.4 0"/><path d="M7.2 11.8a4 4 0 0 1 5.6 0"/></g><circle cx="10" cy="14" r="1.3" fill="#fff"/></svg>
<svg style="left:1420px;top:858px" width="19" height="15" viewBox="0 0 19 15"><path d="M1 5h3l4-3.5v12L4 10H1z" fill="none" stroke="#fff" stroke-width="1.3" stroke-linejoin="round"/><path d="M11.5 5l5 5M16.5 5l-5 5" stroke="#fff" stroke-width="1.3" stroke-linecap="round"/></svg>
<svg style="left:1444px;top:857px" width="21" height="16" viewBox="0 0 21 16"><rect x="1" y="4.5" width="16.5" height="10" rx="2" fill="none" stroke="#fff" stroke-width="1.3"/><rect x="18.2" y="7.5" width="1.8" height="4" rx="0.8" fill="#fff"/><rect x="3" y="6.5" width="9" height="6" rx="1" fill="#fff"/><path d="M3 1l3 3.5-2 1z" fill="#fff"/></svg>
<div style="right:43px;top:850.8px;font-size:11.5px;line-height:15px;color:#fff;white-space:nowrap;">22:23</div>
<div style="right:43px;top:867px;font-size:11.5px;line-height:15px;color:#fff;white-space:nowrap;">11.10.2023</div>
<div style="left:1546.5px;top:858px;width:16px;height:16px;background:#4cb4f0;border-radius:8px;color:#0a2a4a;font-size:9.5px;line-height:16px;text-align:center">3</div>
</div></body></html>
